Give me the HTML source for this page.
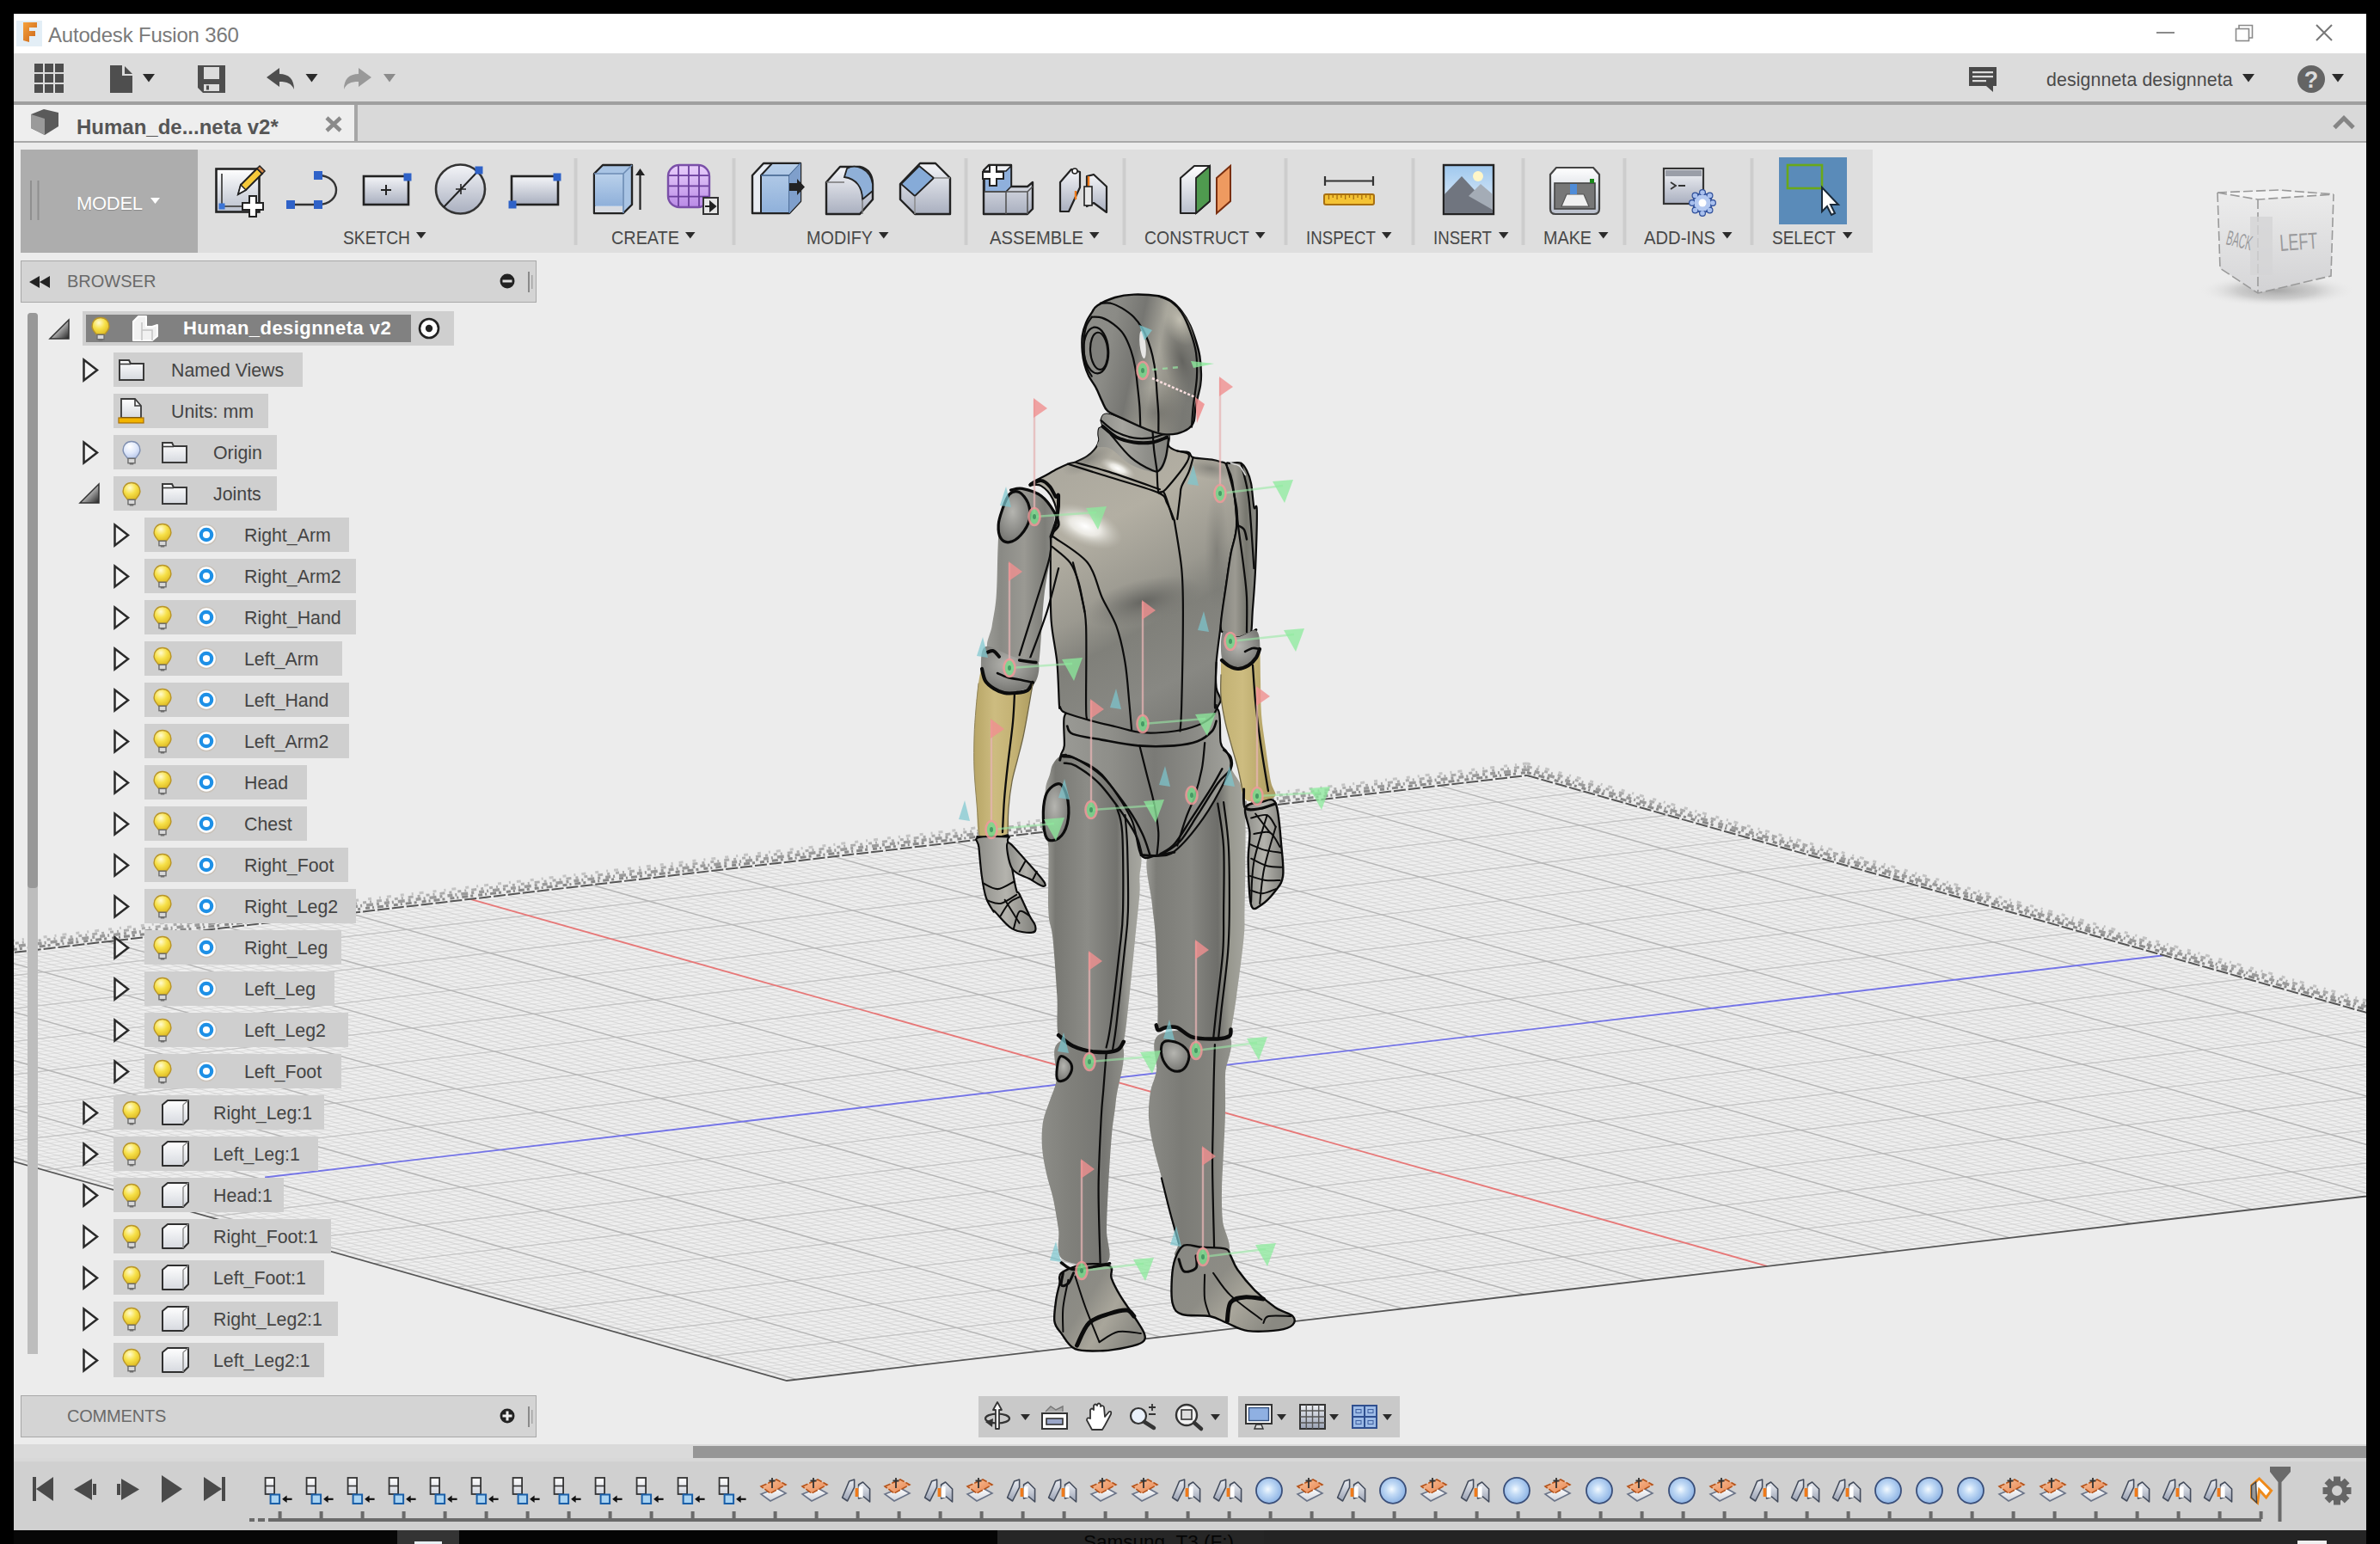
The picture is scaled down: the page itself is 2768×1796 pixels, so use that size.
<!DOCTYPE html>
<html><head><meta charset="utf-8"><title>Autodesk Fusion 360</title>
<style>
html,body{margin:0;padding:0}
body{width:2768px;height:1796px;background:#000;position:relative;overflow:hidden;font-family:"Liberation Sans",sans-serif;}
.a{position:absolute}
.t{position:absolute;white-space:nowrap;line-height:1}
#titlebar{left:16px;top:16px;width:2736px;height:46px;background:#fff}
#qat{left:16px;top:62px;width:2736px;height:56px;background:#dcdcdc}
#sep1{left:16px;top:118px;width:2736px;height:4px;background:#9f9f9f}
#tabrow{left:16px;top:122px;width:2736px;height:42px;background:#d9d9d9}
#tab{left:16px;top:122px;width:396px;height:42px;background:#eeeeee}
#tabsep{left:412px;top:122px;width:4px;height:42px;background:#a6a6a6}
#sep2{left:16px;top:164px;width:2736px;height:2px;background:#a9a9a9}
#canvas{left:16px;top:166px;width:2736px;height:1514px;background:#ececec}
#ribbon{left:24px;top:174px;width:2154px;height:120px;background:#dedede}
#model{left:24px;top:174px;width:206px;height:120px;background:#adadad}
.hdr{background:#d4d4d4;border:1px solid #a8a8a8;box-sizing:border-box}
.row{position:absolute;height:40px;background:#cfcfcf}
.rt{position:absolute;white-space:nowrap;font-size:21.33px;line-height:42px;color:#444;top:0}
.grp{position:absolute;white-space:nowrap;font-size:21.33px;line-height:1;color:#4a4a4a}
</style></head>
<body>
<div class="a" id="titlebar"></div>
<div class="a" id="qat"></div>
<div class="a" id="sep1"></div>
<div class="a" id="tabrow"></div>
<div class="a" id="tab"></div>
<div class="a" id="tabsep"></div>
<div class="a" id="sep2"></div>
<div class="a" id="canvas"></div>
<svg class="a" style="left:16px;top:166px" width="2736" height="1514" viewBox="16 166 2736 1514"><defs><radialGradient id="vcSh"><stop offset="0" stop-color="#a8a8a8"/><stop offset="0.5" stop-color="#c4c4c4" stop-opacity="0.8"/><stop offset="1" stop-color="#ececec" stop-opacity="0"/></radialGradient><linearGradient id="vcL" x1="0" y1="0" x2="0" y2="1"><stop offset="0" stop-color="#ececec"/><stop offset="1" stop-color="#d6d6d8"/></linearGradient><linearGradient id="vcR" x1="0" y1="0" x2="0" y2="1"><stop offset="0" stop-color="#ebebeb"/><stop offset="1" stop-color="#d2d2d4"/></linearGradient></defs><defs><linearGradient id="fHead" x1="0" y1="0" x2="1" y2="0.25"><stop offset="0" stop-color="#8e8e89"/><stop offset="0.3" stop-color="#8b8b86"/><stop offset="0.52" stop-color="#767672"/><stop offset="0.7" stop-color="#a6a49a"/><stop offset="0.85" stop-color="#8f8d84"/><stop offset="1" stop-color="#7a7a75"/></linearGradient><linearGradient id="fTorso" gradientUnits="userSpaceOnUse" x1="1220" y1="520" x2="1400" y2="860"><stop offset="0" stop-color="#a9a69c"/><stop offset="0.28" stop-color="#b3afa3"/><stop offset="0.5" stop-color="#9b9990"/><stop offset="0.62" stop-color="#80807a"/><stop offset="0.8" stop-color="#888883"/><stop offset="1" stop-color="#757571"/></linearGradient><radialGradient id="fHi"><stop offset="0" stop-color="#ffffff"/><stop offset="0.4" stop-color="#f4f3ee" stop-opacity="0.85"/><stop offset="1" stop-color="#c8c6bc" stop-opacity="0"/></radialGradient><radialGradient id="fHi2"><stop offset="0" stop-color="#c2bfb2"/><stop offset="1" stop-color="#aaa89c" stop-opacity="0"/></radialGradient><radialGradient id="fShade"><stop offset="0" stop-color="#60605c" stop-opacity="0.9"/><stop offset="1" stop-color="#70706c" stop-opacity="0"/></radialGradient><linearGradient id="fPel" x1="0" y1="0" x2="1" y2="0"><stop offset="0" stop-color="#9a9a95"/><stop offset="0.3" stop-color="#8e8e89"/><stop offset="0.55" stop-color="#7a7a76"/><stop offset="0.8" stop-color="#8c8c87"/><stop offset="1" stop-color="#a2a29c"/></linearGradient><linearGradient id="fThL" x1="0" y1="0" x2="1" y2="0"><stop offset="0" stop-color="#a4a49e"/><stop offset="0.12" stop-color="#787873"/><stop offset="0.45" stop-color="#8c8c87"/><stop offset="0.75" stop-color="#72726e"/><stop offset="0.86" stop-color="#9a9a94"/><stop offset="1" stop-color="#a8a8a1"/></linearGradient><linearGradient id="fThR" x1="0" y1="0" x2="1" y2="0"><stop offset="0" stop-color="#9a9a95"/><stop offset="0.1" stop-color="#7c7c77"/><stop offset="0.45" stop-color="#878782"/><stop offset="0.72" stop-color="#6e6e6a"/><stop offset="0.84" stop-color="#98988f"/><stop offset="1" stop-color="#a6a69f"/></linearGradient><linearGradient id="fShin" x1="0" y1="0" x2="1" y2="0"><stop offset="0" stop-color="#8a8a85"/><stop offset="0.4" stop-color="#7b7b76"/><stop offset="0.8" stop-color="#85857f"/><stop offset="1" stop-color="#93938d"/></linearGradient><linearGradient id="fShinL" x1="0" y1="0" x2="1" y2="0"><stop offset="0" stop-color="#8c8c87"/><stop offset="0.35" stop-color="#80807b"/><stop offset="0.75" stop-color="#767672"/><stop offset="1" stop-color="#8f8f89"/></linearGradient><linearGradient id="fFoot" x1="0" y1="0" x2="1" y2="0.6"><stop offset="0" stop-color="#878782"/><stop offset="0.45" stop-color="#8d8c85"/><stop offset="0.7" stop-color="#a9a69b"/><stop offset="1" stop-color="#8a8982"/></linearGradient><linearGradient id="fArmL" x1="0" y1="0" x2="1" y2="0"><stop offset="0" stop-color="#9a9a95"/><stop offset="0.2" stop-color="#8a8a85"/><stop offset="0.55" stop-color="#9a9993"/><stop offset="0.85" stop-color="#7d7d78"/><stop offset="1" stop-color="#8d8d88"/></linearGradient><linearGradient id="fArmR" x1="0" y1="0" x2="1" y2="0"><stop offset="0" stop-color="#85857f"/><stop offset="0.4" stop-color="#9c9a92"/><stop offset="0.7" stop-color="#77776f"/><stop offset="1" stop-color="#8c8c86"/></linearGradient><radialGradient id="fBall" cx="0.45" cy="0.4" r="0.7"><stop offset="0" stop-color="#b5b5b0"/><stop offset="0.6" stop-color="#8a8a86"/><stop offset="1" stop-color="#6c6c68"/></radialGradient><linearGradient id="fTanL" x1="0" y1="0" x2="1" y2="0"><stop offset="0" stop-color="#b7a566"/><stop offset="0.35" stop-color="#cdbc80"/><stop offset="0.7" stop-color="#c3b173"/><stop offset="1" stop-color="#ad9c60"/></linearGradient><linearGradient id="fTanR" x1="0" y1="0" x2="1" y2="0"><stop offset="0" stop-color="#c2b173"/><stop offset="0.4" stop-color="#cdbc80"/><stop offset="0.75" stop-color="#b9a86a"/><stop offset="1" stop-color="#a89760"/></linearGradient><linearGradient id="fNeck" x1="0" y1="0" x2="1" y2="0"><stop offset="0" stop-color="#8c8c87"/><stop offset="0.35" stop-color="#a6a59f"/><stop offset="0.7" stop-color="#8e8e89"/><stop offset="1" stop-color="#83837e"/></linearGradient><linearGradient id="fHand" x1="0" y1="0" x2="1" y2="0"><stop offset="0" stop-color="#8c8c87"/><stop offset="0.5" stop-color="#b4b3ad"/><stop offset="1" stop-color="#80807b"/></linearGradient></defs><path d="M-591.0,1179.0L1776.0,902.0L3287.0,1329.0L915.0,1606.0Z" fill="#efefef"/><path d="M-581.4,1181.7L1785.6,904.7M-571.8,1184.4L1795.2,907.4M-562.2,1187.2L1804.8,910.2M-552.7,1189.9L1814.5,912.9M-543.1,1192.6L1824.1,915.6M-533.5,1195.3L1833.7,918.3M-514.3,1200.7L1852.9,923.7M-504.8,1203.4L1862.5,926.4M-495.2,1206.2L1872.1,929.2M-485.6,1208.9L1881.7,931.9M-476.0,1211.6L1891.4,934.6M-466.4,1214.3L1901.0,937.3M-456.9,1217.0L1910.6,940.0M-447.3,1219.7L1920.2,942.7M-437.7,1222.5L1929.8,945.5M-418.5,1227.9L1949.0,950.9M-409.0,1230.6L1958.7,953.6M-399.4,1233.3L1968.3,956.3M-389.8,1236.1L1977.9,959.1M-380.2,1238.8L1987.5,961.8M-370.6,1241.5L1997.1,964.5M-361.0,1244.2L2006.7,967.2M-351.5,1246.9L2016.3,969.9M-341.9,1249.6L2026.0,972.6M-322.7,1255.1L2045.2,978.1M-313.1,1257.8L2054.8,980.8M-303.5,1260.5L2064.4,983.5M-294.0,1263.2L2074.0,986.2M-284.4,1265.9L2083.7,988.9M-274.8,1268.7L2093.3,991.7M-265.2,1271.4L2102.9,994.4M-255.6,1274.1L2112.5,997.1M-246.0,1276.8L2122.1,999.8M-226.9,1282.2L2141.4,1005.2M-217.3,1285.0L2151.0,1008.0M-207.7,1287.7L2160.6,1010.7M-198.1,1290.4L2170.2,1013.4M-188.5,1293.1L2179.8,1016.1M-178.9,1295.8L2189.4,1018.8M-169.3,1298.6L2199.1,1021.6M-159.7,1301.3L2208.7,1024.3M-150.2,1304.0L2218.3,1027.0M-131.0,1309.4L2237.5,1032.4M-121.4,1312.1L2247.2,1035.1M-111.8,1314.9L2256.8,1037.9M-102.2,1317.6L2266.4,1040.6M-92.6,1320.3L2276.0,1043.3M-83.0,1323.0L2285.6,1046.0M-73.5,1325.7L2295.3,1048.7M-63.9,1328.5L2304.9,1051.5M-54.3,1331.2L2314.5,1054.2M-35.1,1336.6L2333.7,1059.6M-25.5,1339.3L2343.4,1062.3M-15.9,1342.1L2353.0,1065.1M-6.3,1344.8L2362.6,1067.8M3.3,1347.5L2372.2,1070.5M12.8,1350.2L2381.9,1073.2M22.4,1352.9L2391.5,1075.9M32.0,1355.6L2401.1,1078.6M41.6,1358.4L2410.7,1081.4M60.8,1363.8L2430.0,1086.8M70.4,1366.5L2439.6,1089.5M80.0,1369.2L2449.2,1092.2M89.6,1372.0L2458.8,1095.0M99.2,1374.7L2468.5,1097.7M108.8,1377.4L2478.1,1100.4M118.4,1380.1L2487.7,1103.1M127.9,1382.8L2497.3,1105.8M137.5,1385.6L2507.0,1108.6M156.7,1391.0L2526.2,1114.0M166.3,1393.7L2535.8,1116.7M175.9,1396.4L2545.5,1119.4M185.5,1399.2L2555.1,1122.2M195.1,1401.9L2564.7,1124.9M204.7,1404.6L2574.3,1127.6M214.3,1407.3L2584.0,1130.3M223.9,1410.0L2593.6,1133.0M233.5,1412.8L2603.2,1135.8M252.7,1418.2L2622.5,1141.2M262.3,1420.9L2632.1,1143.9M271.9,1423.6L2641.7,1146.6M281.5,1426.4L2651.3,1149.4M291.0,1429.1L2661.0,1152.1M300.6,1431.8L2670.6,1154.8M310.2,1434.5L2680.2,1157.5M319.8,1437.3L2689.9,1160.3M329.4,1440.0L2699.5,1163.0M348.6,1445.4L2718.7,1168.4M358.2,1448.1L2728.4,1171.1M367.8,1450.9L2738.0,1173.9M377.4,1453.6L2747.6,1176.6M387.0,1456.3L2757.3,1179.3M396.6,1459.0L2766.9,1182.0M406.2,1461.7L2776.5,1184.7M415.8,1464.5L2786.1,1187.5M425.4,1467.2L2795.8,1190.2M444.6,1472.6L2815.0,1195.6M454.2,1475.3L2824.7,1198.3M463.8,1478.1L2834.3,1201.1M473.4,1480.8L2843.9,1203.8M483.0,1483.5L2853.6,1206.5M492.6,1486.2L2863.2,1209.2M502.2,1489.0L2872.8,1212.0M511.8,1491.7L2882.5,1214.7M521.4,1494.4L2892.1,1217.4M540.6,1499.8L2911.4,1222.8M550.2,1502.6L2921.0,1225.6M559.8,1505.3L2930.6,1228.3M569.4,1508.0L2940.2,1231.0M579.0,1510.7L2949.9,1233.7M588.6,1513.5L2959.5,1236.5M598.2,1516.2L2969.1,1239.2M607.8,1518.9L2978.8,1241.9M617.4,1521.6L2988.4,1244.6M636.6,1527.1L3007.7,1250.1M646.2,1529.8L3017.3,1252.8M655.8,1532.5L3027.0,1255.5M665.4,1535.2L3036.6,1258.2M675.0,1538.0L3046.2,1261.0M684.6,1540.7L3055.9,1263.7M694.2,1543.4L3065.5,1266.4M703.8,1546.1L3075.1,1269.1M713.4,1548.8L3084.8,1271.8M732.6,1554.3L3104.0,1277.3M742.2,1557.0L3113.7,1280.0M751.8,1559.7L3123.3,1282.7M761.5,1562.5L3132.9,1285.5M771.1,1565.2L3142.6,1288.2M780.7,1567.9L3152.2,1290.9M790.3,1570.6L3161.9,1293.6M799.9,1573.4L3171.5,1296.4M809.5,1576.1L3181.1,1299.1M828.7,1581.5L3200.4,1304.5M838.3,1584.3L3210.0,1307.3M847.9,1587.0L3219.7,1310.0M857.5,1589.7L3229.3,1312.7M867.1,1592.4L3239.0,1315.4M876.7,1595.1L3248.6,1318.1M886.3,1597.9L3258.2,1320.9M895.9,1600.6L3267.9,1323.6M905.5,1603.3L3277.5,1326.3" stroke="#dadada" stroke-width="1.1" fill="none" opacity="0.8"/><path d="M-565.1,1176.0L940.9,1603.0M-551.0,1174.3L955.0,1601.3M-537.0,1172.7L969.1,1599.7M-522.9,1171.0L983.2,1598.0M-508.8,1169.4L997.3,1596.4M-494.8,1167.7L1011.5,1594.7M-480.7,1166.1L1025.6,1593.1M-466.6,1164.4L1039.7,1591.4M-452.5,1162.8L1053.8,1589.8M-424.4,1159.5L1082.0,1586.5M-410.3,1157.9L1096.1,1584.9M-396.3,1156.2L1110.2,1583.2M-382.2,1154.6L1124.3,1581.6M-368.1,1152.9L1138.4,1579.9M-354.0,1151.3L1152.5,1578.3M-340.0,1149.6L1166.6,1576.6M-325.9,1148.0L1180.7,1575.0M-311.8,1146.3L1194.8,1573.3M-283.7,1143.0L1223.0,1570.0M-269.6,1141.4L1237.1,1568.4M-255.5,1139.7L1251.2,1566.7M-241.4,1138.1L1265.3,1565.1M-227.4,1136.4L1279.4,1563.4M-213.3,1134.8L1293.5,1561.8M-199.2,1133.2L1307.6,1560.2M-185.1,1131.5L1321.7,1558.5M-171.1,1129.9L1335.8,1556.9M-142.9,1126.6L1364.0,1553.6M-128.8,1124.9L1378.1,1551.9M-114.8,1123.3L1392.2,1550.3M-100.7,1121.6L1406.3,1548.6M-86.6,1120.0L1420.4,1547.0M-72.5,1118.3L1434.5,1545.3M-58.5,1116.7L1448.7,1543.7M-44.4,1115.0L1462.8,1542.0M-30.3,1113.4L1476.9,1540.4M-2.2,1110.1L1505.1,1537.1M11.9,1108.4L1519.2,1535.4M26.0,1106.8L1533.3,1533.8M40.1,1105.1L1547.4,1532.1M54.1,1103.5L1561.5,1530.5M68.2,1101.9L1575.6,1528.9M82.3,1100.2L1589.7,1527.2M96.4,1098.6L1603.8,1525.6M110.5,1096.9L1617.9,1523.9M138.6,1093.6L1646.2,1520.6M152.7,1092.0L1660.3,1519.0M166.8,1090.3L1674.4,1517.3M180.8,1088.7L1688.5,1515.7M194.9,1087.0L1702.6,1514.0M209.0,1085.4L1716.7,1512.4M223.1,1083.7L1730.8,1510.7M237.2,1082.1L1744.9,1509.1M251.2,1080.4L1759.0,1507.4M279.4,1077.1L1787.2,1504.1M293.5,1075.5L1801.4,1502.5M307.6,1073.8L1815.5,1500.8M321.6,1072.2L1829.6,1499.2M335.7,1070.5L1843.7,1497.5M349.8,1068.9L1857.8,1495.9M363.9,1067.3L1871.9,1494.3M378.0,1065.6L1886.0,1492.6M392.1,1064.0L1900.1,1491.0M420.2,1060.7L1928.3,1487.7M434.3,1059.0L1942.5,1486.0M448.4,1057.4L1956.6,1484.4M462.5,1055.7L1970.7,1482.7M476.5,1054.1L1984.8,1481.1M490.6,1052.4L1998.9,1479.4M504.7,1050.8L2013.0,1477.8M518.8,1049.1L2027.1,1476.1M532.9,1047.5L2041.2,1474.5M561.0,1044.2L2069.5,1471.2M575.1,1042.5L2083.6,1469.5M589.2,1040.9L2097.7,1467.9M603.3,1039.2L2111.8,1466.2M617.4,1037.6L2125.9,1464.6M631.5,1035.9L2140.0,1462.9M645.5,1034.3L2154.2,1461.3M659.6,1032.6L2168.3,1459.6M673.7,1031.0L2182.4,1458.0M701.9,1027.7L2210.6,1454.7M716.0,1026.1L2224.7,1453.1M730.0,1024.4L2238.8,1451.4M744.1,1022.8L2253.0,1449.8M758.2,1021.1L2267.1,1448.1M772.3,1019.5L2281.2,1446.5M786.4,1017.8L2295.3,1444.8M800.5,1016.2L2309.4,1443.2M814.6,1014.5L2323.5,1441.5M842.7,1011.2L2351.8,1438.2M856.8,1009.6L2365.9,1436.6M870.9,1007.9L2380.0,1434.9M885.0,1006.3L2394.1,1433.3M899.1,1004.6L2408.2,1431.6M913.2,1003.0L2422.3,1430.0M927.3,1001.3L2436.5,1428.3M941.3,999.7L2450.6,1426.7M955.4,998.0L2464.7,1425.0M983.6,994.7L2492.9,1421.7M997.7,993.1L2507.1,1420.1M1011.8,991.4L2521.2,1418.4M1025.9,989.8L2535.3,1416.8M1040.0,988.1L2549.4,1415.1M1054.1,986.5L2563.5,1413.5M1068.1,984.8L2577.6,1411.8M1082.2,983.2L2591.8,1410.2M1096.3,981.5L2605.9,1408.5M1124.5,978.2L2634.1,1405.2M1138.6,976.6L2648.2,1403.6M1152.7,974.9L2662.4,1401.9M1166.8,973.3L2676.5,1400.3M1180.9,971.6L2690.6,1398.6M1195.0,970.0L2704.7,1397.0M1209.0,968.3L2718.8,1395.3M1223.1,966.7L2733.0,1393.7M1237.2,965.1L2747.1,1392.1M1265.4,961.8L2775.3,1388.8M1279.5,960.1L2789.4,1387.1M1293.6,958.5L2803.6,1385.5M1307.7,956.8L2817.7,1383.8M1321.8,955.2L2831.8,1382.2M1335.9,953.5L2845.9,1380.5M1350.0,951.9L2860.1,1378.9M1364.0,950.2L2874.2,1377.2M1378.1,948.6L2888.3,1375.6M1406.3,945.3L2916.5,1372.3M1420.4,943.6L2930.7,1370.6M1434.5,942.0L2944.8,1369.0M1448.6,940.3L2958.9,1367.3M1462.7,938.7L2973.0,1365.7M1476.8,937.0L2987.2,1364.0M1490.9,935.4L3001.3,1362.4M1505.0,933.7L3015.4,1360.7M1519.1,932.1L3029.5,1359.1M1547.3,928.8L3057.8,1355.8M1561.4,927.1L3071.9,1354.1M1575.5,925.5L3086.0,1352.5M1589.6,923.8L3100.2,1350.8M1603.6,922.2L3114.3,1349.2M1617.7,920.5L3128.4,1347.5M1631.8,918.9L3142.5,1345.9M1645.9,917.2L3156.7,1344.2M1660.0,915.6L3170.8,1342.6M1688.2,912.3L3199.0,1339.3M1702.3,910.6L3213.2,1337.6M1716.4,909.0L3227.3,1336.0M1730.5,907.3L3241.4,1334.3M1744.6,905.7L3255.5,1332.7M1758.7,904.0L3269.7,1331.0" stroke="#d2d2d2" stroke-width="1.1" fill="none" opacity="0.8"/><path d="M-523.9,1198.0L1843.3,921.0M-428.1,1225.2L1939.4,948.2M-332.3,1252.4L2035.6,975.4M-236.4,1279.5L2131.7,1002.5M-140.6,1306.7L2227.9,1029.7M-44.7,1333.9L2324.1,1056.9M51.2,1361.1L2420.3,1084.1M243.1,1415.5L2612.8,1138.5M339.0,1442.7L2709.1,1165.7M435.0,1469.9L2805.4,1192.9M531.0,1497.1L2901.7,1220.1M627.0,1524.3L2998.0,1247.3M723.0,1551.6L3094.4,1274.6M819.1,1578.8L3190.8,1301.8" stroke="#c4c4c4" stroke-width="1.4" fill="none"/><path d="M-579.2,1177.6L926.8,1604.6M-438.5,1161.1L1067.9,1588.1M-297.7,1144.7L1208.9,1571.7M-157.0,1128.2L1349.9,1555.2M-16.2,1111.7L1491.0,1538.7M124.5,1095.3L1632.0,1522.3M265.3,1078.8L1773.1,1505.8M406.1,1062.3L1914.2,1489.3M687.8,1029.3L2196.5,1456.3M828.7,1012.9L2337.6,1439.9M969.5,996.4L2478.8,1423.4M1110.4,979.9L2620.0,1406.9M1251.3,963.4L2761.2,1390.4M1392.2,946.9L2902.4,1373.9M1533.2,930.4L3043.7,1357.4M1674.1,913.9L3184.9,1340.9" stroke="#b6b6b6" stroke-width="1.5" fill="none"/><path d="M547.0,1045.8L2055.4,1472.8" stroke="#e67878" stroke-width="1.9" fill="none"/><path d="M308.1,1369.5L2516.6,1111.3" stroke="#7474e6" stroke-width="1.9" fill="none"/><path d="M-591.0,1175.5L1776.0,898.5" stroke="#5e5e5e" stroke-width="3" stroke-dasharray="5 3 2 4 7 3 3 6" fill="none" opacity="0.7"/><path d="M-591.0,1172.0L1776.0,895.0" stroke="#6e6e6e" stroke-width="3.5" stroke-dasharray="3 6 6 3 2 5 8 4" fill="none" opacity="0.65"/><path d="M-591.0,1168.5L1776.0,891.5" stroke="#808080" stroke-width="3" stroke-dasharray="6 5 3 7 4 4 2 6" fill="none" opacity="0.6"/><path d="M-591.0,1165.0L1776.0,888.0" stroke="#999" stroke-width="3" stroke-dasharray="4 9 2 7 5 11" fill="none" opacity="0.5"/><path d="M-591.0,1179.0L1776.0,902.0" stroke="#555" stroke-width="2" stroke-dasharray="14 3" fill="none"/><path d="M1776.0,898.5L3287.0,1325.5" stroke="#5e5e5e" stroke-width="3" stroke-dasharray="5 3 2 4 7 3 3 6" fill="none" opacity="0.7"/><path d="M1776.0,895.0L3287.0,1322.0" stroke="#6e6e6e" stroke-width="3.5" stroke-dasharray="3 6 6 3 2 5 8 4" fill="none" opacity="0.65"/><path d="M1776.0,891.5L3287.0,1318.5" stroke="#808080" stroke-width="3" stroke-dasharray="6 5 3 7 4 4 2 6" fill="none" opacity="0.6"/><path d="M1776.0,888.0L3287.0,1315.0" stroke="#999" stroke-width="3" stroke-dasharray="4 9 2 7 5 11" fill="none" opacity="0.5"/><path d="M1776.0,902.0L3287.0,1329.0" stroke="#555" stroke-width="2" stroke-dasharray="14 3" fill="none"/><path d="M-591.0,1179.0L915.0,1606.0L3287.0,1329.0" stroke="#555" stroke-width="1.8" fill="none"/><path d="M1349.0,1203.0C1335.3,1210.0 1346.8,1233.8 1345.0,1245.0C1343.2,1256.2 1339.5,1260.8 1338.0,1270.0C1336.5,1279.2 1335.5,1289.7 1336.0,1300.0C1336.5,1310.3 1338.5,1320.3 1341.0,1332.0C1343.5,1343.7 1347.7,1357.0 1351.0,1370.0C1354.3,1383.0 1357.8,1397.5 1361.0,1410.0C1364.2,1422.5 1368.5,1436.3 1370.0,1445.0C1371.5,1453.7 1360.5,1459.8 1370.0,1462.0C1379.5,1464.2 1418.3,1465.0 1427.0,1458.0C1435.7,1451.0 1423.0,1432.2 1422.0,1420.0C1421.0,1407.8 1420.8,1398.3 1421.0,1385.0C1421.2,1371.7 1422.3,1355.0 1423.0,1340.0C1423.7,1325.0 1424.7,1310.0 1425.0,1295.0C1425.3,1280.0 1424.7,1265.3 1425.0,1250.0C1425.3,1234.7 1439.7,1210.8 1427.0,1203.0C1414.3,1195.2 1362.7,1196.0 1349.0,1203.0Z" fill="url(#fShin)" stroke="none"/><path d="M1412.9,1215.2C1412.7,1222.5 1411.9,1244.8 1411.6,1258.9C1411.3,1273.1 1411.2,1283.1 1410.9,1300.0C1410.7,1316.9 1409.9,1335.2 1410.1,1360.3C1410.3,1385.4 1411.8,1435.6 1412.1,1450.7" fill="none" stroke="#0c0c0c" stroke-width="2.2" stroke-linecap="round" /><path d="M1350.9,1370.4C1352.6,1377.1 1357.6,1397.8 1360.9,1410.5C1364.3,1423.2 1369.3,1440.6 1371.0,1446.7" fill="none" stroke="#0c0c0c" stroke-width="2.2" stroke-linecap="round" /><path d="M1366.9,1463.7C1364.6,1470.1 1363.4,1478.0 1362.9,1486.8C1362.4,1495.7 1361.9,1509.9 1363.9,1516.9C1365.9,1524.0 1367.8,1526.7 1375.0,1529.0C1382.2,1531.3 1398.4,1529.3 1407.1,1531.0C1415.8,1532.7 1419.8,1536.2 1427.2,1539.0C1434.6,1541.9 1441.2,1546.7 1451.3,1548.1C1461.3,1549.4 1478.7,1548.2 1487.4,1547.1C1496.1,1545.9 1500.8,1543.7 1503.5,1541.0C1506.2,1538.4 1506.8,1534.4 1503.5,1531.0C1500.1,1527.7 1490.8,1526.0 1483.4,1521.0C1476.1,1515.9 1466.7,1508.2 1459.3,1500.9C1452.0,1493.5 1443.9,1483.5 1439.2,1476.8C1434.6,1470.1 1433.5,1464.7 1431.2,1460.7C1428.9,1456.7 1430.9,1454.4 1425.2,1452.7C1419.5,1451.0 1405.1,1451.4 1397.1,1450.7C1389.0,1450.0 1382.0,1446.5 1377.0,1448.7C1372.0,1450.9 1369.3,1457.4 1366.9,1463.7Z" fill="url(#fFoot)" stroke="#0c0c0c" stroke-width="2.4" stroke-linejoin="round" /><path d="M1427.2,1537.0C1427.9,1533.3 1427.9,1519.6 1431.2,1514.9C1434.6,1510.3 1440.9,1509.6 1447.3,1508.9C1453.6,1508.2 1465.7,1510.6 1469.4,1510.9" fill="none" stroke="#0c0c0c" stroke-width="5" stroke-linecap="round" /><path d="M1401.1,1482.8C1401.1,1487.5 1400.1,1502.9 1401.1,1510.9C1402.1,1519.0 1406.1,1527.7 1407.1,1531.0" fill="none" stroke="#0c0c0c" stroke-width="2" stroke-linecap="round" /><path d="M1411.1,1480.8C1414.5,1485.2 1421.8,1497.9 1431.2,1506.9C1440.6,1515.9 1461.3,1530.3 1467.3,1535.0" fill="none" stroke="#0c0c0c" stroke-width="2" stroke-linecap="round" /><path d="M1469.4,1539.0C1470.4,1537.7 1470.0,1532.3 1475.4,1531.0C1480.7,1529.7 1497.1,1531.0 1501.5,1531.0" fill="none" stroke="#0c0c0c" stroke-width="2" stroke-linecap="round" /><path d="M1371.0,1464.7C1372.0,1467.1 1373.6,1477.1 1377.0,1478.8C1380.3,1480.5 1388.7,1477.8 1391.0,1474.8C1393.4,1471.8 1391.0,1463.1 1391.0,1460.7" fill="none" stroke="#0c0c0c" stroke-width="3" stroke-linecap="round" /><path d="M1232.0,1212.0C1219.7,1219.2 1230.8,1243.7 1229.0,1255.0C1227.2,1266.3 1223.7,1271.7 1221.0,1280.0C1218.3,1288.3 1214.5,1295.8 1213.0,1305.0C1211.5,1314.2 1211.3,1325.0 1212.0,1335.0C1212.7,1345.0 1214.8,1355.0 1217.0,1365.0C1219.2,1375.0 1222.7,1384.2 1225.0,1395.0C1227.3,1405.8 1229.2,1418.3 1231.0,1430.0C1232.8,1441.7 1226.7,1458.5 1236.0,1465.0C1245.3,1471.5 1278.5,1474.8 1287.0,1469.0C1295.5,1463.2 1286.7,1444.8 1287.0,1430.0C1287.3,1415.2 1288.0,1398.3 1289.0,1380.0C1290.0,1361.7 1291.5,1336.8 1293.0,1320.0C1294.5,1303.2 1296.3,1297.0 1298.0,1279.0C1299.7,1261.0 1314.0,1223.2 1303.0,1212.0C1292.0,1200.8 1244.3,1204.8 1232.0,1212.0Z" fill="url(#fShinL)" stroke="none"/><path d="M1286.6,1225.3C1286.1,1232.3 1284.2,1254.9 1283.3,1267.4C1282.3,1279.8 1281.7,1281.2 1280.7,1300.0C1279.8,1318.9 1277.8,1352.3 1277.6,1380.4C1277.4,1408.5 1279.3,1454.0 1279.6,1468.8" fill="none" stroke="#0c0c0c" stroke-width="2.2" stroke-linecap="round" /><path d="M1234.4,1480.8C1229.7,1484.5 1233.4,1487.8 1232.4,1492.9C1231.4,1497.9 1229.4,1503.6 1228.4,1510.9C1227.4,1518.3 1225.4,1530.3 1226.4,1537.0C1227.4,1543.7 1230.4,1545.7 1234.4,1551.1C1238.4,1556.4 1242.4,1565.8 1250.5,1569.2C1258.5,1572.5 1272.6,1571.5 1282.6,1571.2C1292.7,1570.8 1303.0,1568.8 1310.7,1567.1C1318.4,1565.5 1325.4,1563.8 1328.8,1561.1C1332.1,1558.4 1332.5,1556.1 1330.8,1551.1C1329.1,1546.1 1323.4,1538.4 1318.8,1531.0C1314.1,1523.6 1307.0,1514.3 1302.7,1506.9C1298.3,1499.5 1294.7,1492.5 1292.7,1486.8C1290.6,1481.1 1296.0,1475.4 1290.6,1472.8C1285.3,1470.1 1269.9,1469.4 1260.5,1470.8C1251.2,1472.1 1239.1,1477.1 1234.4,1480.8Z" fill="url(#fFoot)" stroke="#0c0c0c" stroke-width="2.4" stroke-linejoin="round" /><path d="M1252.5,1565.1C1254.8,1560.8 1260.2,1545.2 1266.5,1539.0C1272.9,1532.8 1283.3,1530.5 1290.6,1528.0C1298.0,1525.5 1306.0,1523.5 1310.7,1524.0C1315.4,1524.5 1317.4,1529.8 1318.8,1531.0" fill="none" stroke="#0c0c0c" stroke-width="5" stroke-linecap="round" /><path d="M1242.4,1488.8C1241.4,1494.2 1237.4,1510.9 1236.4,1521.0C1235.4,1531.0 1236.4,1544.4 1236.4,1549.1" fill="none" stroke="#0c0c0c" stroke-width="2" stroke-linecap="round" /><path d="M1250.5,1484.8C1252.5,1490.8 1257.8,1508.2 1262.5,1521.0C1267.2,1533.7 1275.9,1554.4 1278.6,1561.1" fill="none" stroke="#0c0c0c" stroke-width="2" stroke-linecap="round" /><path d="M1278.6,1561.1C1282.3,1559.1 1292.7,1550.7 1300.7,1549.1C1308.7,1547.4 1322.4,1550.7 1326.8,1551.1" fill="none" stroke="#0c0c0c" stroke-width="2" stroke-linecap="round" /><path d="M1234.4,1468.8C1237.1,1470.1 1241.1,1476.6 1250.5,1476.8C1259.9,1477.0 1283.9,1470.9 1290.6,1469.8" fill="none" stroke="#0c0c0c" stroke-width="3.5" stroke-linecap="round" /><path d="M1236.4,1480.8C1236.1,1483.1 1233.4,1492.9 1234.4,1494.9C1235.4,1496.9 1240.1,1495.2 1242.4,1492.9C1244.8,1490.5 1247.5,1482.8 1248.5,1480.8" fill="none" stroke="#0c0c0c" stroke-width="3" stroke-linecap="round" /><path d="M1234.4,879.2C1229.9,880.3 1226.6,885.6 1224.3,889.3C1222.1,892.9 1222.4,896.3 1220.9,901.1C1219.5,905.8 1217.0,909.5 1215.9,917.9C1214.8,926.3 1214.5,943.2 1214.2,951.6C1213.9,960.0 1213.4,962.8 1214.2,968.4C1215.1,974.0 1218.4,970.0 1219.3,985.3C1220.1,1000.5 1218.4,1042.5 1219.3,1060.0C1220.1,1077.6 1222.6,1074.2 1224.3,1090.5C1226.0,1106.8 1228.2,1138.8 1229.4,1157.9C1230.5,1177.0 1228.0,1195.1 1231.1,1205.1C1234.1,1215.0 1240.9,1214.5 1247.9,1217.7C1254.9,1220.9 1264.7,1223.6 1273.2,1224.4C1281.6,1225.3 1292.8,1224.8 1298.4,1222.7C1304.0,1220.6 1304.3,1222.6 1306.8,1211.8C1309.4,1201.0 1311.3,1178.1 1313.6,1157.9C1315.8,1137.7 1318.4,1110.2 1320.3,1090.5C1322.3,1070.9 1324.5,1051.9 1325.4,1040.0C1326.2,1028.1 1325.1,1026.5 1325.4,1018.9C1325.6,1011.4 1328.7,1005.8 1327.1,994.5C1325.4,983.3 1322.8,967.2 1315.3,951.6C1307.7,936.0 1292.2,912.6 1281.6,901.1C1270.9,889.5 1259.1,886.2 1251.3,882.5C1243.4,878.9 1238.9,878.0 1234.4,879.2Z" fill="url(#fThL)" stroke="#0c0c0c" stroke-width="0" stroke-linejoin="round" /><path d="M1334.6,997.1C1339.0,987.1 1355.0,997.9 1365.8,990.3C1376.6,982.7 1389.9,966.5 1399.5,951.6C1409.0,936.7 1419.1,914.2 1423.1,901.1C1427.0,887.9 1421.6,875.8 1423.1,872.4C1424.5,869.1 1429.9,877.2 1431.5,880.8C1433.0,884.5 1430.1,888.1 1432.3,894.3C1434.6,900.5 1442.3,908.4 1444.9,917.9C1447.6,927.4 1447.8,937.5 1448.3,951.6C1448.9,965.6 1448.5,984.0 1448.3,1002.1C1448.2,1020.2 1447.8,1045.3 1447.5,1060.0C1447.2,1074.8 1448.2,1074.2 1446.6,1090.5C1445.1,1106.8 1440.7,1139.6 1438.2,1157.9C1435.7,1176.1 1432.9,1192.0 1431.5,1200.0C1430.1,1208.0 1432.3,1204.4 1429.8,1205.9C1427.3,1207.4 1423.3,1209.0 1416.3,1209.3C1409.3,1209.5 1395.5,1209.8 1387.7,1207.6C1379.8,1205.3 1374.5,1197.8 1369.2,1195.8C1363.8,1193.8 1359.3,1195.2 1355.7,1195.8C1352.0,1196.4 1348.8,1199.9 1347.3,1199.2C1345.7,1198.5 1346.6,1198.5 1346.4,1191.6C1346.3,1184.7 1346.8,1174.7 1346.4,1157.9C1346.0,1141.1 1345.0,1108.5 1343.9,1090.5C1342.8,1072.6 1341.2,1065.7 1339.7,1050.1C1338.1,1034.5 1330.3,1007.0 1334.6,997.1Z" fill="url(#fThR)" stroke="#0c0c0c" stroke-width="0" stroke-linejoin="round" /><path d="M1231.1,1204.2C1233.9,1206.3 1240.9,1213.6 1247.9,1216.8C1254.9,1220.1 1264.7,1222.7 1273.2,1223.6C1281.6,1224.4 1292.8,1223.9 1298.4,1221.9C1304.0,1219.9 1305.4,1213.5 1306.8,1211.8" fill="none" stroke="#0c0c0c" stroke-width="4.5" stroke-linecap="round" /><path d="M1344.7,1192.4C1345.2,1193.4 1345.4,1197.8 1347.3,1198.3C1349.1,1198.8 1352.0,1195.8 1355.7,1195.3C1359.3,1194.8 1363.8,1193.4 1369.2,1195.3C1374.5,1197.2 1379.8,1204.5 1387.7,1206.7C1395.5,1208.9 1409.3,1208.7 1416.3,1208.4C1423.3,1208.1 1427.3,1206.9 1429.8,1205.1C1432.3,1203.2 1431.2,1198.7 1431.5,1197.5" fill="none" stroke="#0c0c0c" stroke-width="4.5" stroke-linecap="round" /><path d="M1233.6,1228.6C1236.1,1227.5 1242.4,1232.6 1244.5,1235.4C1246.6,1238.2 1247.1,1242.1 1246.2,1245.5C1245.4,1248.8 1242.1,1253.8 1239.5,1255.6C1236.8,1257.4 1231.9,1258.7 1230.2,1256.4C1228.5,1254.2 1228.8,1246.7 1229.4,1242.1C1229.9,1237.5 1231.1,1229.8 1233.6,1228.6Z" fill="url(#fBall)" stroke="#0c0c0c" stroke-width="3"/><path d="M1354.0,1211.8C1357.4,1209.8 1366.1,1211.2 1370.8,1213.5C1375.6,1215.7 1381.2,1220.8 1382.6,1225.3C1384.0,1229.8 1381.5,1236.9 1379.3,1240.4C1377.0,1243.9 1372.8,1246.3 1369.2,1246.3C1365.5,1246.3 1360.5,1243.9 1357.4,1240.4C1354.3,1236.9 1351.2,1230.0 1350.6,1225.3C1350.1,1220.5 1350.6,1213.8 1354.0,1211.8Z" fill="url(#fBall)" stroke="#0c0c0c" stroke-width="3"/><path d="M1298.4,938.1C1299.5,943.2 1303.9,948.1 1305.2,968.4C1306.4,988.7 1306.6,1036.9 1306.0,1060.0C1305.4,1083.2 1304.2,1085.4 1301.8,1107.4C1299.4,1129.3 1294.2,1173.1 1291.7,1191.6C1289.2,1210.1 1287.5,1214.0 1286.6,1218.5" fill="none" stroke="#0c0c0c" stroke-width="2.2" stroke-linecap="round" /><path d="M1308.5,948.2C1308.9,954.4 1310.5,966.6 1311.1,985.3C1311.6,1003.9 1312.5,1039.7 1311.9,1060.0C1311.3,1080.4 1309.9,1085.4 1307.7,1107.4C1305.4,1129.3 1300.7,1172.8 1298.4,1191.6C1296.2,1210.4 1294.9,1215.4 1294.2,1220.2" fill="none" stroke="#0c0c0c" stroke-width="2.2" stroke-linecap="round" /><path d="M1416.3,934.7C1417.4,943.2 1421.9,964.4 1423.1,985.3C1424.2,1006.1 1423.2,1039.7 1423.1,1060.0C1422.9,1080.4 1423.6,1088.3 1422.2,1107.4C1420.8,1126.5 1416.5,1158.2 1414.6,1174.7C1412.8,1191.3 1411.8,1201.4 1411.3,1206.7" fill="none" stroke="#0c0c0c" stroke-width="2.2" stroke-linecap="round" /><path d="M1423.1,933.1C1424.0,941.8 1427.8,964.1 1428.9,985.3C1430.1,1006.4 1429.9,1039.7 1429.8,1060.0C1429.6,1080.4 1429.6,1088.3 1428.1,1107.4C1426.6,1126.5 1422.4,1158.2 1420.5,1174.7C1418.7,1191.3 1417.7,1201.4 1417.2,1206.7" fill="none" stroke="#0c0c0c" stroke-width="2.2" stroke-linecap="round" /><path d="M1237.8,833.7C1236.1,839.9 1238.4,859.8 1237.8,867.4C1237.2,874.9 1232.2,876.6 1234.4,879.2C1236.7,881.7 1243.4,878.9 1251.3,882.5C1259.1,886.2 1270.9,889.5 1281.6,901.1C1292.2,912.6 1307.7,936.0 1315.3,951.6C1322.8,967.2 1322.3,987.2 1327.1,994.5C1331.8,1001.8 1337.4,996.1 1343.9,995.4C1350.4,994.7 1356.5,997.6 1365.8,990.3C1375.1,983.0 1389.4,965.9 1399.5,951.6C1409.6,937.3 1421.1,915.1 1426.4,904.4C1431.8,893.8 1431.5,892.6 1431.5,887.6C1431.5,882.5 1428.4,878.0 1426.4,874.1C1424.5,870.2 1421.4,872.1 1419.7,864.0C1418.0,855.9 1420.8,830.3 1416.3,825.3C1411.8,820.2 1401.2,830.9 1392.7,833.7C1384.3,836.5 1377.3,840.7 1365.8,842.1C1354.3,843.5 1337.7,842.9 1323.7,842.1C1309.6,841.3 1294.2,839.0 1281.6,837.1C1268.9,835.1 1255.2,830.9 1247.9,830.3C1240.6,829.8 1239.5,827.5 1237.8,833.7Z" fill="url(#fPel)" stroke="#0c0c0c" stroke-width="2.2" stroke-linejoin="round" /><path d="M1233.6,879.2C1236.0,879.4 1239.9,876.9 1247.9,880.8C1255.9,884.8 1270.6,892.4 1281.6,902.7C1292.5,913.1 1305.7,931.9 1313.6,943.2C1321.4,954.4 1324.8,961.7 1328.7,970.1C1332.7,978.5 1335.8,989.8 1337.2,993.7" fill="none" stroke="#0c0c0c" stroke-width="2.4" stroke-linecap="round" /><path d="M1237.8,887.6C1240.0,888.1 1244.5,887.0 1251.3,890.9C1258.0,894.9 1268.9,901.6 1278.2,911.2C1287.5,920.7 1299.5,937.8 1306.8,948.2C1314.1,958.6 1318.5,965.9 1322.0,973.5C1325.5,981.1 1326.9,990.3 1327.9,993.7" fill="none" stroke="#0c0c0c" stroke-width="2.4" stroke-linecap="round" /><path d="M1232.7,884.2C1233.0,883.4 1233.3,880.1 1234.4,879.2C1235.5,878.2 1238.6,878.5 1239.5,878.3" fill="none" stroke="#0c0c0c" stroke-width="3" stroke-linecap="round" /><path d="M1423.1,872.4C1424.5,873.8 1430.1,877.2 1431.5,880.8C1432.9,884.5 1434.0,889.3 1431.5,894.3C1428.9,899.4 1422.8,902.2 1416.3,911.2C1409.9,920.1 1400.0,937.0 1392.7,948.2C1385.4,959.4 1379.0,971.2 1372.5,978.5C1366.1,985.8 1357.1,989.8 1354.0,992.0" fill="none" stroke="#0c0c0c" stroke-width="2.4" stroke-linecap="round" /><path d="M1421.4,894.3C1419.1,898.2 1413.8,908.4 1407.9,917.9C1402.0,927.4 1393.0,940.9 1386.0,951.6C1379.0,962.2 1372.0,974.9 1365.8,981.9C1359.6,988.9 1351.8,991.7 1348.9,993.7" fill="none" stroke="#0c0c0c" stroke-width="2.4" stroke-linecap="round" /><path d="M1325.4,867.4C1326.8,873.0 1331.0,889.8 1333.8,901.1C1336.6,912.3 1340.0,923.5 1342.2,934.7C1344.5,946.0 1346.7,958.6 1347.3,968.4C1347.8,978.2 1345.9,989.5 1345.6,993.7" fill="none" stroke="#0c0c0c" stroke-width="2.2" stroke-linecap="round" /><path d="M1401.2,864.0C1400.6,869.1 1399.8,883.9 1397.8,894.3C1395.8,904.7 1392.5,916.8 1389.4,926.3C1386.3,935.9 1382.6,942.0 1379.3,951.6C1375.9,961.1 1370.8,978.2 1369.2,983.6" fill="none" stroke="#0c0c0c" stroke-width="2.2" stroke-linecap="round" /><path d="M1327.1,994.5C1329.9,994.7 1337.4,995.9 1343.9,995.4C1350.4,994.8 1362.1,991.9 1365.8,991.2" fill="none" stroke="#0c0c0c" stroke-width="3" stroke-linecap="round" /><path d="M1224.3,914.5C1227.4,912.3 1231.5,910.0 1234.4,912.8C1237.4,915.6 1240.9,923.8 1242.0,931.4C1243.1,938.9 1243.0,951.0 1241.2,958.3C1239.3,965.6 1235.0,972.4 1231.1,975.2C1227.1,978.0 1220.5,979.1 1217.6,975.2C1214.6,971.2 1213.6,959.7 1213.4,951.6C1213.1,943.4 1214.1,932.5 1215.9,926.3C1217.7,920.1 1221.2,916.8 1224.3,914.5Z" fill="url(#fBall)" stroke="#0c0c0c" stroke-width="3.2"/><path d="M1241.2,844.6C1242.3,846.2 1241.2,851.2 1247.9,853.9C1254.6,856.6 1268.9,858.4 1281.6,860.6C1294.2,862.9 1309.6,866.2 1323.7,867.4C1337.7,868.5 1354.3,868.2 1365.8,867.4C1377.3,866.5 1385.4,865.1 1392.7,862.3C1400.0,859.5 1405.9,854.5 1409.6,850.5C1413.2,846.6 1413.8,840.7 1414.6,838.7" fill="none" stroke="#0c0c0c" stroke-width="2.6" stroke-linecap="round" /><path d="M1287.5,481.6C1281.7,481.0 1281.6,485.9 1280.7,488.3C1279.9,490.7 1282.8,494.2 1282.4,495.9C1282.0,497.6 1279.1,496.9 1278.2,498.4C1277.4,500.0 1277.4,502.9 1277.4,505.2C1277.4,507.4 1278.6,509.4 1278.2,511.9C1277.8,514.4 1277.1,517.2 1274.8,520.3C1272.6,523.4 1268.7,527.6 1264.7,530.4C1260.8,533.2 1255.1,535.6 1251.3,537.2C1247.5,538.7 1245.6,538.3 1242.0,539.7C1238.4,541.1 1234.0,543.2 1229.4,545.6C1224.7,548.0 1218.7,551.6 1214.2,554.0C1209.7,556.4 1205.1,558.2 1202.4,559.9C1199.8,561.6 1196.8,563.2 1198.2,564.1C1199.6,565.0 1206.5,562.4 1210.8,565.1C1215.2,567.7 1221.2,574.0 1224.3,580.2C1227.4,586.4 1229.6,594.8 1229.4,602.1C1229.1,609.4 1223.9,614.2 1222.6,624.0C1221.4,633.8 1221.8,644.8 1221.8,661.1C1221.8,677.3 1221.4,703.4 1222.6,721.7C1223.9,739.9 1227.8,754.1 1229.4,770.5C1230.9,786.9 1231.3,811.5 1231.9,820.0C1232.5,828.6 1231.8,820.5 1232.7,821.9C1233.7,823.3 1232.5,826.1 1237.8,828.6C1243.1,831.2 1254.6,834.2 1264.7,837.1C1274.8,839.9 1287.8,842.9 1298.4,845.5C1309.1,848.0 1317.5,851.4 1328.7,852.2C1340.0,853.1 1355.1,851.9 1365.8,850.5C1376.5,849.1 1385.4,846.6 1392.7,843.8C1400.0,841.0 1405.6,837.3 1409.6,833.7C1413.5,830.0 1414.6,825.3 1416.3,821.9C1418.0,818.5 1420.0,817.1 1419.7,813.5C1419.4,809.8 1415.5,807.2 1414.6,800.0C1413.8,792.8 1413.8,782.5 1414.6,770.5C1415.5,758.6 1417.7,743.9 1419.7,728.4C1421.6,713.0 1424.5,691.9 1426.4,677.9C1428.4,663.9 1429.5,655.4 1431.5,644.2C1433.4,633.0 1437.9,624.6 1438.2,610.5C1438.5,596.5 1435.1,571.7 1433.2,560.0C1431.2,548.3 1428.7,544.3 1426.4,540.5C1424.2,536.7 1422.5,538.1 1419.7,537.2C1416.9,536.2 1414.9,535.5 1409.6,534.6C1404.2,533.8 1392.2,533.5 1387.7,532.1C1383.2,530.7 1385.7,527.5 1382.6,526.2C1379.5,524.9 1373.1,525.8 1369.2,524.5C1365.2,523.3 1360.7,521.7 1359.1,518.6C1357.4,515.5 1362.1,508.8 1359.1,506.0C1356.0,503.2 1347.8,504.2 1340.5,501.8C1333.2,499.4 1324.1,495.1 1315.3,491.7C1306.4,488.3 1293.2,482.1 1287.5,481.6Z" fill="url(#fTorso)" stroke="#0c0c0c" stroke-width="2.2" stroke-linejoin="round" /><clipPath id="cTorso"><path d="M1287.5,481.6C1281.7,481.0 1281.6,485.9 1280.7,488.3C1279.9,490.7 1282.8,494.2 1282.4,495.9C1282.0,497.6 1279.1,496.9 1278.2,498.4C1277.4,500.0 1277.4,502.9 1277.4,505.2C1277.4,507.4 1278.6,509.4 1278.2,511.9C1277.8,514.4 1277.1,517.2 1274.8,520.3C1272.6,523.4 1268.7,527.6 1264.7,530.4C1260.8,533.2 1255.1,535.6 1251.3,537.2C1247.5,538.7 1245.6,538.3 1242.0,539.7C1238.4,541.1 1234.0,543.2 1229.4,545.6C1224.7,548.0 1218.7,551.6 1214.2,554.0C1209.7,556.4 1205.1,558.2 1202.4,559.9C1199.8,561.6 1196.8,563.2 1198.2,564.1C1199.6,565.0 1206.5,562.4 1210.8,565.1C1215.2,567.7 1221.2,574.0 1224.3,580.2C1227.4,586.4 1229.6,594.8 1229.4,602.1C1229.1,609.4 1223.9,614.2 1222.6,624.0C1221.4,633.8 1221.8,644.8 1221.8,661.1C1221.8,677.3 1221.4,703.4 1222.6,721.7C1223.9,739.9 1227.8,754.1 1229.4,770.5C1230.9,786.9 1231.3,811.5 1231.9,820.0C1232.5,828.6 1231.8,820.5 1232.7,821.9C1233.7,823.3 1232.5,826.1 1237.8,828.6C1243.1,831.2 1254.6,834.2 1264.7,837.1C1274.8,839.9 1287.8,842.9 1298.4,845.5C1309.1,848.0 1317.5,851.4 1328.7,852.2C1340.0,853.1 1355.1,851.9 1365.8,850.5C1376.5,849.1 1385.4,846.6 1392.7,843.8C1400.0,841.0 1405.6,837.3 1409.6,833.7C1413.5,830.0 1414.6,825.3 1416.3,821.9C1418.0,818.5 1420.0,817.1 1419.7,813.5C1419.4,809.8 1415.5,807.2 1414.6,800.0C1413.8,792.8 1413.8,782.5 1414.6,770.5C1415.5,758.6 1417.7,743.9 1419.7,728.4C1421.6,713.0 1424.5,691.9 1426.4,677.9C1428.4,663.9 1429.5,655.4 1431.5,644.2C1433.4,633.0 1437.9,624.6 1438.2,610.5C1438.5,596.5 1435.1,571.7 1433.2,560.0C1431.2,548.3 1428.7,544.3 1426.4,540.5C1424.2,536.7 1422.5,538.1 1419.7,537.2C1416.9,536.2 1414.9,535.5 1409.6,534.6C1404.2,533.8 1392.2,533.5 1387.7,532.1C1383.2,530.7 1385.7,527.5 1382.6,526.2C1379.5,524.9 1373.1,525.8 1369.2,524.5C1365.2,523.3 1360.7,521.7 1359.1,518.6C1357.4,515.5 1362.1,508.8 1359.1,506.0C1356.0,503.2 1347.8,504.2 1340.5,501.8C1333.2,499.4 1324.1,495.1 1315.3,491.7C1306.4,488.3 1293.2,482.1 1287.5,481.6Z"/></clipPath><g clip-path="url(#cTorso)"><ellipse cx="1266" cy="534" rx="34" ry="13" fill="url(#fShade)" opacity="0.55" transform="rotate(-28 1266 534)"/><ellipse cx="1408" cy="545" rx="34" ry="13" fill="url(#fShade)" opacity="0.6" transform="rotate(8 1408 545)"/><ellipse cx="1415" cy="640" rx="14" ry="70" fill="url(#fShade)" opacity="0.45"/></g><ellipse cx="1262" cy="612" rx="46" ry="22" fill="url(#fHi)" transform="rotate(22 1262 612)"/><ellipse cx="1300" cy="545" rx="22" ry="9" fill="url(#fHi)" transform="rotate(25 1300 545)"/><ellipse cx="1330" cy="700" rx="70" ry="26" fill="url(#fShade)" transform="rotate(-14 1330 700)"/><path d="M1287.5,481.6C1281.7,481.0 1281.6,485.9 1280.7,488.3C1279.9,490.7 1282.8,494.2 1282.4,495.9C1282.0,497.6 1279.1,496.9 1278.2,498.4C1277.4,500.0 1277.4,502.9 1277.4,505.2C1277.4,507.4 1278.4,509.5 1278.2,511.9C1278.1,514.3 1274.3,517.8 1276.5,519.5C1278.8,521.2 1285.2,518.5 1291.7,522.0C1298.1,525.5 1307.1,536.0 1315.3,540.5C1323.4,545.0 1334.6,547.8 1340.5,548.9C1346.4,550.1 1347.8,550.1 1350.6,547.3C1353.4,544.5 1356.0,536.9 1357.4,532.1C1358.8,527.3 1358.8,523.0 1359.1,518.6C1359.3,514.3 1362.1,508.8 1359.1,506.0C1356.0,503.2 1347.8,504.2 1340.5,501.8C1333.2,499.4 1324.1,495.1 1315.3,491.7C1306.4,488.3 1293.2,482.1 1287.5,481.6Z" fill="url(#fNeck)" stroke="none"/><path d="M1282.4,495.9C1285.1,498.0 1292.4,505.4 1298.4,508.5C1304.5,511.6 1311.6,513.4 1318.6,514.4C1325.6,515.4 1334.1,515.4 1340.5,514.4C1347.0,513.4 1354.6,509.5 1357.4,508.5" fill="none" stroke="#0c0c0c" stroke-width="4" stroke-linecap="round" /><path d="M1280.7,489.2C1283.4,491.3 1290.4,498.4 1296.7,501.8C1303.1,505.2 1311.6,508.1 1318.6,509.4C1325.6,510.6 1332.7,510.2 1338.8,509.4C1345.0,508.5 1352.9,505.2 1355.7,504.3" fill="none" stroke="#0c0c0c" stroke-width="2.2" stroke-linecap="round" /><path d="M1291.7,505.2C1295.6,509.6 1307.1,525.1 1315.3,532.1C1323.4,539.1 1334.9,544.9 1340.5,547.3C1346.1,549.6 1346.4,548.9 1348.9,546.4C1351.5,543.9 1354.0,538.1 1355.7,532.1C1357.4,526.1 1358.5,513.9 1359.1,510.2" fill="none" stroke="#0c0c0c" stroke-width="2.2" stroke-linecap="round" /><path d="M1340.5,501.8C1340.8,505.4 1341.4,516.1 1342.2,523.7C1343.1,531.3 1345.0,543.3 1345.6,547.3" fill="none" stroke="#0c0c0c" stroke-width="2.2" stroke-linecap="round" /><path d="M1242.0,539.7C1248.6,541.8 1264.3,546.8 1281.6,552.3C1298.8,557.8 1332.9,567.0 1345.6,572.5C1358.2,578.0 1354.0,579.8 1357.4,585.3C1360.7,590.8 1364.4,602.1 1365.8,605.5" fill="none" stroke="#0c0c0c" stroke-width="2.2" stroke-linecap="round" /><path d="M1251.3,538.0C1257.7,539.8 1273.7,543.8 1290.0,548.9C1306.3,554.1 1339.1,565.8 1348.9,569.2" fill="none" stroke="#0c0c0c" stroke-width="2.2" stroke-linecap="round" /><path d="M1369.2,524.5C1371.4,525.2 1381.2,525.8 1382.6,528.7C1384.0,531.7 1382.1,535.5 1377.6,542.2C1373.1,548.9 1360.5,564.1 1355.7,569.2C1350.9,574.2 1350.1,572.0 1348.9,572.5" fill="none" stroke="#0c0c0c" stroke-width="2.2" stroke-linecap="round" /><path d="M1387.7,532.1C1386.8,534.9 1384.9,543.3 1382.6,548.9C1380.4,554.6 1375.9,561.1 1374.2,565.8C1372.5,570.4 1373.4,570.5 1372.5,576.8C1371.7,583.2 1369.7,599.3 1369.2,603.8" fill="none" stroke="#0c0c0c" stroke-width="2.2" stroke-linecap="round" /><path d="M1345.6,547.3C1345.9,551.5 1345.9,568.2 1347.3,572.5C1348.7,576.9 1351.2,568.3 1354.0,573.5C1356.8,578.7 1362.4,598.7 1364.1,603.8" fill="none" stroke="#0c0c0c" stroke-width="2.2" stroke-linecap="round" /><path d="M1365.8,605.5C1367.2,614.7 1372.5,643.4 1374.2,661.1C1375.9,678.7 1375.9,685.1 1375.9,711.6C1375.9,738.1 1374.8,796.9 1374.2,820.0C1373.6,843.2 1372.8,845.4 1372.5,850.5" fill="none" stroke="#0c0c0c" stroke-width="2.2" stroke-linecap="round" /><path d="M1247.9,654.3C1249.6,661.1 1255.5,682.4 1258.0,694.7C1260.5,707.1 1262.2,707.5 1263.1,728.4C1263.9,749.3 1262.9,802.2 1263.1,820.0C1263.2,837.9 1263.8,832.8 1263.9,835.4" fill="none" stroke="#0c0c0c" stroke-width="2.2" stroke-linecap="round" /><path d="M1224.3,624.0C1231.1,629.1 1255.2,642.5 1264.7,654.3C1274.3,666.1 1276.0,682.4 1281.6,694.7C1287.2,707.1 1293.9,715.8 1298.4,728.4C1302.9,741.1 1306.0,755.3 1308.5,770.5C1311.1,785.8 1312.3,807.0 1313.6,820.0C1314.8,833.1 1315.7,844.0 1316.1,848.8" fill="none" stroke="#0c0c0c" stroke-width="2.2" stroke-linecap="round" /><path d="M1223.5,635.8C1227.0,638.9 1239.3,647.3 1244.5,654.3C1249.7,661.3 1251.8,668.4 1254.6,677.9C1257.4,687.4 1260.2,706.0 1261.4,711.6" fill="none" stroke="#0c0c0c" stroke-width="2.2" stroke-linecap="round" /><path d="M1414.6,770.5C1414.4,778.8 1412.9,811.8 1412.9,820.0C1412.9,828.3 1414.4,820.2 1414.6,820.2" fill="none" stroke="#0c0c0c" stroke-width="2.2" stroke-linecap="round" /><path d="M1166.2,593.7C1168.5,586.7 1171.7,576.0 1175.5,571.8C1179.3,567.6 1183.1,567.9 1188.9,568.4C1194.8,569.0 1204.7,570.9 1210.8,575.2C1217.0,579.4 1223.8,586.7 1226.0,593.7C1228.2,600.7 1225.0,608.3 1224.3,617.3C1223.6,626.2 1223.5,634.7 1221.8,647.6C1220.1,660.5 1216.3,675.6 1214.2,694.7C1212.1,713.8 1210.7,749.5 1209.2,762.1C1207.6,774.7 1209.7,769.4 1204.9,770.5C1200.2,771.6 1189.8,771.4 1180.5,768.8C1171.3,766.3 1153.9,762.1 1149.4,755.4C1144.9,748.6 1152.0,738.5 1153.6,728.4C1155.1,718.3 1157.5,708.8 1158.6,694.7C1159.8,680.7 1159.8,657.7 1160.3,644.2C1160.9,630.7 1161.0,622.3 1162.0,613.9C1163.0,605.5 1164.0,600.7 1166.2,593.7Z" fill="url(#fArmL)" stroke="#0c0c0c" stroke-width="0" stroke-linejoin="round" /><path d="M1221.8,624.0C1221.6,627.9 1223.9,634.4 1220.9,647.6C1218.0,660.8 1210.0,684.1 1204.1,703.2C1198.2,722.2 1188.7,752.3 1185.6,762.1" fill="none" stroke="#0c0c0c" stroke-width="2.2" stroke-linecap="round" /><path d="M1231.1,661.1C1228.8,669.5 1223.2,693.9 1217.6,711.6C1212.0,729.3 1200.7,757.9 1197.4,767.2" fill="none" stroke="#0c0c0c" stroke-width="2.2" stroke-linecap="round" /><path d="M1165.4,593.7C1167.5,587.8 1170.4,578.7 1173.8,575.2C1177.2,571.6 1181.9,570.9 1185.6,572.6C1189.2,574.3 1193.7,580.1 1195.7,585.3C1197.6,590.5 1198.8,597.6 1197.4,603.8C1196.0,610.0 1191.2,617.8 1187.3,622.3C1183.3,626.8 1177.7,630.2 1173.8,630.7C1169.9,631.3 1165.8,629.1 1163.7,625.7C1161.6,622.3 1160.9,615.9 1161.2,610.5C1161.4,605.2 1163.3,599.6 1165.4,593.7Z" fill="url(#fBall)" stroke="#0c0c0c" stroke-width="3.2"/><path d="M1175.5,570.1C1177.7,569.8 1183.1,567.3 1188.9,568.4C1194.8,569.5 1204.7,572.4 1210.8,576.8C1217.0,581.3 1222.6,589.8 1226.0,595.4C1229.4,601.0 1231.3,606.6 1231.1,610.5C1230.8,614.5 1225.4,617.5 1224.3,618.9" fill="none" stroke="#0c0c0c" stroke-width="3.2" stroke-linecap="round" /><path d="M1198.2,564.1C1200.3,563.3 1207.1,558.8 1210.8,559.1C1214.6,559.3 1218.1,562.7 1220.9,565.8C1223.8,568.9 1226.0,575.7 1227.7,577.6C1229.4,579.4 1230.8,572.8 1231.1,576.8C1231.3,580.9 1230.8,594.2 1229.4,602.1C1228.0,610.0 1223.8,620.4 1222.6,624.0" fill="none" stroke="#0c0c0c" stroke-width="4" stroke-linecap="round" /><path d="M1146.8,752.0C1153.4,750.2 1170.6,762.0 1180.5,764.6C1190.5,767.3 1203.0,762.8 1206.6,768.0C1210.3,773.2 1208.2,789.6 1202.4,795.8C1196.7,802.0 1181.5,805.2 1172.1,805.1C1162.7,804.9 1151.2,799.9 1146.0,794.9C1140.8,790.0 1140.8,782.7 1140.9,775.6C1141.1,768.4 1140.2,753.8 1146.8,752.0Z" fill="url(#fBall)" stroke="none"/><path d="M1185.6,768.0C1187.5,768.3 1194.1,769.3 1197.4,769.7C1200.6,770.1 1203.7,770.4 1204.9,770.5" fill="none" stroke="#0c0c0c" stroke-width="3.5" stroke-linecap="round" /><path d="M1148.5,758.7C1149.6,758.5 1153.0,756.2 1155.3,757.1C1157.5,757.9 1160.9,762.7 1162.0,763.8" fill="none" stroke="#0c0c0c" stroke-width="4" stroke-linecap="round" /><path d="M1142.0,778.0C1143.3,777.5 1143.7,788.2 1146.0,792.0C1148.3,795.8 1152.3,798.7 1156.0,801.0C1159.7,803.3 1163.7,805.2 1168.0,806.0C1172.3,806.8 1177.5,806.5 1182.0,806.0C1186.5,805.5 1191.8,805.0 1195.0,803.0C1198.2,801.0 1200.8,790.3 1201.0,794.0C1201.2,797.7 1197.8,814.5 1196.0,825.0C1194.2,835.5 1192.2,847.0 1190.0,857.0C1187.8,867.0 1185.2,876.3 1183.0,885.0C1180.8,893.7 1178.7,899.8 1177.0,909.0C1175.3,918.2 1173.8,930.0 1173.0,940.0C1172.2,950.0 1174.8,963.5 1172.0,969.0C1169.2,974.5 1161.5,972.5 1156.0,973.0C1150.5,973.5 1142.3,978.3 1139.0,972.0C1135.7,965.7 1137.0,947.8 1136.0,935.0C1135.0,922.2 1133.5,908.0 1133.0,895.0C1132.5,882.0 1132.7,868.7 1133.0,857.0C1133.3,845.3 1134.2,835.3 1135.0,825.0C1135.8,814.7 1136.8,802.8 1138.0,795.0C1139.2,787.2 1140.7,778.5 1142.0,778.0Z" fill="url(#fTanL)" stroke="#0c0c0c" stroke-width="0" stroke-linejoin="round" /><path d="M1142.0,778.0C1142.7,780.3 1143.7,788.2 1146.0,792.0C1148.3,795.8 1152.3,798.7 1156.0,801.0C1159.7,803.3 1163.7,805.2 1168.0,806.0C1172.3,806.8 1177.5,806.5 1182.0,806.0C1186.5,805.5 1191.8,805.0 1195.0,803.0C1198.2,801.0 1200.0,795.5 1201.0,794.0" fill="none" stroke="#0c0c0c" stroke-width="4.2" stroke-linecap="round" /><path d="M1201.0,794.0C1198.8,793.5 1192.8,792.0 1188.0,791.0C1183.2,790.0 1176.7,789.3 1172.0,788.0C1167.3,786.7 1162.0,783.8 1160.0,783.0" fill="none" stroke="#0c0c0c" stroke-width="2.6" stroke-linecap="round" /><path d="M1180.0,806.0C1179.7,811.7 1179.3,826.0 1178.0,840.0C1176.7,854.0 1173.7,875.0 1172.0,890.0C1170.3,905.0 1169.0,917.0 1168.0,930.0C1167.0,943.0 1166.3,961.7 1166.0,968.0" fill="none" stroke="#0c0c0c" stroke-width="2.3" stroke-linecap="round" /><path d="M1201.0,796.0C1200.2,800.8 1197.8,814.8 1196.0,825.0C1194.2,835.2 1192.2,847.0 1190.0,857.0C1187.8,867.0 1185.2,876.3 1183.0,885.0C1180.8,893.7 1178.7,899.8 1177.0,909.0C1175.3,918.2 1173.8,930.0 1173.0,940.0C1172.2,950.0 1172.2,964.2 1172.0,969.0" fill="none" stroke="#6f6647" stroke-width="1.3" stroke-linecap="round" /><path d="M1138.0,795.0C1137.5,800.0 1135.8,814.7 1135.0,825.0C1134.2,835.3 1133.3,845.3 1133.0,857.0C1132.7,868.7 1132.5,882.0 1133.0,895.0C1133.5,908.0 1135.0,922.2 1136.0,935.0C1137.0,947.8 1138.5,965.8 1139.0,972.0" fill="none" stroke="#8f8358" stroke-width="1.0" stroke-linecap="round" /><path d="M1136.7,973.5C1139.8,973.8 1149.4,975.4 1155.3,975.2C1161.2,974.9 1169.3,972.4 1172.1,971.8" fill="none" stroke="#0c0c0c" stroke-width="3" stroke-linecap="round" /><path d="M1137.6,974.3C1132.1,976.3 1137.7,977.8 1138.4,985.3C1139.1,992.7 1140.4,1009.1 1141.8,1018.9C1143.2,1028.8 1144.6,1037.4 1146.8,1044.2C1149.1,1051.1 1153.6,1057.4 1155.3,1060.0C1156.9,1062.7 1153.3,1056.8 1156.9,1060.2C1160.6,1063.6 1169.9,1076.4 1177.2,1080.4C1184.5,1084.5 1196.2,1085.2 1200.7,1084.6C1205.2,1084.1 1204.7,1080.3 1204.1,1077.1C1203.5,1073.8 1200.5,1071.4 1197.4,1065.3C1194.3,1059.1 1188.1,1044.9 1185.6,1040.0C1183.1,1035.1 1183.6,1040.7 1182.2,1035.8C1180.8,1030.9 1178.8,1020.1 1177.2,1010.5C1175.5,1001.0 1173.1,984.7 1172.1,978.5C1171.1,972.4 1177.0,974.2 1171.3,973.5C1165.5,972.8 1143.1,972.4 1137.6,974.3Z" fill="url(#fHand)" stroke="#0c0c0c" stroke-width="2.2" stroke-linejoin="round" /><path d="M1172.1,980.2C1174.9,978.8 1187.0,994.5 1194.0,1002.1C1201.0,1009.7 1211.1,1020.9 1214.2,1025.7C1217.3,1030.5 1215.3,1031.3 1212.5,1030.7C1209.7,1030.2 1203.3,1025.7 1197.4,1022.3C1191.5,1018.9 1181.4,1017.5 1177.2,1010.5C1172.9,1003.5 1169.3,981.6 1172.1,980.2Z" fill="url(#fHand)" stroke="#0c0c0c" stroke-width="2.2" stroke-linejoin="round" /><path d="M1143.5,1027.4C1146.3,1028.5 1154.4,1034.4 1160.3,1034.1C1166.2,1033.8 1175.8,1027.1 1178.8,1025.7" fill="none" stroke="#0c0c0c" stroke-width="2.2" stroke-linecap="round" /><path d="M1148.5,1047.6C1151.1,1048.1 1158.1,1052.1 1163.7,1050.9C1169.3,1049.8 1179.1,1042.5 1182.2,1040.8" fill="none" stroke="#0c0c0c" stroke-width="2" stroke-linecap="round" /><path d="M1185.6,1013.9C1186.7,1011.9 1191.2,1004.1 1192.3,1002.1" fill="none" stroke="#0c0c0c" stroke-width="2" stroke-linecap="round" /><path d="M1200.7,1024.0C1201.6,1022.3 1204.9,1015.6 1205.8,1013.9" fill="none" stroke="#0c0c0c" stroke-width="2" stroke-linecap="round" /><path d="M1163.7,1065.3C1165.4,1062.7 1170.1,1053.8 1173.8,1050.1C1177.4,1046.5 1183.6,1044.5 1185.6,1043.4" fill="none" stroke="#0c0c0c" stroke-width="2" stroke-linecap="round" /><path d="M1178.8,1080.4C1180.0,1077.1 1182.5,1062.7 1185.6,1060.2C1188.7,1057.7 1195.4,1064.4 1197.4,1065.3" fill="none" stroke="#0c0c0c" stroke-width="2" stroke-linecap="round" /><path d="M1168.7,1046.7C1171.5,1051.2 1182.8,1069.2 1185.6,1073.7" fill="none" stroke="#0c0c0c" stroke-width="2" stroke-linecap="round" /><path d="M1426.4,540.5C1426.1,537.0 1428.7,539.1 1431.5,538.8C1434.3,538.6 1440.2,537.4 1443.3,538.8C1446.4,540.2 1448.0,543.3 1450.0,547.3C1452.0,551.2 1453.6,555.3 1455.1,562.4C1456.5,569.6 1457.3,584.8 1458.4,590.0C1459.5,595.3 1461.5,581.8 1461.8,593.7C1462.1,605.5 1460.9,641.4 1460.1,661.1C1459.3,680.7 1457.6,699.2 1456.7,711.6C1455.9,723.9 1456.2,730.7 1455.1,735.2C1453.9,739.6 1452.5,737.4 1450.0,738.5C1447.5,739.6 1443.8,742.2 1439.9,741.9C1436.0,741.6 1429.8,739.1 1426.4,736.8C1423.1,734.6 1419.7,738.2 1419.7,728.4C1419.7,718.6 1424.5,691.9 1426.4,677.9C1428.4,663.9 1429.5,655.4 1431.5,644.2C1433.4,633.0 1437.9,624.6 1438.2,610.5C1438.5,596.5 1435.1,571.7 1433.2,560.0C1431.2,548.3 1426.7,544.1 1426.4,540.5Z" fill="url(#fArmR)" stroke="#0c0c0c" stroke-width="2.2" stroke-linejoin="round" /><path d="M1426.4,540.5C1427.5,544.7 1431.2,557.5 1433.2,565.8C1435.1,574.0 1437.1,582.6 1438.2,590.0C1439.3,597.5 1438.5,598.7 1439.9,610.5C1441.3,622.4 1444.9,647.0 1446.6,661.1C1448.3,675.1 1449.4,682.4 1450.0,694.7C1450.6,707.1 1450.0,728.4 1450.0,735.2" fill="none" stroke="#0c0c0c" stroke-width="2.2" stroke-linecap="round" /><path d="M1443.3,538.8C1444.4,543.3 1448.3,557.3 1450.0,565.8C1451.7,574.3 1452.0,574.2 1453.4,590.0C1454.8,605.9 1457.6,649.2 1458.4,661.1" fill="none" stroke="#0c0c0c" stroke-width="2.2" stroke-linecap="round" /><path d="M1431.5,538.8C1433.2,539.4 1438.8,540.0 1441.6,542.2C1444.4,544.5 1447.2,550.6 1448.3,552.3" fill="none" stroke="#ddd" stroke-width="1.6" stroke-linecap="round" /><path d="M1438.2,610.5C1439.6,611.4 1444.7,612.8 1446.6,615.6C1448.6,618.4 1449.4,625.4 1450.0,627.4" fill="none" stroke="#0c0c0c" stroke-width="2.5" stroke-linecap="round" /><path d="M1426.4,736.8C1428.7,737.7 1435.1,742.0 1439.9,741.9C1444.7,741.8 1451.5,737.5 1455.1,736.0C1458.6,734.5 1460.0,733.2 1460.9,732.6" fill="none" stroke="#0c0c0c" stroke-width="3" stroke-linecap="round" /><path d="M1422.2,735.2C1425.2,730.4 1433.4,741.3 1439.9,741.1C1446.4,740.8 1456.7,731.1 1460.9,733.5C1465.2,735.9 1465.7,748.8 1465.2,755.4C1464.6,762.0 1461.5,769.1 1457.6,773.1C1453.6,777.0 1447.5,779.5 1441.6,778.9C1435.7,778.4 1425.4,777.0 1422.2,769.7C1419.0,762.4 1419.3,739.9 1422.2,735.2Z" fill="url(#fBall)" stroke="none"/><path d="M1421.0,768.0C1422.7,766.3 1426.8,773.3 1430.0,775.0C1433.2,776.7 1436.3,778.2 1440.0,778.0C1443.7,777.8 1448.5,776.2 1452.0,774.0C1455.5,771.8 1458.8,768.2 1461.0,765.0C1463.2,761.8 1464.2,750.8 1465.0,755.0C1465.8,759.2 1465.7,777.3 1466.0,790.0C1466.3,802.7 1466.0,817.7 1467.0,831.0C1468.0,844.3 1470.2,857.0 1472.0,870.0C1473.8,883.0 1476.2,899.7 1478.0,909.0C1479.8,918.3 1485.2,922.2 1483.0,926.0C1480.8,929.8 1471.0,931.7 1465.0,932.0C1459.0,932.3 1451.2,934.2 1447.0,928.0C1442.8,921.8 1442.3,904.7 1440.0,895.0C1437.7,885.3 1435.5,879.2 1433.0,870.0C1430.5,860.8 1427.2,850.0 1425.0,840.0C1422.8,830.0 1420.8,819.2 1420.0,810.0C1419.2,800.8 1419.8,792.0 1420.0,785.0C1420.2,778.0 1419.3,769.7 1421.0,768.0Z" fill="url(#fTanR)" stroke="#0c0c0c" stroke-width="0" stroke-linejoin="round" /><path d="M1421.0,768.0C1422.5,769.2 1426.8,773.3 1430.0,775.0C1433.2,776.7 1436.3,778.2 1440.0,778.0C1443.7,777.8 1448.5,776.2 1452.0,774.0C1455.5,771.8 1458.8,768.2 1461.0,765.0C1463.2,761.8 1464.3,756.7 1465.0,755.0" fill="none" stroke="#0c0c0c" stroke-width="4.2" stroke-linecap="round" /><path d="M1465.0,755.0C1463.7,754.8 1459.8,753.5 1457.0,754.0C1454.2,754.5 1449.5,757.3 1448.0,758.0" fill="none" stroke="#0c0c0c" stroke-width="2.6" stroke-linecap="round" /><path d="M1457.0,774.0C1457.5,780.8 1458.7,801.2 1460.0,815.0C1461.3,828.8 1463.3,844.5 1465.0,857.0C1466.7,869.5 1468.3,879.5 1470.0,890.0C1471.7,900.5 1474.2,915.0 1475.0,920.0" fill="none" stroke="#0c0c0c" stroke-width="2.3" stroke-linecap="round" /><path d="M1420.0,785.0C1420.0,789.2 1419.2,800.8 1420.0,810.0C1420.8,819.2 1422.8,830.0 1425.0,840.0C1427.2,850.0 1430.5,860.8 1433.0,870.0C1435.5,879.2 1437.7,885.3 1440.0,895.0C1442.3,904.7 1445.8,922.5 1447.0,928.0" fill="none" stroke="#6f6647" stroke-width="1.3" stroke-linecap="round" /><path d="M1448.3,939.8C1446.1,945.7 1452.8,958.0 1453.4,968.4C1453.9,978.8 1451.4,988.1 1451.7,1002.1C1452.0,1016.1 1452.5,1044.2 1455.1,1052.6C1457.6,1061.1 1462.1,1055.4 1466.8,1052.6C1471.6,1049.8 1479.5,1041.4 1483.7,1035.8C1487.9,1030.2 1491.0,1027.4 1492.1,1018.9C1493.2,1010.5 1491.8,999.3 1490.4,985.3C1489.0,971.2 1487.6,943.4 1483.7,934.7C1479.8,926.0 1472.7,932.2 1466.8,933.1C1460.9,933.9 1450.6,933.9 1448.3,939.8Z" fill="url(#fHand)" stroke="#0c0c0c" stroke-width="2.4" stroke-linejoin="round" /><path d="M1455.1,951.6C1458.1,951.0 1468.8,946.5 1473.6,948.2C1478.4,949.9 1482.0,959.4 1483.7,961.7" fill="none" stroke="#0c0c0c" stroke-width="2" stroke-linecap="round" /><path d="M1458.4,970.1C1461.5,969.8 1471.9,965.9 1476.9,968.4C1482.0,970.9 1486.8,982.5 1488.7,985.3" fill="none" stroke="#0c0c0c" stroke-width="2" stroke-linecap="round" /><path d="M1453.4,981.9C1456.2,983.0 1464.0,986.9 1470.2,988.6C1476.4,990.3 1487.1,991.4 1490.4,992.0" fill="none" stroke="#0c0c0c" stroke-width="2" stroke-linecap="round" /><path d="M1455.1,998.7C1458.1,1000.1 1467.4,1005.5 1473.6,1007.2C1479.8,1008.8 1489.0,1008.6 1492.1,1008.8" fill="none" stroke="#0c0c0c" stroke-width="2" stroke-linecap="round" /><path d="M1453.4,1018.9C1456.5,1019.8 1466.0,1023.2 1471.9,1024.0C1477.8,1024.8 1485.9,1024.0 1488.7,1024.0" fill="none" stroke="#0c0c0c" stroke-width="2" stroke-linecap="round" /><path d="M1455.1,1035.8C1457.3,1036.4 1463.8,1039.4 1468.5,1039.2C1473.3,1038.9 1481.2,1034.9 1483.7,1034.1" fill="none" stroke="#0c0c0c" stroke-width="2" stroke-linecap="round" /><path d="M1473.6,948.2C1471.1,957.2 1461.5,985.3 1458.4,1002.1C1455.3,1018.9 1455.6,1041.4 1455.1,1049.3" fill="none" stroke="#0c0c0c" stroke-width="2" stroke-linecap="round" /><path d="M1483.7,961.7C1481.4,969.8 1473.3,995.6 1470.2,1010.5C1467.1,1025.4 1466.0,1044.2 1465.2,1050.9" fill="none" stroke="#0c0c0c" stroke-width="2" stroke-linecap="round" /><path d="M1460.1,946.5C1462.9,950.2 1474.1,964.8 1476.9,968.4" fill="none" stroke="#0c0c0c" stroke-width="2" stroke-linecap="round" /><path d="M1446.6,917.9C1446.9,921.5 1445.2,936.0 1448.3,939.8C1451.4,943.6 1459.3,941.5 1465.2,940.6C1471.1,939.8 1480.6,935.7 1483.7,934.7" fill="none" stroke="#0c0c0c" stroke-width="3" stroke-linecap="round" /><path d="M1276.5,355.3C1281.0,352.3 1289.7,348.1 1296.7,346.0C1303.8,343.9 1310.2,342.9 1318.6,342.6C1327.1,342.4 1340.0,343.1 1347.3,344.3C1354.6,345.6 1357.9,347.3 1362.4,350.2C1366.9,353.2 1370.6,357.2 1374.2,362.0C1377.9,366.8 1381.5,372.9 1384.3,378.8C1387.1,384.7 1389.2,391.5 1391.1,397.4C1392.9,403.3 1394.3,408.0 1395.3,414.2C1396.2,420.4 1396.8,428.8 1396.9,434.4C1397.1,440.0 1396.8,443.1 1396.1,447.9C1395.4,452.7 1393.7,458.6 1392.7,463.1C1391.8,467.5 1390.9,470.4 1390.2,474.8C1389.5,479.3 1389.8,486.1 1388.5,490.0C1387.3,493.9 1385.9,496.0 1382.6,498.4C1379.4,500.8 1373.9,503.2 1369.2,504.3C1364.4,505.4 1358.8,505.6 1354.0,505.2C1349.2,504.7 1345.6,503.5 1340.5,501.8C1335.5,500.1 1329.6,497.6 1323.7,495.1C1317.8,492.5 1311.1,489.4 1305.2,486.6C1299.3,483.8 1292.2,481.6 1288.3,478.2C1284.4,474.8 1283.8,470.9 1281.6,466.4C1279.3,461.9 1277.4,456.0 1274.8,451.3C1272.3,446.5 1268.7,442.3 1266.4,437.8C1264.2,433.3 1262.6,429.1 1261.4,424.3C1260.1,419.5 1259.3,414.8 1258.8,409.2C1258.4,403.5 1258.1,396.2 1258.8,390.6C1259.5,385.0 1261.2,380.0 1263.1,375.5C1264.9,371.0 1267.5,367.1 1269.8,363.7C1272.0,360.3 1272.0,358.2 1276.5,355.3Z" fill="url(#fHead)" stroke="#0c0c0c" stroke-width="2.4" stroke-linejoin="round" /><clipPath id="cHead"><path d="M1276.5,355.3C1281.0,352.3 1289.7,348.1 1296.7,346.0C1303.8,343.9 1310.2,342.9 1318.6,342.6C1327.1,342.4 1340.0,343.1 1347.3,344.3C1354.6,345.6 1357.9,347.3 1362.4,350.2C1366.9,353.2 1370.6,357.2 1374.2,362.0C1377.9,366.8 1381.5,372.9 1384.3,378.8C1387.1,384.7 1389.2,391.5 1391.1,397.4C1392.9,403.3 1394.3,408.0 1395.3,414.2C1396.2,420.4 1396.8,428.8 1396.9,434.4C1397.1,440.0 1396.8,443.1 1396.1,447.9C1395.4,452.7 1393.7,458.6 1392.7,463.1C1391.8,467.5 1390.9,470.4 1390.2,474.8C1389.5,479.3 1389.8,486.1 1388.5,490.0C1387.3,493.9 1385.9,496.0 1382.6,498.4C1379.4,500.8 1373.9,503.2 1369.2,504.3C1364.4,505.4 1358.8,505.6 1354.0,505.2C1349.2,504.7 1345.6,503.5 1340.5,501.8C1335.5,500.1 1329.6,497.6 1323.7,495.1C1317.8,492.5 1311.1,489.4 1305.2,486.6C1299.3,483.8 1292.2,481.6 1288.3,478.2C1284.4,474.8 1283.8,470.9 1281.6,466.4C1279.3,461.9 1277.4,456.0 1274.8,451.3C1272.3,446.5 1268.7,442.3 1266.4,437.8C1264.2,433.3 1262.6,429.1 1261.4,424.3C1260.1,419.5 1259.3,414.8 1258.8,409.2C1258.4,403.5 1258.1,396.2 1258.8,390.6C1259.5,385.0 1261.2,380.0 1263.1,375.5C1264.9,371.0 1267.5,367.1 1269.8,363.7C1272.0,360.3 1272.0,358.2 1276.5,355.3Z"/></clipPath><g clip-path="url(#cHead)"><ellipse cx="1375" cy="420" rx="22" ry="55" fill="url(#fShade)" transform="rotate(-18 1375 420)"/><ellipse cx="1372" cy="372" rx="20" ry="32" fill="url(#fHi2)" transform="rotate(-25 1372 372)"/><ellipse cx="1345" cy="480" rx="40" ry="30" fill="url(#fShade)" opacity="0.6"/><ellipse cx="1329" cy="401" rx="3.5" ry="16" fill="#fff" opacity="0.8" transform="rotate(-6 1329 401)"/></g><path d="M1279.9,352.7C1281.9,352.7 1287.5,351.8 1291.7,352.7C1295.9,353.7 1300.7,356.0 1305.2,358.6C1309.6,361.3 1314.7,364.8 1318.6,368.7C1322.6,372.7 1325.9,377.4 1328.7,382.2C1331.5,387.0 1333.5,392.0 1335.5,397.4C1337.4,402.7 1339.1,408.0 1340.5,414.2C1341.9,420.4 1343.1,427.1 1343.9,434.4C1344.7,441.7 1345.0,450.1 1345.6,458.0C1346.1,465.9 1347.0,474.3 1347.3,481.6C1347.5,488.9 1347.3,498.4 1347.3,501.8" fill="none" stroke="#0c0c0c" stroke-width="2.2" stroke-linecap="round" /><path d="M1269.8,368.7C1271.8,368.9 1277.4,368.2 1281.6,369.6C1285.8,371.0 1290.8,373.9 1295.1,377.2C1299.3,380.4 1303.5,383.9 1306.8,388.9C1310.2,394.0 1313.0,401.0 1315.3,407.5C1317.5,413.9 1319.1,420.9 1320.3,427.7C1321.6,434.4 1322.0,440.3 1322.8,447.9C1323.7,455.5 1324.8,465.3 1325.4,473.2C1325.9,481.0 1326.1,491.4 1326.2,495.1" fill="none" stroke="#0c0c0c" stroke-width="2.2" stroke-linecap="round" /><path d="M1347.3,344.3C1349.8,345.4 1357.9,347.8 1362.4,351.1C1366.9,354.3 1370.6,357.9 1374.2,363.7C1377.9,369.4 1381.5,377.7 1384.3,385.6C1387.1,393.4 1389.8,401.9 1391.1,410.8C1392.3,419.8 1392.5,429.1 1391.9,439.5C1391.3,449.9 1388.7,463.6 1387.7,473.2C1386.7,482.7 1386.3,492.8 1386.0,496.7" fill="none" stroke="#0c0c0c" stroke-width="2.2" stroke-linecap="round" /><ellipse cx="1274.8" cy="407.5" rx="14.3" ry="26.9" fill="none" stroke="#0c0c0c" stroke-width="2.2" transform="rotate(-4 1274.8 407.5)"/><ellipse cx="1278.2" cy="408.3" rx="10.1" ry="21.6" fill="#7f7f7b" stroke="#0c0c0c" stroke-width="2.2" transform="rotate(-4 1278.2 408.3)"/><path d="M1269.8,368.7C1268.7,370.7 1264.6,375.2 1263.1,380.5C1261.5,385.9 1260.5,393.4 1260.5,400.7C1260.5,408.0 1261.5,418.1 1263.1,424.3C1264.6,430.5 1268.7,435.5 1269.8,437.8" fill="none" stroke="#0c0c0c" stroke-width="2.0" stroke-linecap="round" /><path d="M1203,601 L1203,465" stroke="#e6b4b4" stroke-width="2.4" opacity="0.75"/><path d="M1202,463 L1218,475 L1202,486 Z" fill="#f09090" opacity="0.8"/><path d="M1203,601 L1275,596" stroke="#9aeaa6" stroke-width="2.6" opacity="0.6"/><path d="M1263,591 L1287,589 L1277,616 Z" fill="#8ceb9c" opacity="0.75"/><path d="M1170,566 L1176,590 L1163,588 Z" fill="#7cc8d0" opacity="0.7"/><ellipse cx="1203" cy="601" rx="6.5" ry="10" fill="#7ad88c" stroke="#ee9a9a" stroke-width="2.6" opacity="0.85"/><ellipse cx="1203" cy="601" rx="2" ry="3" fill="#3a8a5a" opacity="0.8"/><path d="M1419,574 L1419,440" stroke="#e6b4b4" stroke-width="2.4" opacity="0.75"/><path d="M1418,438 L1434,450 L1418,461 Z" fill="#f09090" opacity="0.8"/><path d="M1419,574 L1492,565" stroke="#9aeaa6" stroke-width="2.6" opacity="0.6"/><path d="M1480,560 L1504,558 L1494,585 Z" fill="#8ceb9c" opacity="0.75"/><path d="M1388,541 L1394,565 L1381,563 Z" fill="#7cc8d0" opacity="0.7"/><ellipse cx="1419" cy="574" rx="6.5" ry="10" fill="#7ad88c" stroke="#ee9a9a" stroke-width="2.6" opacity="0.85"/><ellipse cx="1419" cy="574" rx="2" ry="3" fill="#3a8a5a" opacity="0.8"/><ellipse cx="1329" cy="431" rx="6.5" ry="10" fill="#7ad88c" stroke="#ee9a9a" stroke-width="2.6" opacity="0.85"/><ellipse cx="1329" cy="431" rx="2" ry="3" fill="#3a8a5a" opacity="0.8"/><path d="M1340,430 L1372,427" stroke="#9aeaa6" stroke-width="2.4" stroke-dasharray="6 6" opacity="0.7"/><path d="M1385,420 L1412,423 L1388,428 Z" fill="#8ceb9c" opacity="0.8"/><path d="M1340,440 L1390,462" stroke="#fbe0e0" stroke-width="2.5" stroke-dasharray="3 2"/><path d="M1390,462 L1401,470 L1392,492 Z" fill="#f08c8c" opacity="0.85"/><path d="M1325,378 L1340,384 L1331,396 Z" fill="#7cc8d0" opacity="0.8"/><path d="M1174,777 L1174,655" stroke="#e6b4b4" stroke-width="2.4" opacity="0.75"/><path d="M1173,653 L1189,665 L1173,676 Z" fill="#f09090" opacity="0.8"/><path d="M1174,777 L1247,772" stroke="#9aeaa6" stroke-width="2.6" opacity="0.6"/><path d="M1235,767 L1259,765 L1249,792 Z" fill="#8ceb9c" opacity="0.75"/><path d="M1143,741 L1149,765 L1136,763 Z" fill="#7cc8d0" opacity="0.7"/><ellipse cx="1174" cy="777" rx="6.5" ry="10" fill="#7ad88c" stroke="#ee9a9a" stroke-width="2.6" opacity="0.85"/><ellipse cx="1174" cy="777" rx="2" ry="3" fill="#3a8a5a" opacity="0.8"/><path d="M1431,746 L1505,738" stroke="#9aeaa6" stroke-width="2.6" opacity="0.6"/><path d="M1493,733 L1517,731 L1507,758 Z" fill="#8ceb9c" opacity="0.75"/><path d="M1400,711 L1406,735 L1393,733 Z" fill="#7cc8d0" opacity="0.7"/><ellipse cx="1431" cy="746" rx="6.5" ry="10" fill="#7ad88c" stroke="#ee9a9a" stroke-width="2.6" opacity="0.85"/><ellipse cx="1431" cy="746" rx="2" ry="3" fill="#3a8a5a" opacity="0.8"/><path d="M1329,842 L1329,700" stroke="#e6b4b4" stroke-width="2.4" opacity="0.75"/><path d="M1328,698 L1344,710 L1328,721 Z" fill="#f09090" opacity="0.8"/><path d="M1329,842 L1402,836" stroke="#9aeaa6" stroke-width="2.6" opacity="0.6"/><path d="M1390,831 L1414,829 L1404,856 Z" fill="#8ceb9c" opacity="0.75"/><path d="M1298,801 L1304,825 L1291,823 Z" fill="#7cc8d0" opacity="0.7"/><ellipse cx="1329" cy="842" rx="6.5" ry="10" fill="#7ad88c" stroke="#ee9a9a" stroke-width="2.6" opacity="0.85"/><ellipse cx="1329" cy="842" rx="2" ry="3" fill="#3a8a5a" opacity="0.8"/><path d="M1269,942 L1269,815" stroke="#e6b4b4" stroke-width="2.4" opacity="0.75"/><path d="M1268,813 L1284,825 L1268,836 Z" fill="#f09090" opacity="0.8"/><path d="M1269,942 L1342,937" stroke="#9aeaa6" stroke-width="2.6" opacity="0.6"/><path d="M1330,932 L1354,930 L1344,957 Z" fill="#8ceb9c" opacity="0.75"/><path d="M1238,906 L1244,930 L1231,928 Z" fill="#7cc8d0" opacity="0.7"/><ellipse cx="1269" cy="942" rx="6.5" ry="10" fill="#7ad88c" stroke="#ee9a9a" stroke-width="2.6" opacity="0.85"/><ellipse cx="1269" cy="942" rx="2" ry="3" fill="#3a8a5a" opacity="0.8"/><path d="M1355,891 L1361,915 L1348,913 Z" fill="#7cc8d0" opacity="0.7"/><ellipse cx="1386" cy="925" rx="6.5" ry="10" fill="#7ad88c" stroke="#ee9a9a" stroke-width="2.6" opacity="0.85"/><ellipse cx="1386" cy="925" rx="2" ry="3" fill="#3a8a5a" opacity="0.8"/><path d="M1153,965 L1153,838" stroke="#e6b4b4" stroke-width="2.4" opacity="0.75"/><path d="M1152,836 L1168,848 L1152,859 Z" fill="#f09090" opacity="0.8"/><path d="M1153,965 L1226,958" stroke="#9aeaa6" stroke-width="2.6" opacity="0.6"/><path d="M1214,953 L1238,951 L1228,978 Z" fill="#8ceb9c" opacity="0.75"/><path d="M1122,931 L1128,955 L1115,953 Z" fill="#7cc8d0" opacity="0.7"/><ellipse cx="1153" cy="965" rx="6.5" ry="10" fill="#7ad88c" stroke="#ee9a9a" stroke-width="2.6" opacity="0.85"/><ellipse cx="1153" cy="965" rx="2" ry="3" fill="#3a8a5a" opacity="0.8"/><path d="M1462,926 L1462,800" stroke="#e6b4b4" stroke-width="2.4" opacity="0.75"/><path d="M1461,798 L1477,810 L1461,821 Z" fill="#f09090" opacity="0.8"/><path d="M1462,926 L1535,922" stroke="#9aeaa6" stroke-width="2.6" opacity="0.6"/><path d="M1523,917 L1547,915 L1537,942 Z" fill="#8ceb9c" opacity="0.75"/><path d="M1430,891 L1436,915 L1423,913 Z" fill="#7cc8d0" opacity="0.7"/><ellipse cx="1462" cy="926" rx="6.5" ry="10" fill="#7ad88c" stroke="#ee9a9a" stroke-width="2.6" opacity="0.85"/><ellipse cx="1462" cy="926" rx="2" ry="3" fill="#3a8a5a" opacity="0.8"/><path d="M1267,1235 L1267,1108" stroke="#e6b4b4" stroke-width="2.4" opacity="0.75"/><path d="M1266,1106 L1282,1118 L1266,1129 Z" fill="#f09090" opacity="0.8"/><path d="M1267,1235 L1338,1229" stroke="#9aeaa6" stroke-width="2.6" opacity="0.6"/><path d="M1326,1224 L1350,1222 L1340,1249 Z" fill="#8ceb9c" opacity="0.75"/><path d="M1237,1201 L1243,1225 L1230,1223 Z" fill="#7cc8d0" opacity="0.7"/><ellipse cx="1267" cy="1235" rx="6.5" ry="10" fill="#7ad88c" stroke="#ee9a9a" stroke-width="2.6" opacity="0.85"/><ellipse cx="1267" cy="1235" rx="2" ry="3" fill="#3a8a5a" opacity="0.8"/><path d="M1391,1222 L1391,1095" stroke="#e6b4b4" stroke-width="2.4" opacity="0.75"/><path d="M1390,1093 L1406,1105 L1390,1116 Z" fill="#f09090" opacity="0.8"/><path d="M1391,1222 L1462,1213" stroke="#9aeaa6" stroke-width="2.6" opacity="0.6"/><path d="M1450,1208 L1474,1206 L1464,1233 Z" fill="#8ceb9c" opacity="0.75"/><path d="M1360,1186 L1366,1210 L1353,1208 Z" fill="#7cc8d0" opacity="0.7"/><ellipse cx="1391" cy="1222" rx="6.5" ry="10" fill="#7ad88c" stroke="#ee9a9a" stroke-width="2.6" opacity="0.85"/><ellipse cx="1391" cy="1222" rx="2" ry="3" fill="#3a8a5a" opacity="0.8"/><path d="M1258,1478 L1258,1350" stroke="#e6b4b4" stroke-width="2.4" opacity="0.75"/><path d="M1257,1348 L1273,1360 L1257,1371 Z" fill="#f09090" opacity="0.8"/><path d="M1258,1478 L1330,1470" stroke="#9aeaa6" stroke-width="2.6" opacity="0.6"/><path d="M1318,1465 L1342,1463 L1332,1490 Z" fill="#8ceb9c" opacity="0.75"/><path d="M1228,1444 L1234,1468 L1221,1466 Z" fill="#7cc8d0" opacity="0.7"/><ellipse cx="1258" cy="1478" rx="6.5" ry="10" fill="#7ad88c" stroke="#ee9a9a" stroke-width="2.6" opacity="0.85"/><ellipse cx="1258" cy="1478" rx="2" ry="3" fill="#3a8a5a" opacity="0.8"/><path d="M1399,1462 L1399,1335" stroke="#e6b4b4" stroke-width="2.4" opacity="0.75"/><path d="M1398,1333 L1414,1345 L1398,1356 Z" fill="#f09090" opacity="0.8"/><path d="M1399,1462 L1472,1453" stroke="#9aeaa6" stroke-width="2.6" opacity="0.6"/><path d="M1460,1448 L1484,1446 L1474,1473 Z" fill="#8ceb9c" opacity="0.75"/><path d="M1368,1426 L1374,1450 L1361,1448 Z" fill="#7cc8d0" opacity="0.7"/><ellipse cx="1399" cy="1462" rx="6.5" ry="10" fill="#7ad88c" stroke="#ee9a9a" stroke-width="2.6" opacity="0.85"/><ellipse cx="1399" cy="1462" rx="2" ry="3" fill="#3a8a5a" opacity="0.8"/><ellipse cx="2648" cy="338" rx="92" ry="19" fill="url(#vcSh)"/><path d="M2579,224 L2626,232 L2626,341 L2582,312 Z" fill="url(#vcL)"/><path d="M2626,232 L2714,226 L2711,321 L2626,341 Z" fill="url(#vcR)"/><path d="M2579,224 L2650,222 L2714,226 L2626,232 Z" fill="#f4f4f4"/><path d="M2579,224 L2626,232 L2714,226 M2626,232 L2626,341 M2579,224 L2582,312 L2626,341 L2711,321 L2714,226 M2579,224 L2650,221 L2714,226" fill="none" stroke="#9a9a9a" stroke-width="1.6" stroke-dasharray="11 4"/><rect x="2617" y="252" width="26" height="68" fill="#d4d4d6" opacity="0.8"/><text x="2652" y="292" font-family="Liberation Sans, sans-serif" font-size="27" fill="#9a9a9c" transform="rotate(-4 2652 292) " textLength="44" lengthAdjust="spacingAndGlyphs">LEFT</text><text x="2588" y="284" font-family="Liberation Sans, sans-serif" font-size="24" fill="#9a9a9c" transform="rotate(14 2588 284)" textLength="30" lengthAdjust="spacingAndGlyphs">BACK</text></svg>
<div class="t" id="title" style="left:56px;top:29px;font-size:24px;color:#7a7a7a;letter-spacing:-0.2px">Autodesk Fusion 360</div>
<div class="t" id="user" style="left:2380px;top:83px;font-size:21.33px;color:#4a4a4a;letter-spacing:0.1px">designneta designneta</div>
<div class="t" id="tabtxt" style="left:89px;top:136px;font-size:24px;font-weight:bold;color:#555;transform-origin:0 0;transform:scaleX(1.0)">Human_de...neta v2*</div>
<svg class="a" style="left:0;top:0" width="2768" height="170" viewBox="0 0 2768 170"><defs><linearGradient id="gF" x1="0" y1="0" x2="1" y2="1"><stop offset="0" stop-color="#f6a13a"/><stop offset="1" stop-color="#c9651a"/></linearGradient></defs><rect x="19" y="24" width="30" height="30" fill="#e3eef6"/><path d="M27,26 L43,26 L43,32 L34,32 L34,36 L41,36 L41,42 L34,42 L34,49 L27,47 Z" fill="url(#gF)"/><rect x="2508" y="37" width="21" height="2" fill="#8a8a8a"/><rect x="2600.5" y="33.5" width="15" height="14" fill="none" stroke="#8a8a8a" stroke-width="1.6"/><path d="M2604,33 L2604,29.5 L2619.5,29.5 L2619.5,44 L2616,44" fill="none" stroke="#8a8a8a" stroke-width="1.6"/><path d="M2694,29 L2712,47 M2712,29 L2694,47" stroke="#777" stroke-width="2" fill="none"/><rect x="40" y="74" width="10" height="10" fill="#4e4e4e"/><rect x="40" y="86" width="10" height="10" fill="#4e4e4e"/><rect x="40" y="98" width="10" height="10" fill="#4e4e4e"/><rect x="52" y="74" width="10" height="10" fill="#4e4e4e"/><rect x="52" y="86" width="10" height="10" fill="#4e4e4e"/><rect x="52" y="98" width="10" height="10" fill="#4e4e4e"/><rect x="64" y="74" width="10" height="10" fill="#4e4e4e"/><rect x="64" y="86" width="10" height="10" fill="#4e4e4e"/><rect x="64" y="98" width="10" height="10" fill="#4e4e4e"/><path d="M128,76 L142,76 L142,88 L154,88 L154,108 L128,108 Z" fill="#4e4e4e"/><path d="M145,77 L154,86 L145,86 Z" fill="#4e4e4e"/><path d="M166,86 L180,86 L173.0,95.5 Z" fill="#2b2b2b"/><path d="M230,76 L262,76 L262,108 L236,108 L230,102 Z" fill="#4e4e4e"/><rect x="237" y="78" width="18" height="14" fill="#dcdcdc"/><rect x="237" y="98" width="18" height="8" fill="#dcdcdc"/><rect x="240" y="99.5" width="3" height="5" fill="#4e4e4e"/><path d="M310,90 L325,79 L325,86 C336,86 342,92 342,104 C339,97 334,95 325,95 L325,101 Z" fill="#4e4e4e"/><path d="M355.5,86 L369.5,86 L362.5,95.5 Z" fill="#2b2b2b"/><path d="M432,90 L417,79 L417,86 C406,86 400,92 400,104 C403,97 408,95 417,95 L417,101 Z" fill="#999"/><path d="M446,86 L460,86 L453.0,95.5 Z" fill="#8c8c8c"/><path d="M2290,78 L2322,78 L2322,100 L2318,100 L2318,107 L2310,100 L2290,100 Z" fill="#4a4a4a"/><rect x="2294" y="83" width="24" height="2.2" fill="#dcdcdc"/><rect x="2294" y="88" width="24" height="2.2" fill="#dcdcdc"/><rect x="2294" y="93" width="16" height="2.2" fill="#dcdcdc"/><path d="M2608,86 L2622,86 L2615.0,95.5 Z" fill="#2b2b2b"/><circle cx="2688" cy="92" r="16" fill="#646464"/><text x="2688" y="102" text-anchor="middle" font-family="Liberation Sans, sans-serif" font-weight="bold" font-size="27" fill="#dcdcdc">?</text><path d="M2712,86 L2726,86 L2719.0,95.5 Z" fill="#2b2b2b"/><path d="M36,133 L51,127 L68,131 L68,147 L52,157 L36,149 Z" fill="#5a5a5a"/><path d="M36,133 L52,138 L52,157 L36,149 Z" fill="#9a9a9a"/><path d="M380,137 L396,152 M396,137 L380,152" stroke="#8a8a8a" stroke-width="4.5" fill="none"/><path d="M2715,148.500 L2726,137.500 L2737,148.500" stroke="#858585" stroke-width="5" fill="none" stroke-linejoin="miter"/></svg>
<div class="a" id="ribbon"></div><div class="a" id="model"></div>
<div class="t" id="modeltxt" style="left:89px;top:226px;font-size:22px;color:#fff;text-shadow:0 1px 1px #888;letter-spacing:-0.3px">MODEL</div>
<div class="t grp" style="left:399px;top:266.5px;font-size:21.3px;color:#484848;transform-origin:0 0;transform:scaleX(0.903)">SKETCH</div>
<div class="t grp" style="left:711px;top:266.5px;font-size:21.3px;color:#484848;transform-origin:0 0;transform:scaleX(0.931)">CREATE</div>
<div class="t grp" style="left:938px;top:266.5px;font-size:21.3px;color:#484848;transform-origin:0 0;transform:scaleX(0.930)">MODIFY</div>
<div class="t grp" style="left:1151px;top:266.5px;font-size:21.3px;color:#484848;transform-origin:0 0;transform:scaleX(0.949)">ASSEMBLE</div>
<div class="t grp" style="left:1331px;top:266.5px;font-size:21.3px;color:#484848;transform-origin:0 0;transform:scaleX(0.912)">CONSTRUCT</div>
<div class="t grp" style="left:1519px;top:266.5px;font-size:21.3px;color:#484848;transform-origin:0 0;transform:scaleX(0.877)">INSPECT</div>
<div class="t grp" style="left:1667px;top:266.5px;font-size:21.3px;color:#484848;transform-origin:0 0;transform:scaleX(0.875)">INSERT</div>
<div class="t grp" style="left:1795px;top:266.5px;font-size:21.3px;color:#484848;transform-origin:0 0;transform:scaleX(0.928)">MAKE</div>
<div class="t grp" style="left:1912px;top:266.5px;font-size:21.3px;color:#484848;transform-origin:0 0;transform:scaleX(0.948)">ADD-INS</div>
<div class="t grp" style="left:2061px;top:266.5px;font-size:21.3px;color:#484848;transform-origin:0 0;transform:scaleX(0.893)">SELECT</div>
<svg class="a" style="left:0;top:170px" width="2768" height="130" viewBox="0 170 2768 130"><defs><linearGradient id="rgW" x1="0" y1="0" x2="0" y2="1"><stop offset="0" stop-color="#ffffff"/><stop offset="1" stop-color="#b9bfcc"/></linearGradient><linearGradient id="rgB" x1="0" y1="0" x2="0" y2="1"><stop offset="0" stop-color="#f4f5f8"/><stop offset="1" stop-color="#a9afbf"/></linearGradient><linearGradient id="rgBlue" x1="0" y1="0" x2="0" y2="1"><stop offset="0" stop-color="#b9d0ea"/><stop offset="1" stop-color="#8fb0da"/></linearGradient><linearGradient id="rgP" x1="0" y1="0" x2="0" y2="1"><stop offset="0" stop-color="#e9cffb"/><stop offset="1" stop-color="#b98ae6"/></linearGradient><linearGradient id="rgSky" x1="0" y1="0" x2="0" y2="1"><stop offset="0" stop-color="#9fc8ee"/><stop offset="1" stop-color="#e6f0fa"/></linearGradient></defs><rect x="35" y="210" width="2" height="46" fill="#8f8f8f"/><rect x="43.5" y="210" width="2" height="46" fill="#8f8f8f"/><path d="M175,230 L186,230 L180.5,237 Z" fill="#fff"/><path d="M484,270 L495.5,270 L489.75,277.5 Z" fill="#2b2b2b"/><path d="M797,270 L808.5,270 L802.75,277.5 Z" fill="#2b2b2b"/><path d="M1022,270 L1033.5,270 L1027.75,277.5 Z" fill="#2b2b2b"/><path d="M1267,270 L1278.5,270 L1272.75,277.5 Z" fill="#2b2b2b"/><path d="M1460,270 L1471.5,270 L1465.75,277.5 Z" fill="#2b2b2b"/><path d="M1607,270 L1618.5,270 L1612.75,277.5 Z" fill="#2b2b2b"/><path d="M1743,270 L1754.5,270 L1748.75,277.5 Z" fill="#2b2b2b"/><path d="M1859,270 L1870.5,270 L1864.75,277.5 Z" fill="#2b2b2b"/><path d="M2003,270 L2014.5,270 L2008.75,277.5 Z" fill="#2b2b2b"/><path d="M2143,270 L2154.5,270 L2148.75,277.5 Z" fill="#2b2b2b"/><rect x="667.5" y="184" width="4" height="101" fill="#cdcdcd"/><rect x="851.5" y="184" width="4" height="101" fill="#cdcdcd"/><rect x="1121.5" y="184" width="4" height="101" fill="#cdcdcd"/><rect x="1305.5" y="184" width="4" height="101" fill="#cdcdcd"/><rect x="1493.5" y="184" width="4" height="101" fill="#cdcdcd"/><rect x="1641.5" y="184" width="4" height="101" fill="#cdcdcd"/><rect x="1769.5" y="184" width="4" height="101" fill="#cdcdcd"/><rect x="1887.5" y="184" width="4" height="101" fill="#cdcdcd"/><rect x="2035.5" y="184" width="4" height="101" fill="#cdcdcd"/><rect x="251.5" y="196.500" width="50" height="50" fill="url(#rgW)" stroke="#222" stroke-width="2.6"/><path d="M258,202 L258,240 L296,240" fill="none" stroke="#555" stroke-width="2"/><rect x="254.5" y="236.5" width="7" height="7" fill="#3b74d6"/><path d="M277,226 L280,215 L299,196 L305,202 L286,221 Z" fill="#f5c93a" stroke="#222" stroke-width="2"/><path d="M299,196 L302,193 L308,199 L305,202 Z" fill="#d58a4a" stroke="#222" stroke-width="1.5"/><path d="M277,226 L280,215 L286,221 Z" fill="#fff" stroke="#222" stroke-width="1.5"/><path d="M290,228 L298,228 L298,236 L306,236 L306,244 L298,244 L298,252 L290,252 L290,244 L282,244 L282,236 L290,236 Z" fill="#fff" stroke="#222" stroke-width="2"/><path d="M338,238 L370,238 C398,238 398,204 370,204" fill="none" stroke="#333" stroke-width="2.4"/><rect x="333.0" y="233.0" width="10" height="10" fill="#2f62c8"/><rect x="365.0" y="233.0" width="10" height="10" fill="#2f62c8"/><rect x="365.0" y="199.0" width="10" height="10" fill="#2f62c8"/><rect x="423" y="205" width="52" height="33" fill="url(#rgB)" stroke="#222" stroke-width="2.6"/><rect x="469.5" y="201.5" width="9" height="9" fill="#2f62c8"/><path d="M443,221 L455,221 M449,215 L449,227" stroke="#222" stroke-width="2"/><circle cx="535.5" cy="220" r="28.5" fill="url(#rgB)" stroke="#333" stroke-width="2.6"/><path d="M516,241 L556,199" stroke="#222" stroke-width="2"/><path d="M530,220 L542,220 M536,214 L536,226" stroke="#222" stroke-width="1.6"/><rect x="552.5" y="193.5" width="9" height="9" fill="#2f62c8"/><rect x="595" y="205" width="54" height="33" fill="url(#rgB)" stroke="#222" stroke-width="2.6"/><rect x="643.5" y="201.5" width="9" height="9" fill="#2f62c8"/><rect x="591.5" y="233.5" width="9" height="9" fill="#2f62c8"/><path d="M691,202 L701,192 L735,192 L735,238 L725,248 L691,248 Z" fill="#a9c4e4" stroke="#222" stroke-width="2.4" stroke-linejoin="round"/><path d="M691,202 L725,202 L735,192 M725,202 L725,248" fill="none" stroke="#6d8cb4" stroke-width="1.6"/><rect x="692" y="203" width="32" height="36" fill="url(#rgBlue)"/><path d="M692,240 L724,240 L724,247 L692,247 Z" fill="#d7dbe2"/><path d="M744.5,244 L744.500,202" stroke="#222" stroke-width="2.2"/><path d="M739,204 L744.500,196 L750,204 Z" fill="#222"/><rect x="777" y="192" width="48" height="49" rx="13" fill="url(#rgP)" stroke="#7a4fa8" stroke-width="2.4"/><path d="M789,193 L789,240 M778,204.2 L824,204.2" stroke="#6b3f9c" stroke-width="1.8"/><path d="M801,193 L801,240 M778,216.4 L824,216.4" stroke="#6b3f9c" stroke-width="1.8"/><path d="M813,193 L813,240 M778,228.6 L824,228.6" stroke="#6b3f9c" stroke-width="1.8"/><rect x="818" y="230" width="17" height="19" fill="#e6e6e6" stroke="#333" stroke-width="2"/><path d="M820,240 L828,240 M826,235 L832,240 L826,245 Z" stroke="#222" stroke-width="2" fill="#222"/><path d="M875,204 L888,190 L931,190 L931,234 L918,248 L875,248 Z" fill="#e9edf3" stroke="#222" stroke-width="2.4" stroke-linejoin="round"/><path d="M885,204 L898,190 L931,190 L931,234 L918,248 L885,248 Z" fill="url(#rgBlue)" stroke="#222" stroke-width="2"/><path d="M885,204 L918,204 L931,190 M918,204 L918,248" stroke="#3d5f8a" stroke-width="1.6" fill="none"/><path d="M918,204 L931,190 L931,234 L918,248 Z" fill="#7f9fcb"/><path d="M918,213 L927,213 L927,208 L936,217.500 L927,227 L927,222 L918,222 Z" fill="#222"/><path d="M961,212 L977,194 L1000,194 C1010,196 1015,204 1015,214 L1015,232 L1000,249 L961,249 Z" fill="url(#rgB)" stroke="#222" stroke-width="2.4" stroke-linejoin="round"/><path d="M985,196 C995,190 1012,196 1015,214 L1015,222 L1003,232 C1003,218 996,208 982,206 Z" fill="#8fb0d8" stroke="#222" stroke-width="1.8"/><path d="M961,212 L982,212 M1003,232 L1003,249" stroke="#777" stroke-width="1.4"/><path d="M1047,214 L1070,190 L1088,190 L1105,207 L1105,249 L1064,249 L1047,232 Z" fill="url(#rgB)" stroke="#222" stroke-width="2.4" stroke-linejoin="round"/><path d="M1048,214 L1069,193 L1086,207 L1064,228 Z" fill="#86abd8" stroke="#222" stroke-width="1.8"/><path d="M1064,228 L1064,249 M1086,207 L1105,207" stroke="#888" stroke-width="1.4"/><path d="M1144,198 L1150,192 L1176,192 L1176,217 L1195,217 L1201,212 L1201,243 L1195,249 L1144,249 Z" fill="url(#rgB)" stroke="#222" stroke-width="2.4" stroke-linejoin="round"/><path d="M1145,199 L1170,199 L1176,193 L1176,217 L1170,223 L1145,223 Z" fill="#8fb0dc" stroke="#222" stroke-width="1.6"/><path d="M1145,223 L1195,223 L1201,217 M1170,223 L1170,249 M1195,223 L1195,249" stroke="#555" stroke-width="1.6" fill="none"/><path d="M1151,192 L1159,192 L1159,200 L1167,200 L1167,208 L1159,208 L1159,216 L1151,216 L1151,208 L1143,208 L1143,200 L1151,200 Z" fill="#fff" stroke="#222" stroke-width="2"/><path d="M1233,212 L1246,197 L1256,200 L1256,218 L1243,246 L1233,246 Z" fill="url(#rgB)" stroke="#222" stroke-width="2.2" stroke-linejoin="round"/><path d="M1264,205 L1272,203 L1287,217 L1287,247 L1272,236 L1264,240 Z" fill="url(#rgB)" stroke="#222" stroke-width="2.2" stroke-linejoin="round"/><circle cx="1250" cy="199" r="3" fill="#fff" stroke="#222" stroke-width="1.5"/><path d="M1251,222 L1251,232 M1266,205 L1266,218" stroke="#ef7a1a" stroke-width="2.4"/><rect x="1261" y="217" width="9" height="22" fill="#e8e8e8" stroke="#222" stroke-width="1.6"/><path d="M1373,207 L1389,193 L1407,193 L1407,234 L1391,248 L1373,248 Z" fill="url(#rgW)" stroke="#222" stroke-width="2.2" stroke-linejoin="round"/><path d="M1391,207 L1407,193 L1407,234 L1391,248 Z" fill="#4f9a4f" stroke="#222" stroke-width="1.8"/><path d="M1415,207 L1431,193 L1431,234 L1415,248 Z" fill="#ee9a60" stroke="#7a2f10" stroke-width="2"/><path d="M1541,210.500 L1597,210.500 M1541,205 L1541,216 M1597,205 L1597,216" stroke="#333" stroke-width="2.2" fill="none"/><rect x="1540" y="226" width="58" height="12" rx="2" fill="#f4c335" stroke="#a86f10" stroke-width="2"/><rect x="1544.8" y="227" width="1.3" height="5" fill="#a86f10"/><rect x="1549.6" y="227" width="1.3" height="3" fill="#a86f10"/><rect x="1554.4" y="227" width="1.3" height="5" fill="#a86f10"/><rect x="1559.2" y="227" width="1.3" height="3" fill="#a86f10"/><rect x="1564.0" y="227" width="1.3" height="5" fill="#a86f10"/><rect x="1568.8" y="227" width="1.3" height="3" fill="#a86f10"/><rect x="1573.6" y="227" width="1.3" height="5" fill="#a86f10"/><rect x="1578.4" y="227" width="1.3" height="3" fill="#a86f10"/><rect x="1583.2" y="227" width="1.3" height="5" fill="#a86f10"/><rect x="1588.0" y="227" width="1.3" height="3" fill="#a86f10"/><rect x="1592.8" y="227" width="1.3" height="5" fill="#a86f10"/><rect x="1679" y="192" width="58" height="57" fill="url(#rgSky)" stroke="#222" stroke-width="2.4"/><path d="M1680,248 L1680,226 L1700,205 L1736,244 L1736,248 Z" fill="#70757f"/><path d="M1708,228 L1722,214 L1736,226 L1736,244 Z" fill="#a4acb6"/><circle cx="1719" cy="205" r="6" fill="#fff6c8"/><path d="M1803,203 L1810,195 L1853,195 L1860,203 L1860,243 Q1860,249 1854,249 L1809,249 Q1803,249 1803,243 Z" fill="url(#rgW)" stroke="#444" stroke-width="2.2"/><rect x="1808" y="213" width="47" height="30" fill="#777" stroke="#444" stroke-width="1.6"/><path d="M1816,240 L1822,226 L1842,226 L1848,240 Z" fill="#f0f0f0" stroke="#555" stroke-width="1.2"/><rect x="1826" y="214" width="8" height="12" fill="#4f8cd8"/><rect x="1849" y="208" width="5" height="5" fill="#1a8a1a"/><rect x="1935" y="196" width="46" height="41" fill="url(#rgB)" stroke="#333" stroke-width="2.2"/><rect x="1937" y="198" width="42" height="7" fill="#9a9ea8"/><path d="M1943,212 L1949,216 L1943,220 M1952,216 L1960,216" stroke="#333" stroke-width="1.8" fill="none"/><circle cx="1980" cy="236" r="11" fill="#a9c0ee" stroke="#2f4f9a" stroke-width="2" stroke-dasharray="5 3.6"/><circle cx="1980" cy="236" r="9" fill="#b7caf0"/><circle cx="1980" cy="236" r="4.500" fill="#fff"/><circle cx="1992.0" cy="236.0" r="3.4" fill="#a9c0ee" stroke="#2f4f9a" stroke-width="1.2"/><circle cx="1988.5" cy="244.5" r="3.4" fill="#a9c0ee" stroke="#2f4f9a" stroke-width="1.2"/><circle cx="1980.0" cy="248.0" r="3.4" fill="#a9c0ee" stroke="#2f4f9a" stroke-width="1.2"/><circle cx="1971.5" cy="244.5" r="3.4" fill="#a9c0ee" stroke="#2f4f9a" stroke-width="1.2"/><circle cx="1968.0" cy="236.0" r="3.4" fill="#a9c0ee" stroke="#2f4f9a" stroke-width="1.2"/><circle cx="1971.5" cy="227.5" r="3.4" fill="#a9c0ee" stroke="#2f4f9a" stroke-width="1.2"/><circle cx="1980.0" cy="224.0" r="3.4" fill="#a9c0ee" stroke="#2f4f9a" stroke-width="1.2"/><circle cx="1988.5" cy="227.5" r="3.4" fill="#a9c0ee" stroke="#2f4f9a" stroke-width="1.2"/><circle cx="1980" cy="236" r="9.5" fill="#b3c8f0"/><circle cx="1980" cy="236" r="4.500" fill="#fff"/><rect x="2069" y="183" width="79" height="78" fill="#5a8bb9"/><rect x="2079" y="192" width="40" height="27" fill="none" stroke="#6aa81a" stroke-width="2.6"/><path d="M2119,218 L2119,246 L2125,240 L2130,250 L2134,248 L2129,238 L2138,238 Z" fill="#fff" stroke="#1a2a3a" stroke-width="2"/></svg>
<div class="a hdr" style="left:24px;top:303px;width:600px;height:49px"></div>
<div class="t" style="left:78px;top:317px;font-size:20px;color:#6a6a6a;letter-spacing:0px">BROWSER</div>
<div class="a" style="left:32px;top:364px;width:12px;height:1211px;background:#bdbdbd;border-radius:4px 4px 0 0"></div>
<div class="a" style="left:32px;top:364px;width:12px;height:669px;background:#989898;border-radius:4px"></div>
<div class="row" style="left:96px;top:362px;width:432px"></div>
<div class="a" style="left:100px;top:366px;width:378px;height:32px;background:#818181"></div>
<div class="t" style="left:213px;top:371px;font-size:22px;font-weight:bold;color:#fff;letter-spacing:0.45px" id="roottxt">Human_designneta v2</div>
<div class="row" style="left:132px;top:410px;width:220px"><span class="rt" style="left:67px">Named Views</span></div>
<div class="row" style="left:132px;top:458px;width:180px"><span class="rt" style="left:67px">Units: mm</span></div>
<div class="row" style="left:132px;top:506px;width:190px"><span class="rt" style="left:116px">Origin</span></div>
<div class="row" style="left:132px;top:554px;width:190px"><span class="rt" style="left:116px">Joints</span></div>
<div class="row" style="left:168px;top:602px;width:238px"><span class="rt" style="left:116px">Right_Arm</span></div>
<div class="row" style="left:168px;top:650px;width:246px"><span class="rt" style="left:116px">Right_Arm2</span></div>
<div class="row" style="left:168px;top:698px;width:246px"><span class="rt" style="left:116px">Right_Hand</span></div>
<div class="row" style="left:168px;top:746px;width:230px"><span class="rt" style="left:116px">Left_Arm</span></div>
<div class="row" style="left:168px;top:794px;width:238px"><span class="rt" style="left:116px">Left_Hand</span></div>
<div class="row" style="left:168px;top:842px;width:238px"><span class="rt" style="left:116px">Left_Arm2</span></div>
<div class="row" style="left:168px;top:890px;width:189px"><span class="rt" style="left:116px">Head</span></div>
<div class="row" style="left:168px;top:938px;width:189px"><span class="rt" style="left:116px">Chest</span></div>
<div class="row" style="left:168px;top:986px;width:237px"><span class="rt" style="left:116px">Right_Foot</span></div>
<div class="row" style="left:168px;top:1034px;width:246px"><span class="rt" style="left:116px">Right_Leg2</span></div>
<div class="row" style="left:168px;top:1082px;width:229px"><span class="rt" style="left:116px">Right_Leg</span></div>
<div class="row" style="left:168px;top:1130px;width:221px"><span class="rt" style="left:116px">Left_Leg</span></div>
<div class="row" style="left:168px;top:1178px;width:237px"><span class="rt" style="left:116px">Left_Leg2</span></div>
<div class="row" style="left:168px;top:1226px;width:229px"><span class="rt" style="left:116px">Left_Foot</span></div>
<div class="row" style="left:132px;top:1274px;width:245px"><span class="rt" style="left:116px">Right_Leg:1</span></div>
<div class="row" style="left:132px;top:1322px;width:238px"><span class="rt" style="left:116px">Left_Leg:1</span></div>
<div class="row" style="left:132px;top:1370px;width:198px"><span class="rt" style="left:116px">Head:1</span></div>
<div class="row" style="left:132px;top:1418px;width:253px"><span class="rt" style="left:116px">Right_Foot:1</span></div>
<div class="row" style="left:132px;top:1466px;width:245px"><span class="rt" style="left:116px">Left_Foot:1</span></div>
<div class="row" style="left:132px;top:1514px;width:261px"><span class="rt" style="left:116px">Right_Leg2:1</span></div>
<div class="row" style="left:132px;top:1562px;width:245px"><span class="rt" style="left:116px">Left_Leg2:1</span></div>
<div class="a hdr" style="left:24px;top:1623px;width:600px;height:49px"></div>
<div class="t" style="left:78px;top:1637px;font-size:20px;color:#6a6a6a;letter-spacing:-0.2px">COMMENTS</div>
<svg class="a" style="left:0;top:0" width="700" height="1700" viewBox="0 0 700 1700"><defs><radialGradient id="gBulb" cx="0.4" cy="0.3" r="0.8"><stop offset="0" stop-color="#fffbd0"/><stop offset="0.45" stop-color="#f7e14a"/><stop offset="1" stop-color="#d9b21a"/></radialGradient><radialGradient id="gBulbOff" cx="0.4" cy="0.3" r="0.8"><stop offset="0" stop-color="#ffffff"/><stop offset="0.5" stop-color="#dfe8fb"/><stop offset="1" stop-color="#aebfe6"/></radialGradient><linearGradient id="gFolder" x1="0" y1="0" x2="0" y2="1"><stop offset="0" stop-color="#ffffff"/><stop offset="1" stop-color="#d6d9df"/></linearGradient><linearGradient id="gTri" x1="0" y1="0" x2="1" y2="1"><stop offset="0.3" stop-color="#e8e8e8"/><stop offset="1" stop-color="#222"/></linearGradient></defs><path d="M34,328 L46,321 L46,335 Z M46,328 L58,321 L58,335 Z" fill="#222"/><circle cx="590" cy="327" r="8.5" fill="#222"/><rect x="584.5" y="325.5" width="11" height="3" fill="#ddd"/><rect x="614" y="316" width="2" height="24" fill="#8a8a8a"/><rect x="618" y="320" width="1.5" height="16" fill="#a5a5a5"/><path d="M80,372 L80,394 L58,394 Z" fill="url(#gTri)" stroke="#333" stroke-width="1.5"/><g transform="translate(117,383) scale(0.9)"><path d="M0,-15 C7,-15 11,-10 11,-4 C11,1 7,4 5,7 L-5,7 C-7,4 -11,1 -11,-4 C-11,-10 -7,-15 0,-15 Z" fill="url(#gBulb)" stroke="#b8952a" stroke-width="1.6"/><rect x="-4.5" y="7" width="9" height="6" fill="#d8d8d8" stroke="#6e6e6e" stroke-width="1.6"/><rect x="-2.5" y="13" width="5" height="2" fill="#6e6e6e"/></g><path d="M155,374 L161,368 L170,368 L170,380 L177,380 L183,378 L183,391 L177,396 L155,396 Z" fill="#f1f1f1" stroke="#fff" stroke-width="2" stroke-linejoin="round"/><path d="M165,375 L165,396 M165,384 L177,384 L177,396" stroke="#c4c4c4" stroke-width="1.5" fill="none"/><circle cx="499" cy="382" r="11" fill="#fff" stroke="#222" stroke-width="2.6"/><circle cx="499" cy="382" r="4.2" fill="#222"/><path d="M97.5,418.5 L113,430.5 L97.5,442.5 Z" fill="#f4f4f4" stroke="#2a2a2a" stroke-width="2.5" stroke-linejoin="miter"/><path d="M139,419 L150,419 L152,423 L167,423 L167,442 L139,442 Z" fill="url(#gFolder)" stroke="#3a3a3a" stroke-width="2"/><path d="M139,423.5 L152,423.5" stroke="#3a3a3a" stroke-width="1.6"/><path d="M141,464 L157,464 L164,472 L164,486 L141,486 Z" fill="url(#gFolder)" stroke="#3a3a3a" stroke-width="1.8"/><path d="M157,464 L157,472 L164,472" fill="none" stroke="#3a3a3a" stroke-width="1.6"/><rect x="138" y="486" width="29" height="6" fill="#f2b400" stroke="#a86f00" stroke-width="1.2"/><path d="M97.5,514.5 L113,526.5 L97.5,538.5 Z" fill="#f4f4f4" stroke="#2a2a2a" stroke-width="2.5" stroke-linejoin="miter"/><g transform="translate(153,527) scale(0.9)"><path d="M0,-15 C7,-15 11,-10 11,-4 C11,1 7,4 5,7 L-5,7 C-7,4 -11,1 -11,-4 C-11,-10 -7,-15 0,-15 Z" fill="url(#gBulbOff)" stroke="#7f8fb0" stroke-width="1.6"/><rect x="-4.5" y="7" width="9" height="6" fill="#d8d8d8" stroke="#6e6e6e" stroke-width="1.6"/><rect x="-2.5" y="13" width="5" height="2" fill="#6e6e6e"/></g><path d="M189,515 L200,515 L202,519 L217,519 L217,538 L189,538 Z" fill="url(#gFolder)" stroke="#3a3a3a" stroke-width="2"/><path d="M189,519.5 L202,519.5" stroke="#3a3a3a" stroke-width="1.6"/><path d="M115,563 L115,585 L93,585 Z" fill="url(#gTri)" stroke="#333" stroke-width="1.5"/><g transform="translate(153,575) scale(0.9)"><path d="M0,-15 C7,-15 11,-10 11,-4 C11,1 7,4 5,7 L-5,7 C-7,4 -11,1 -11,-4 C-11,-10 -7,-15 0,-15 Z" fill="url(#gBulb)" stroke="#b8952a" stroke-width="1.6"/><rect x="-4.5" y="7" width="9" height="6" fill="#d8d8d8" stroke="#6e6e6e" stroke-width="1.6"/><rect x="-2.5" y="13" width="5" height="2" fill="#6e6e6e"/></g><path d="M189,563 L200,563 L202,567 L217,567 L217,586 L189,586 Z" fill="url(#gFolder)" stroke="#3a3a3a" stroke-width="2"/><path d="M189,567.5 L202,567.5" stroke="#3a3a3a" stroke-width="1.6"/><path d="M133.5,610.5 L149,622.5 L133.5,634.5 Z" fill="#f4f4f4" stroke="#2a2a2a" stroke-width="2.5" stroke-linejoin="miter"/><g transform="translate(189,623) scale(0.9)"><path d="M0,-15 C7,-15 11,-10 11,-4 C11,1 7,4 5,7 L-5,7 C-7,4 -11,1 -11,-4 C-11,-10 -7,-15 0,-15 Z" fill="url(#gBulb)" stroke="#b8952a" stroke-width="1.6"/><rect x="-4.5" y="7" width="9" height="6" fill="#d8d8d8" stroke="#6e6e6e" stroke-width="1.6"/><rect x="-2.5" y="13" width="5" height="2" fill="#6e6e6e"/></g><circle cx="240" cy="622" r="11.5" fill="#fff" stroke="#c9c1b8" stroke-width="1.5"/><circle cx="240" cy="622" r="6.2" fill="#fff" stroke="#1e90e6" stroke-width="4.2"/><path d="M133.5,658.5 L149,670.5 L133.5,682.5 Z" fill="#f4f4f4" stroke="#2a2a2a" stroke-width="2.5" stroke-linejoin="miter"/><g transform="translate(189,671) scale(0.9)"><path d="M0,-15 C7,-15 11,-10 11,-4 C11,1 7,4 5,7 L-5,7 C-7,4 -11,1 -11,-4 C-11,-10 -7,-15 0,-15 Z" fill="url(#gBulb)" stroke="#b8952a" stroke-width="1.6"/><rect x="-4.5" y="7" width="9" height="6" fill="#d8d8d8" stroke="#6e6e6e" stroke-width="1.6"/><rect x="-2.5" y="13" width="5" height="2" fill="#6e6e6e"/></g><circle cx="240" cy="670" r="11.5" fill="#fff" stroke="#c9c1b8" stroke-width="1.5"/><circle cx="240" cy="670" r="6.2" fill="#fff" stroke="#1e90e6" stroke-width="4.2"/><path d="M133.5,706.5 L149,718.5 L133.5,730.5 Z" fill="#f4f4f4" stroke="#2a2a2a" stroke-width="2.5" stroke-linejoin="miter"/><g transform="translate(189,719) scale(0.9)"><path d="M0,-15 C7,-15 11,-10 11,-4 C11,1 7,4 5,7 L-5,7 C-7,4 -11,1 -11,-4 C-11,-10 -7,-15 0,-15 Z" fill="url(#gBulb)" stroke="#b8952a" stroke-width="1.6"/><rect x="-4.5" y="7" width="9" height="6" fill="#d8d8d8" stroke="#6e6e6e" stroke-width="1.6"/><rect x="-2.5" y="13" width="5" height="2" fill="#6e6e6e"/></g><circle cx="240" cy="718" r="11.5" fill="#fff" stroke="#c9c1b8" stroke-width="1.5"/><circle cx="240" cy="718" r="6.2" fill="#fff" stroke="#1e90e6" stroke-width="4.2"/><path d="M133.5,754.5 L149,766.5 L133.5,778.5 Z" fill="#f4f4f4" stroke="#2a2a2a" stroke-width="2.5" stroke-linejoin="miter"/><g transform="translate(189,767) scale(0.9)"><path d="M0,-15 C7,-15 11,-10 11,-4 C11,1 7,4 5,7 L-5,7 C-7,4 -11,1 -11,-4 C-11,-10 -7,-15 0,-15 Z" fill="url(#gBulb)" stroke="#b8952a" stroke-width="1.6"/><rect x="-4.5" y="7" width="9" height="6" fill="#d8d8d8" stroke="#6e6e6e" stroke-width="1.6"/><rect x="-2.5" y="13" width="5" height="2" fill="#6e6e6e"/></g><circle cx="240" cy="766" r="11.5" fill="#fff" stroke="#c9c1b8" stroke-width="1.5"/><circle cx="240" cy="766" r="6.2" fill="#fff" stroke="#1e90e6" stroke-width="4.2"/><path d="M133.5,802.5 L149,814.5 L133.5,826.5 Z" fill="#f4f4f4" stroke="#2a2a2a" stroke-width="2.5" stroke-linejoin="miter"/><g transform="translate(189,815) scale(0.9)"><path d="M0,-15 C7,-15 11,-10 11,-4 C11,1 7,4 5,7 L-5,7 C-7,4 -11,1 -11,-4 C-11,-10 -7,-15 0,-15 Z" fill="url(#gBulb)" stroke="#b8952a" stroke-width="1.6"/><rect x="-4.5" y="7" width="9" height="6" fill="#d8d8d8" stroke="#6e6e6e" stroke-width="1.6"/><rect x="-2.5" y="13" width="5" height="2" fill="#6e6e6e"/></g><circle cx="240" cy="814" r="11.5" fill="#fff" stroke="#c9c1b8" stroke-width="1.5"/><circle cx="240" cy="814" r="6.2" fill="#fff" stroke="#1e90e6" stroke-width="4.2"/><path d="M133.5,850.5 L149,862.5 L133.5,874.5 Z" fill="#f4f4f4" stroke="#2a2a2a" stroke-width="2.5" stroke-linejoin="miter"/><g transform="translate(189,863) scale(0.9)"><path d="M0,-15 C7,-15 11,-10 11,-4 C11,1 7,4 5,7 L-5,7 C-7,4 -11,1 -11,-4 C-11,-10 -7,-15 0,-15 Z" fill="url(#gBulb)" stroke="#b8952a" stroke-width="1.6"/><rect x="-4.5" y="7" width="9" height="6" fill="#d8d8d8" stroke="#6e6e6e" stroke-width="1.6"/><rect x="-2.5" y="13" width="5" height="2" fill="#6e6e6e"/></g><circle cx="240" cy="862" r="11.5" fill="#fff" stroke="#c9c1b8" stroke-width="1.5"/><circle cx="240" cy="862" r="6.2" fill="#fff" stroke="#1e90e6" stroke-width="4.2"/><path d="M133.5,898.5 L149,910.5 L133.5,922.5 Z" fill="#f4f4f4" stroke="#2a2a2a" stroke-width="2.5" stroke-linejoin="miter"/><g transform="translate(189,911) scale(0.9)"><path d="M0,-15 C7,-15 11,-10 11,-4 C11,1 7,4 5,7 L-5,7 C-7,4 -11,1 -11,-4 C-11,-10 -7,-15 0,-15 Z" fill="url(#gBulb)" stroke="#b8952a" stroke-width="1.6"/><rect x="-4.5" y="7" width="9" height="6" fill="#d8d8d8" stroke="#6e6e6e" stroke-width="1.6"/><rect x="-2.5" y="13" width="5" height="2" fill="#6e6e6e"/></g><circle cx="240" cy="910" r="11.5" fill="#fff" stroke="#c9c1b8" stroke-width="1.5"/><circle cx="240" cy="910" r="6.2" fill="#fff" stroke="#1e90e6" stroke-width="4.2"/><path d="M133.5,946.5 L149,958.5 L133.5,970.5 Z" fill="#f4f4f4" stroke="#2a2a2a" stroke-width="2.5" stroke-linejoin="miter"/><g transform="translate(189,959) scale(0.9)"><path d="M0,-15 C7,-15 11,-10 11,-4 C11,1 7,4 5,7 L-5,7 C-7,4 -11,1 -11,-4 C-11,-10 -7,-15 0,-15 Z" fill="url(#gBulb)" stroke="#b8952a" stroke-width="1.6"/><rect x="-4.5" y="7" width="9" height="6" fill="#d8d8d8" stroke="#6e6e6e" stroke-width="1.6"/><rect x="-2.5" y="13" width="5" height="2" fill="#6e6e6e"/></g><circle cx="240" cy="958" r="11.5" fill="#fff" stroke="#c9c1b8" stroke-width="1.5"/><circle cx="240" cy="958" r="6.2" fill="#fff" stroke="#1e90e6" stroke-width="4.2"/><path d="M133.5,994.5 L149,1006.5 L133.5,1018.5 Z" fill="#f4f4f4" stroke="#2a2a2a" stroke-width="2.5" stroke-linejoin="miter"/><g transform="translate(189,1007) scale(0.9)"><path d="M0,-15 C7,-15 11,-10 11,-4 C11,1 7,4 5,7 L-5,7 C-7,4 -11,1 -11,-4 C-11,-10 -7,-15 0,-15 Z" fill="url(#gBulb)" stroke="#b8952a" stroke-width="1.6"/><rect x="-4.5" y="7" width="9" height="6" fill="#d8d8d8" stroke="#6e6e6e" stroke-width="1.6"/><rect x="-2.5" y="13" width="5" height="2" fill="#6e6e6e"/></g><circle cx="240" cy="1006" r="11.5" fill="#fff" stroke="#c9c1b8" stroke-width="1.5"/><circle cx="240" cy="1006" r="6.2" fill="#fff" stroke="#1e90e6" stroke-width="4.2"/><path d="M133.5,1042.5 L149,1054.5 L133.5,1066.5 Z" fill="#f4f4f4" stroke="#2a2a2a" stroke-width="2.5" stroke-linejoin="miter"/><g transform="translate(189,1055) scale(0.9)"><path d="M0,-15 C7,-15 11,-10 11,-4 C11,1 7,4 5,7 L-5,7 C-7,4 -11,1 -11,-4 C-11,-10 -7,-15 0,-15 Z" fill="url(#gBulb)" stroke="#b8952a" stroke-width="1.6"/><rect x="-4.5" y="7" width="9" height="6" fill="#d8d8d8" stroke="#6e6e6e" stroke-width="1.6"/><rect x="-2.5" y="13" width="5" height="2" fill="#6e6e6e"/></g><circle cx="240" cy="1054" r="11.5" fill="#fff" stroke="#c9c1b8" stroke-width="1.5"/><circle cx="240" cy="1054" r="6.2" fill="#fff" stroke="#1e90e6" stroke-width="4.2"/><path d="M133.5,1090.5 L149,1102.5 L133.5,1114.5 Z" fill="#f4f4f4" stroke="#2a2a2a" stroke-width="2.5" stroke-linejoin="miter"/><g transform="translate(189,1103) scale(0.9)"><path d="M0,-15 C7,-15 11,-10 11,-4 C11,1 7,4 5,7 L-5,7 C-7,4 -11,1 -11,-4 C-11,-10 -7,-15 0,-15 Z" fill="url(#gBulb)" stroke="#b8952a" stroke-width="1.6"/><rect x="-4.5" y="7" width="9" height="6" fill="#d8d8d8" stroke="#6e6e6e" stroke-width="1.6"/><rect x="-2.5" y="13" width="5" height="2" fill="#6e6e6e"/></g><circle cx="240" cy="1102" r="11.5" fill="#fff" stroke="#c9c1b8" stroke-width="1.5"/><circle cx="240" cy="1102" r="6.2" fill="#fff" stroke="#1e90e6" stroke-width="4.2"/><path d="M133.5,1138.5 L149,1150.5 L133.5,1162.5 Z" fill="#f4f4f4" stroke="#2a2a2a" stroke-width="2.5" stroke-linejoin="miter"/><g transform="translate(189,1151) scale(0.9)"><path d="M0,-15 C7,-15 11,-10 11,-4 C11,1 7,4 5,7 L-5,7 C-7,4 -11,1 -11,-4 C-11,-10 -7,-15 0,-15 Z" fill="url(#gBulb)" stroke="#b8952a" stroke-width="1.6"/><rect x="-4.5" y="7" width="9" height="6" fill="#d8d8d8" stroke="#6e6e6e" stroke-width="1.6"/><rect x="-2.5" y="13" width="5" height="2" fill="#6e6e6e"/></g><circle cx="240" cy="1150" r="11.5" fill="#fff" stroke="#c9c1b8" stroke-width="1.5"/><circle cx="240" cy="1150" r="6.2" fill="#fff" stroke="#1e90e6" stroke-width="4.2"/><path d="M133.5,1186.5 L149,1198.5 L133.5,1210.5 Z" fill="#f4f4f4" stroke="#2a2a2a" stroke-width="2.5" stroke-linejoin="miter"/><g transform="translate(189,1199) scale(0.9)"><path d="M0,-15 C7,-15 11,-10 11,-4 C11,1 7,4 5,7 L-5,7 C-7,4 -11,1 -11,-4 C-11,-10 -7,-15 0,-15 Z" fill="url(#gBulb)" stroke="#b8952a" stroke-width="1.6"/><rect x="-4.5" y="7" width="9" height="6" fill="#d8d8d8" stroke="#6e6e6e" stroke-width="1.6"/><rect x="-2.5" y="13" width="5" height="2" fill="#6e6e6e"/></g><circle cx="240" cy="1198" r="11.5" fill="#fff" stroke="#c9c1b8" stroke-width="1.5"/><circle cx="240" cy="1198" r="6.2" fill="#fff" stroke="#1e90e6" stroke-width="4.2"/><path d="M133.5,1234.5 L149,1246.5 L133.5,1258.5 Z" fill="#f4f4f4" stroke="#2a2a2a" stroke-width="2.5" stroke-linejoin="miter"/><g transform="translate(189,1247) scale(0.9)"><path d="M0,-15 C7,-15 11,-10 11,-4 C11,1 7,4 5,7 L-5,7 C-7,4 -11,1 -11,-4 C-11,-10 -7,-15 0,-15 Z" fill="url(#gBulb)" stroke="#b8952a" stroke-width="1.6"/><rect x="-4.5" y="7" width="9" height="6" fill="#d8d8d8" stroke="#6e6e6e" stroke-width="1.6"/><rect x="-2.5" y="13" width="5" height="2" fill="#6e6e6e"/></g><circle cx="240" cy="1246" r="11.5" fill="#fff" stroke="#c9c1b8" stroke-width="1.5"/><circle cx="240" cy="1246" r="6.2" fill="#fff" stroke="#1e90e6" stroke-width="4.2"/><path d="M97.5,1282.5 L113,1294.5 L97.5,1306.5 Z" fill="#f4f4f4" stroke="#2a2a2a" stroke-width="2.5" stroke-linejoin="miter"/><g transform="translate(153,1295) scale(0.9)"><path d="M0,-15 C7,-15 11,-10 11,-4 C11,1 7,4 5,7 L-5,7 C-7,4 -11,1 -11,-4 C-11,-10 -7,-15 0,-15 Z" fill="url(#gBulb)" stroke="#b8952a" stroke-width="1.6"/><rect x="-4.5" y="7" width="9" height="6" fill="#d8d8d8" stroke="#6e6e6e" stroke-width="1.6"/><rect x="-2.5" y="13" width="5" height="2" fill="#6e6e6e"/></g><path d="M189,1285 L195,1280 L219,1280 L219,1302 L213,1308 L189,1308 Z" fill="url(#gFolder)" stroke="#2f2f2f" stroke-width="2" stroke-linejoin="round"/><path d="M213,1285 L213,1308 M213,1285 L219,1280" stroke="#8a8a8a" stroke-width="1.4" fill="none"/><path d="M97.5,1330.5 L113,1342.5 L97.5,1354.5 Z" fill="#f4f4f4" stroke="#2a2a2a" stroke-width="2.5" stroke-linejoin="miter"/><g transform="translate(153,1343) scale(0.9)"><path d="M0,-15 C7,-15 11,-10 11,-4 C11,1 7,4 5,7 L-5,7 C-7,4 -11,1 -11,-4 C-11,-10 -7,-15 0,-15 Z" fill="url(#gBulb)" stroke="#b8952a" stroke-width="1.6"/><rect x="-4.5" y="7" width="9" height="6" fill="#d8d8d8" stroke="#6e6e6e" stroke-width="1.6"/><rect x="-2.5" y="13" width="5" height="2" fill="#6e6e6e"/></g><path d="M189,1333 L195,1328 L219,1328 L219,1350 L213,1356 L189,1356 Z" fill="url(#gFolder)" stroke="#2f2f2f" stroke-width="2" stroke-linejoin="round"/><path d="M213,1333 L213,1356 M213,1333 L219,1328" stroke="#8a8a8a" stroke-width="1.4" fill="none"/><path d="M97.5,1378.5 L113,1390.5 L97.5,1402.5 Z" fill="#f4f4f4" stroke="#2a2a2a" stroke-width="2.5" stroke-linejoin="miter"/><g transform="translate(153,1391) scale(0.9)"><path d="M0,-15 C7,-15 11,-10 11,-4 C11,1 7,4 5,7 L-5,7 C-7,4 -11,1 -11,-4 C-11,-10 -7,-15 0,-15 Z" fill="url(#gBulb)" stroke="#b8952a" stroke-width="1.6"/><rect x="-4.5" y="7" width="9" height="6" fill="#d8d8d8" stroke="#6e6e6e" stroke-width="1.6"/><rect x="-2.5" y="13" width="5" height="2" fill="#6e6e6e"/></g><path d="M189,1381 L195,1376 L219,1376 L219,1398 L213,1404 L189,1404 Z" fill="url(#gFolder)" stroke="#2f2f2f" stroke-width="2" stroke-linejoin="round"/><path d="M213,1381 L213,1404 M213,1381 L219,1376" stroke="#8a8a8a" stroke-width="1.4" fill="none"/><path d="M97.5,1426.5 L113,1438.5 L97.5,1450.5 Z" fill="#f4f4f4" stroke="#2a2a2a" stroke-width="2.5" stroke-linejoin="miter"/><g transform="translate(153,1439) scale(0.9)"><path d="M0,-15 C7,-15 11,-10 11,-4 C11,1 7,4 5,7 L-5,7 C-7,4 -11,1 -11,-4 C-11,-10 -7,-15 0,-15 Z" fill="url(#gBulb)" stroke="#b8952a" stroke-width="1.6"/><rect x="-4.5" y="7" width="9" height="6" fill="#d8d8d8" stroke="#6e6e6e" stroke-width="1.6"/><rect x="-2.5" y="13" width="5" height="2" fill="#6e6e6e"/></g><path d="M189,1429 L195,1424 L219,1424 L219,1446 L213,1452 L189,1452 Z" fill="url(#gFolder)" stroke="#2f2f2f" stroke-width="2" stroke-linejoin="round"/><path d="M213,1429 L213,1452 M213,1429 L219,1424" stroke="#8a8a8a" stroke-width="1.4" fill="none"/><path d="M97.5,1474.5 L113,1486.5 L97.5,1498.5 Z" fill="#f4f4f4" stroke="#2a2a2a" stroke-width="2.5" stroke-linejoin="miter"/><g transform="translate(153,1487) scale(0.9)"><path d="M0,-15 C7,-15 11,-10 11,-4 C11,1 7,4 5,7 L-5,7 C-7,4 -11,1 -11,-4 C-11,-10 -7,-15 0,-15 Z" fill="url(#gBulb)" stroke="#b8952a" stroke-width="1.6"/><rect x="-4.5" y="7" width="9" height="6" fill="#d8d8d8" stroke="#6e6e6e" stroke-width="1.6"/><rect x="-2.5" y="13" width="5" height="2" fill="#6e6e6e"/></g><path d="M189,1477 L195,1472 L219,1472 L219,1494 L213,1500 L189,1500 Z" fill="url(#gFolder)" stroke="#2f2f2f" stroke-width="2" stroke-linejoin="round"/><path d="M213,1477 L213,1500 M213,1477 L219,1472" stroke="#8a8a8a" stroke-width="1.4" fill="none"/><path d="M97.5,1522.5 L113,1534.5 L97.5,1546.5 Z" fill="#f4f4f4" stroke="#2a2a2a" stroke-width="2.5" stroke-linejoin="miter"/><g transform="translate(153,1535) scale(0.9)"><path d="M0,-15 C7,-15 11,-10 11,-4 C11,1 7,4 5,7 L-5,7 C-7,4 -11,1 -11,-4 C-11,-10 -7,-15 0,-15 Z" fill="url(#gBulb)" stroke="#b8952a" stroke-width="1.6"/><rect x="-4.5" y="7" width="9" height="6" fill="#d8d8d8" stroke="#6e6e6e" stroke-width="1.6"/><rect x="-2.5" y="13" width="5" height="2" fill="#6e6e6e"/></g><path d="M189,1525 L195,1520 L219,1520 L219,1542 L213,1548 L189,1548 Z" fill="url(#gFolder)" stroke="#2f2f2f" stroke-width="2" stroke-linejoin="round"/><path d="M213,1525 L213,1548 M213,1525 L219,1520" stroke="#8a8a8a" stroke-width="1.4" fill="none"/><path d="M97.5,1570.5 L113,1582.5 L97.5,1594.5 Z" fill="#f4f4f4" stroke="#2a2a2a" stroke-width="2.5" stroke-linejoin="miter"/><g transform="translate(153,1583) scale(0.9)"><path d="M0,-15 C7,-15 11,-10 11,-4 C11,1 7,4 5,7 L-5,7 C-7,4 -11,1 -11,-4 C-11,-10 -7,-15 0,-15 Z" fill="url(#gBulb)" stroke="#b8952a" stroke-width="1.6"/><rect x="-4.5" y="7" width="9" height="6" fill="#d8d8d8" stroke="#6e6e6e" stroke-width="1.6"/><rect x="-2.5" y="13" width="5" height="2" fill="#6e6e6e"/></g><path d="M189,1573 L195,1568 L219,1568 L219,1590 L213,1596 L189,1596 Z" fill="url(#gFolder)" stroke="#2f2f2f" stroke-width="2" stroke-linejoin="round"/><path d="M213,1573 L213,1596 M213,1573 L219,1568" stroke="#8a8a8a" stroke-width="1.4" fill="none"/><circle cx="590" cy="1647" r="8.5" fill="#222"/><rect x="584.5" y="1645.5" width="11" height="3" fill="#eee"/><rect x="588.5" y="1641.5" width="3" height="11" fill="#eee"/><rect x="614" y="1636" width="2" height="24" fill="#8a8a8a"/><rect x="618" y="1640" width="1.5" height="16" fill="#a5a5a5"/></svg>
<div class="a" style="left:1138px;top:1624px;width:290px;height:48px;background:#c9c9c9"></div>
<div class="a" style="left:1440px;top:1624px;width:188px;height:48px;background:#c9c9c9"></div>
<div class="a" style="left:16px;top:1680px;width:2736px;height:16px;background:#dadada"></div>
<div class="a" style="left:806px;top:1682px;width:1946px;height:14px;background:#969696"></div>
<div class="a" style="left:16px;top:1696px;width:2736px;height:84px;background:#d0d0d0"></div>
<div class="a" style="left:16px;top:1696px;width:2736px;height:4px;background:#d8d8d8"></div>
<div class="a" style="left:16px;top:1780px;width:2736px;height:16px;background:#070707"></div>
<div class="a" style="left:462px;top:1780px;width:72px;height:16px;background:#343434"></div>
<div class="a" style="left:482px;top:1793px;width:32px;height:3px;background:#e8f0f4"></div>
<div class="a" style="left:534px;top:1780px;width:626px;height:16px;background:#050505"></div>
<div class="a" style="left:1160px;top:1780px;width:310px;height:16px;background:#262626;overflow:hidden"><div class="t" style="left:100px;top:3px;font-size:22.5px;color:#050505">Samsung_T3 (F:)</div></div>
<div class="a" style="left:1470px;top:1780px;width:1282px;height:16px;background:#242424"></div>
<div class="a" style="left:2672px;top:1792px;width:34px;height:4px;background:#f0f0f0"></div>
<svg class="a" style="left:0;top:1620px" width="2768" height="176" viewBox="0 1620 2768 176"><defs><linearGradient id="tgW" x1="0" y1="0" x2="0" y2="1"><stop offset="0" stop-color="#ffffff"/><stop offset="1" stop-color="#cfd2da"/></linearGradient><linearGradient id="tgG" x1="0" y1="0" x2="0" y2="1"><stop offset="0" stop-color="#eef0f4"/><stop offset="1" stop-color="#9aa2b4"/></linearGradient><linearGradient id="tgO" x1="0" y1="0" x2="1" y2="1"><stop offset="0" stop-color="#f7c4a0"/><stop offset="1" stop-color="#e8824a"/></linearGradient><radialGradient id="tgS" cx="0.45" cy="0.45" r="0.6"><stop offset="0" stop-color="#f4faff"/><stop offset="0.35" stop-color="#c4dcf6"/><stop offset="1" stop-color="#86aee2"/></radialGradient></defs><rect x="38" y="1718" width="4" height="28" fill="#4a4a4a"/><path d="M62,1718 L62,1746 L42,1732 Z" fill="#4a4a4a"/><path d="M107,1720 L107,1745 L86,1732.500 Z" fill="#4a4a4a"/><rect x="108" y="1726" width="4" height="13" fill="#4a4a4a"/><rect x="136" y="1726" width="4" height="13" fill="#4a4a4a"/><path d="M141,1720 L141,1745 L162,1732.500 Z" fill="#4a4a4a"/><path d="M188,1716 L188,1748 L212,1732 Z" fill="#4a4a4a"/><path d="M237,1718 L237,1746 L258,1732 Z" fill="#4a4a4a"/><rect x="258" y="1718" width="4" height="28" fill="#4a4a4a"/><rect x="290" y="1766" width="6" height="4" fill="#6a6a6a"/><rect x="300" y="1766" width="8" height="4" fill="#6a6a6a"/><rect x="312" y="1766" width="2318" height="4" fill="#6a6a6a"/><rect x="323.6" y="1758" width="4" height="9" fill="#6a6a6a"/><rect x="308.6" y="1719" width="10.500" height="19" fill="url(#tgW)" stroke="#333" stroke-width="1.8"/><path d="M308.6,1728.500 L319.1,1728.500" stroke="#333" stroke-width="1.6"/><rect x="314.6" y="1738.500" width="10.500" height="10.500" fill="#a9d3f2" stroke="#1a5fa8" stroke-width="2"/><path d="M330.6,1743.800 L339.6,1743.800" stroke="#111" stroke-width="2.2"/><path d="M328.1,1743.800 L333.6,1739.500 L333.6,1748 Z" fill="#111"/><rect x="371.6" y="1758" width="4" height="9" fill="#6a6a6a"/><rect x="356.6" y="1719" width="10.500" height="19" fill="url(#tgW)" stroke="#333" stroke-width="1.8"/><path d="M356.6,1728.500 L367.1,1728.500" stroke="#333" stroke-width="1.6"/><rect x="362.6" y="1738.500" width="10.500" height="10.500" fill="#a9d3f2" stroke="#1a5fa8" stroke-width="2"/><path d="M378.6,1743.800 L387.6,1743.800" stroke="#111" stroke-width="2.2"/><path d="M376.1,1743.800 L381.6,1739.500 L381.6,1748 Z" fill="#111"/><rect x="419.6" y="1758" width="4" height="9" fill="#6a6a6a"/><rect x="404.6" y="1719" width="10.500" height="19" fill="url(#tgW)" stroke="#333" stroke-width="1.8"/><path d="M404.6,1728.500 L415.1,1728.500" stroke="#333" stroke-width="1.6"/><rect x="410.6" y="1738.500" width="10.500" height="10.500" fill="#a9d3f2" stroke="#1a5fa8" stroke-width="2"/><path d="M426.6,1743.800 L435.6,1743.800" stroke="#111" stroke-width="2.2"/><path d="M424.1,1743.800 L429.6,1739.500 L429.6,1748 Z" fill="#111"/><rect x="467.6" y="1758" width="4" height="9" fill="#6a6a6a"/><rect x="452.6" y="1719" width="10.500" height="19" fill="url(#tgW)" stroke="#333" stroke-width="1.8"/><path d="M452.6,1728.500 L463.1,1728.500" stroke="#333" stroke-width="1.6"/><rect x="458.6" y="1738.500" width="10.500" height="10.500" fill="#a9d3f2" stroke="#1a5fa8" stroke-width="2"/><path d="M474.6,1743.800 L483.6,1743.800" stroke="#111" stroke-width="2.2"/><path d="M472.1,1743.800 L477.6,1739.500 L477.6,1748 Z" fill="#111"/><rect x="515.6" y="1758" width="4" height="9" fill="#6a6a6a"/><rect x="500.6" y="1719" width="10.500" height="19" fill="url(#tgW)" stroke="#333" stroke-width="1.8"/><path d="M500.6,1728.500 L511.1,1728.500" stroke="#333" stroke-width="1.6"/><rect x="506.6" y="1738.500" width="10.500" height="10.500" fill="#a9d3f2" stroke="#1a5fa8" stroke-width="2"/><path d="M522.6,1743.800 L531.6,1743.800" stroke="#111" stroke-width="2.2"/><path d="M520.1,1743.800 L525.6,1739.500 L525.6,1748 Z" fill="#111"/><rect x="563.6" y="1758" width="4" height="9" fill="#6a6a6a"/><rect x="548.6" y="1719" width="10.500" height="19" fill="url(#tgW)" stroke="#333" stroke-width="1.8"/><path d="M548.6,1728.500 L559.1,1728.500" stroke="#333" stroke-width="1.6"/><rect x="554.6" y="1738.500" width="10.500" height="10.500" fill="#a9d3f2" stroke="#1a5fa8" stroke-width="2"/><path d="M570.6,1743.800 L579.6,1743.800" stroke="#111" stroke-width="2.2"/><path d="M568.1,1743.800 L573.6,1739.500 L573.6,1748 Z" fill="#111"/><rect x="611.6" y="1758" width="4" height="9" fill="#6a6a6a"/><rect x="596.6" y="1719" width="10.500" height="19" fill="url(#tgW)" stroke="#333" stroke-width="1.8"/><path d="M596.6,1728.500 L607.1,1728.500" stroke="#333" stroke-width="1.6"/><rect x="602.6" y="1738.500" width="10.500" height="10.500" fill="#a9d3f2" stroke="#1a5fa8" stroke-width="2"/><path d="M618.6,1743.800 L627.6,1743.800" stroke="#111" stroke-width="2.2"/><path d="M616.1,1743.800 L621.6,1739.500 L621.6,1748 Z" fill="#111"/><rect x="659.6" y="1758" width="4" height="9" fill="#6a6a6a"/><rect x="644.6" y="1719" width="10.500" height="19" fill="url(#tgW)" stroke="#333" stroke-width="1.8"/><path d="M644.6,1728.500 L655.1,1728.500" stroke="#333" stroke-width="1.6"/><rect x="650.6" y="1738.500" width="10.500" height="10.500" fill="#a9d3f2" stroke="#1a5fa8" stroke-width="2"/><path d="M666.6,1743.800 L675.6,1743.800" stroke="#111" stroke-width="2.2"/><path d="M664.1,1743.800 L669.6,1739.500 L669.6,1748 Z" fill="#111"/><rect x="707.6" y="1758" width="4" height="9" fill="#6a6a6a"/><rect x="692.6" y="1719" width="10.500" height="19" fill="url(#tgW)" stroke="#333" stroke-width="1.8"/><path d="M692.6,1728.500 L703.1,1728.500" stroke="#333" stroke-width="1.6"/><rect x="698.6" y="1738.500" width="10.500" height="10.500" fill="#a9d3f2" stroke="#1a5fa8" stroke-width="2"/><path d="M714.6,1743.800 L723.6,1743.800" stroke="#111" stroke-width="2.2"/><path d="M712.1,1743.800 L717.6,1739.500 L717.6,1748 Z" fill="#111"/><rect x="755.6" y="1758" width="4" height="9" fill="#6a6a6a"/><rect x="740.6" y="1719" width="10.500" height="19" fill="url(#tgW)" stroke="#333" stroke-width="1.8"/><path d="M740.6,1728.500 L751.1,1728.500" stroke="#333" stroke-width="1.6"/><rect x="746.6" y="1738.500" width="10.500" height="10.500" fill="#a9d3f2" stroke="#1a5fa8" stroke-width="2"/><path d="M762.6,1743.800 L771.6,1743.800" stroke="#111" stroke-width="2.2"/><path d="M760.1,1743.800 L765.6,1739.500 L765.6,1748 Z" fill="#111"/><rect x="803.6" y="1758" width="4" height="9" fill="#6a6a6a"/><rect x="788.6" y="1719" width="10.500" height="19" fill="url(#tgW)" stroke="#333" stroke-width="1.8"/><path d="M788.6,1728.500 L799.1,1728.500" stroke="#333" stroke-width="1.6"/><rect x="794.6" y="1738.500" width="10.500" height="10.500" fill="#a9d3f2" stroke="#1a5fa8" stroke-width="2"/><path d="M810.6,1743.800 L819.6,1743.800" stroke="#111" stroke-width="2.2"/><path d="M808.1,1743.800 L813.6,1739.500 L813.6,1748 Z" fill="#111"/><rect x="851.6" y="1758" width="4" height="9" fill="#6a6a6a"/><rect x="836.6" y="1719" width="10.500" height="19" fill="url(#tgW)" stroke="#333" stroke-width="1.8"/><path d="M836.6,1728.500 L847.1,1728.500" stroke="#333" stroke-width="1.6"/><rect x="842.6" y="1738.500" width="10.500" height="10.500" fill="#a9d3f2" stroke="#1a5fa8" stroke-width="2"/><path d="M858.6,1743.800 L867.6,1743.800" stroke="#111" stroke-width="2.2"/><path d="M856.1,1743.800 L861.6,1739.500 L861.6,1748 Z" fill="#111"/><rect x="899.6" y="1758" width="4" height="9" fill="#6a6a6a"/><path d="M885.0,1738 L903.0,1731 L914.0,1737 L896.0,1746 Z" fill="url(#tgW)" stroke="#6b7488" stroke-width="1.6"/><path d="M885.0,1729 L903.0,1721 L914.0,1727 L896.0,1737 Z" fill="url(#tgO)" stroke="#b4531a" stroke-width="1.6" stroke-dasharray="7 2"/><path d="M898.0,1731 L898.0,1719 M894.5,1722.500 L901.5,1722.500" stroke="#333" stroke-width="1.8" fill="none"/><rect x="947.6" y="1758" width="4" height="9" fill="#6a6a6a"/><path d="M933.0,1738 L951.0,1731 L962.0,1737 L944.0,1746 Z" fill="url(#tgW)" stroke="#6b7488" stroke-width="1.6"/><path d="M933.0,1729 L951.0,1721 L962.0,1727 L944.0,1737 Z" fill="url(#tgO)" stroke="#b4531a" stroke-width="1.6" stroke-dasharray="7 2"/><path d="M946.0,1731 L946.0,1719 M942.5,1722.500 L949.5,1722.500" stroke="#333" stroke-width="1.8" fill="none"/><rect x="995.6" y="1758" width="4" height="9" fill="#6a6a6a"/><path d="M979.6,1742 L987.6,1723 L993.6,1721 L993.6,1730 L985.6,1746 Z" fill="url(#tgG)" stroke="#444c5c" stroke-width="1.6" stroke-linejoin="round"/><path d="M998.6,1727 L1003.6,1724 L1011.6,1732 L1011.6,1747 L1004.6,1741 L998.6,1743 Z" fill="url(#tgG)" stroke="#444c5c" stroke-width="1.6" stroke-linejoin="round"/><rect x="994.6" y="1731" width="4" height="10" fill="#ef7a1a"/><rect x="998.6" y="1729" width="5" height="13" fill="#fff"/><rect x="1043.6" y="1758" width="4" height="9" fill="#6a6a6a"/><path d="M1029.0,1738 L1047.0,1731 L1058.0,1737 L1040.0,1746 Z" fill="url(#tgW)" stroke="#6b7488" stroke-width="1.6"/><path d="M1029.0,1729 L1047.0,1721 L1058.0,1727 L1040.0,1737 Z" fill="url(#tgO)" stroke="#b4531a" stroke-width="1.6" stroke-dasharray="7 2"/><path d="M1042.0,1731 L1042.0,1719 M1038.5,1722.500 L1045.5,1722.500" stroke="#333" stroke-width="1.8" fill="none"/><rect x="1091.6" y="1758" width="4" height="9" fill="#6a6a6a"/><path d="M1075.6,1742 L1083.6,1723 L1089.6,1721 L1089.6,1730 L1081.6,1746 Z" fill="url(#tgG)" stroke="#444c5c" stroke-width="1.6" stroke-linejoin="round"/><path d="M1094.6,1727 L1099.6,1724 L1107.6,1732 L1107.6,1747 L1100.6,1741 L1094.6,1743 Z" fill="url(#tgG)" stroke="#444c5c" stroke-width="1.6" stroke-linejoin="round"/><rect x="1090.6" y="1731" width="4" height="10" fill="#ef7a1a"/><rect x="1094.6" y="1729" width="5" height="13" fill="#fff"/><rect x="1139.6" y="1758" width="4" height="9" fill="#6a6a6a"/><path d="M1125.0,1738 L1143.0,1731 L1154.0,1737 L1136.0,1746 Z" fill="url(#tgW)" stroke="#6b7488" stroke-width="1.6"/><path d="M1125.0,1729 L1143.0,1721 L1154.0,1727 L1136.0,1737 Z" fill="url(#tgO)" stroke="#b4531a" stroke-width="1.6" stroke-dasharray="7 2"/><path d="M1138.0,1731 L1138.0,1719 M1134.5,1722.500 L1141.5,1722.500" stroke="#333" stroke-width="1.8" fill="none"/><rect x="1187.6" y="1758" width="4" height="9" fill="#6a6a6a"/><path d="M1171.6,1742 L1179.6,1723 L1185.6,1721 L1185.6,1730 L1177.6,1746 Z" fill="url(#tgG)" stroke="#444c5c" stroke-width="1.6" stroke-linejoin="round"/><path d="M1190.6,1727 L1195.6,1724 L1203.6,1732 L1203.6,1747 L1196.6,1741 L1190.6,1743 Z" fill="url(#tgG)" stroke="#444c5c" stroke-width="1.6" stroke-linejoin="round"/><rect x="1186.6" y="1731" width="4" height="10" fill="#ef7a1a"/><rect x="1190.6" y="1729" width="5" height="13" fill="#fff"/><rect x="1235.6" y="1758" width="4" height="9" fill="#6a6a6a"/><path d="M1219.6,1742 L1227.6,1723 L1233.6,1721 L1233.6,1730 L1225.6,1746 Z" fill="url(#tgG)" stroke="#444c5c" stroke-width="1.6" stroke-linejoin="round"/><path d="M1238.6,1727 L1243.6,1724 L1251.6,1732 L1251.6,1747 L1244.6,1741 L1238.6,1743 Z" fill="url(#tgG)" stroke="#444c5c" stroke-width="1.6" stroke-linejoin="round"/><rect x="1234.6" y="1731" width="4" height="10" fill="#ef7a1a"/><rect x="1238.6" y="1729" width="5" height="13" fill="#fff"/><rect x="1283.6" y="1758" width="4" height="9" fill="#6a6a6a"/><path d="M1269.0,1738 L1287.0,1731 L1298.0,1737 L1280.0,1746 Z" fill="url(#tgW)" stroke="#6b7488" stroke-width="1.6"/><path d="M1269.0,1729 L1287.0,1721 L1298.0,1727 L1280.0,1737 Z" fill="url(#tgO)" stroke="#b4531a" stroke-width="1.6" stroke-dasharray="7 2"/><path d="M1282.0,1731 L1282.0,1719 M1278.5,1722.500 L1285.5,1722.500" stroke="#333" stroke-width="1.8" fill="none"/><rect x="1331.6" y="1758" width="4" height="9" fill="#6a6a6a"/><path d="M1317.0,1738 L1335.0,1731 L1346.0,1737 L1328.0,1746 Z" fill="url(#tgW)" stroke="#6b7488" stroke-width="1.6"/><path d="M1317.0,1729 L1335.0,1721 L1346.0,1727 L1328.0,1737 Z" fill="url(#tgO)" stroke="#b4531a" stroke-width="1.6" stroke-dasharray="7 2"/><path d="M1330.0,1731 L1330.0,1719 M1326.5,1722.500 L1333.5,1722.500" stroke="#333" stroke-width="1.8" fill="none"/><rect x="1379.6" y="1758" width="4" height="9" fill="#6a6a6a"/><path d="M1363.6,1742 L1371.6,1723 L1377.6,1721 L1377.6,1730 L1369.6,1746 Z" fill="url(#tgG)" stroke="#444c5c" stroke-width="1.6" stroke-linejoin="round"/><path d="M1382.6,1727 L1387.6,1724 L1395.6,1732 L1395.6,1747 L1388.6,1741 L1382.6,1743 Z" fill="url(#tgG)" stroke="#444c5c" stroke-width="1.6" stroke-linejoin="round"/><rect x="1378.6" y="1731" width="4" height="10" fill="#ef7a1a"/><rect x="1382.6" y="1729" width="5" height="13" fill="#fff"/><rect x="1427.6" y="1758" width="4" height="9" fill="#6a6a6a"/><path d="M1411.6,1742 L1419.6,1723 L1425.6,1721 L1425.6,1730 L1417.6,1746 Z" fill="url(#tgG)" stroke="#444c5c" stroke-width="1.6" stroke-linejoin="round"/><path d="M1430.6,1727 L1435.6,1724 L1443.6,1732 L1443.6,1747 L1436.6,1741 L1430.6,1743 Z" fill="url(#tgG)" stroke="#444c5c" stroke-width="1.6" stroke-linejoin="round"/><rect x="1426.6" y="1731" width="4" height="10" fill="#ef7a1a"/><rect x="1430.6" y="1729" width="5" height="13" fill="#fff"/><rect x="1475.6" y="1758" width="4" height="9" fill="#6a6a6a"/><circle cx="1476.0" cy="1733.800" r="15" fill="url(#tgS)" stroke="#3a4f7a" stroke-width="1.8"/><rect x="1523.6" y="1758" width="4" height="9" fill="#6a6a6a"/><path d="M1509.0,1738 L1527.0,1731 L1538.0,1737 L1520.0,1746 Z" fill="url(#tgW)" stroke="#6b7488" stroke-width="1.6"/><path d="M1509.0,1729 L1527.0,1721 L1538.0,1727 L1520.0,1737 Z" fill="url(#tgO)" stroke="#b4531a" stroke-width="1.6" stroke-dasharray="7 2"/><path d="M1522.0,1731 L1522.0,1719 M1518.5,1722.500 L1525.5,1722.500" stroke="#333" stroke-width="1.8" fill="none"/><rect x="1571.6" y="1758" width="4" height="9" fill="#6a6a6a"/><path d="M1555.6,1742 L1563.6,1723 L1569.6,1721 L1569.6,1730 L1561.6,1746 Z" fill="url(#tgG)" stroke="#444c5c" stroke-width="1.6" stroke-linejoin="round"/><path d="M1574.6,1727 L1579.6,1724 L1587.6,1732 L1587.6,1747 L1580.6,1741 L1574.6,1743 Z" fill="url(#tgG)" stroke="#444c5c" stroke-width="1.6" stroke-linejoin="round"/><rect x="1570.6" y="1731" width="4" height="10" fill="#ef7a1a"/><rect x="1574.6" y="1729" width="5" height="13" fill="#fff"/><rect x="1619.6" y="1758" width="4" height="9" fill="#6a6a6a"/><circle cx="1620.0" cy="1733.800" r="15" fill="url(#tgS)" stroke="#3a4f7a" stroke-width="1.8"/><rect x="1667.6" y="1758" width="4" height="9" fill="#6a6a6a"/><path d="M1653.0,1738 L1671.0,1731 L1682.0,1737 L1664.0,1746 Z" fill="url(#tgW)" stroke="#6b7488" stroke-width="1.6"/><path d="M1653.0,1729 L1671.0,1721 L1682.0,1727 L1664.0,1737 Z" fill="url(#tgO)" stroke="#b4531a" stroke-width="1.6" stroke-dasharray="7 2"/><path d="M1666.0,1731 L1666.0,1719 M1662.5,1722.500 L1669.5,1722.500" stroke="#333" stroke-width="1.8" fill="none"/><rect x="1715.6" y="1758" width="4" height="9" fill="#6a6a6a"/><path d="M1699.6,1742 L1707.6,1723 L1713.6,1721 L1713.6,1730 L1705.6,1746 Z" fill="url(#tgG)" stroke="#444c5c" stroke-width="1.6" stroke-linejoin="round"/><path d="M1718.6,1727 L1723.6,1724 L1731.6,1732 L1731.6,1747 L1724.6,1741 L1718.6,1743 Z" fill="url(#tgG)" stroke="#444c5c" stroke-width="1.6" stroke-linejoin="round"/><rect x="1714.6" y="1731" width="4" height="10" fill="#ef7a1a"/><rect x="1718.6" y="1729" width="5" height="13" fill="#fff"/><rect x="1763.6" y="1758" width="4" height="9" fill="#6a6a6a"/><circle cx="1764.0" cy="1733.800" r="15" fill="url(#tgS)" stroke="#3a4f7a" stroke-width="1.8"/><rect x="1811.6" y="1758" width="4" height="9" fill="#6a6a6a"/><path d="M1797.0,1738 L1815.0,1731 L1826.0,1737 L1808.0,1746 Z" fill="url(#tgW)" stroke="#6b7488" stroke-width="1.6"/><path d="M1797.0,1729 L1815.0,1721 L1826.0,1727 L1808.0,1737 Z" fill="url(#tgO)" stroke="#b4531a" stroke-width="1.6" stroke-dasharray="7 2"/><path d="M1810.0,1731 L1810.0,1719 M1806.5,1722.500 L1813.5,1722.500" stroke="#333" stroke-width="1.8" fill="none"/><rect x="1859.6" y="1758" width="4" height="9" fill="#6a6a6a"/><circle cx="1860.0" cy="1733.800" r="15" fill="url(#tgS)" stroke="#3a4f7a" stroke-width="1.8"/><rect x="1907.6" y="1758" width="4" height="9" fill="#6a6a6a"/><path d="M1893.0,1738 L1911.0,1731 L1922.0,1737 L1904.0,1746 Z" fill="url(#tgW)" stroke="#6b7488" stroke-width="1.6"/><path d="M1893.0,1729 L1911.0,1721 L1922.0,1727 L1904.0,1737 Z" fill="url(#tgO)" stroke="#b4531a" stroke-width="1.6" stroke-dasharray="7 2"/><path d="M1906.0,1731 L1906.0,1719 M1902.5,1722.500 L1909.5,1722.500" stroke="#333" stroke-width="1.8" fill="none"/><rect x="1955.6" y="1758" width="4" height="9" fill="#6a6a6a"/><circle cx="1956.0" cy="1733.800" r="15" fill="url(#tgS)" stroke="#3a4f7a" stroke-width="1.8"/><rect x="2003.6" y="1758" width="4" height="9" fill="#6a6a6a"/><path d="M1989.0,1738 L2007.0,1731 L2018.0,1737 L2000.0,1746 Z" fill="url(#tgW)" stroke="#6b7488" stroke-width="1.6"/><path d="M1989.0,1729 L2007.0,1721 L2018.0,1727 L2000.0,1737 Z" fill="url(#tgO)" stroke="#b4531a" stroke-width="1.6" stroke-dasharray="7 2"/><path d="M2002.0,1731 L2002.0,1719 M1998.5,1722.500 L2005.5,1722.500" stroke="#333" stroke-width="1.8" fill="none"/><rect x="2051.6" y="1758" width="4" height="9" fill="#6a6a6a"/><path d="M2035.6,1742 L2043.6,1723 L2049.6,1721 L2049.6,1730 L2041.6,1746 Z" fill="url(#tgG)" stroke="#444c5c" stroke-width="1.6" stroke-linejoin="round"/><path d="M2054.6,1727 L2059.6,1724 L2067.6,1732 L2067.6,1747 L2060.6,1741 L2054.6,1743 Z" fill="url(#tgG)" stroke="#444c5c" stroke-width="1.6" stroke-linejoin="round"/><rect x="2050.6" y="1731" width="4" height="10" fill="#ef7a1a"/><rect x="2054.6" y="1729" width="5" height="13" fill="#fff"/><rect x="2099.6" y="1758" width="4" height="9" fill="#6a6a6a"/><path d="M2083.6,1742 L2091.6,1723 L2097.6,1721 L2097.6,1730 L2089.6,1746 Z" fill="url(#tgG)" stroke="#444c5c" stroke-width="1.6" stroke-linejoin="round"/><path d="M2102.6,1727 L2107.6,1724 L2115.6,1732 L2115.6,1747 L2108.6,1741 L2102.6,1743 Z" fill="url(#tgG)" stroke="#444c5c" stroke-width="1.6" stroke-linejoin="round"/><rect x="2098.6" y="1731" width="4" height="10" fill="#ef7a1a"/><rect x="2102.6" y="1729" width="5" height="13" fill="#fff"/><rect x="2147.6" y="1758" width="4" height="9" fill="#6a6a6a"/><path d="M2131.6,1742 L2139.6,1723 L2145.6,1721 L2145.6,1730 L2137.6,1746 Z" fill="url(#tgG)" stroke="#444c5c" stroke-width="1.6" stroke-linejoin="round"/><path d="M2150.6,1727 L2155.6,1724 L2163.6,1732 L2163.6,1747 L2156.6,1741 L2150.6,1743 Z" fill="url(#tgG)" stroke="#444c5c" stroke-width="1.6" stroke-linejoin="round"/><rect x="2146.6" y="1731" width="4" height="10" fill="#ef7a1a"/><rect x="2150.6" y="1729" width="5" height="13" fill="#fff"/><rect x="2195.6" y="1758" width="4" height="9" fill="#6a6a6a"/><circle cx="2196.0" cy="1733.800" r="15" fill="url(#tgS)" stroke="#3a4f7a" stroke-width="1.8"/><rect x="2243.6" y="1758" width="4" height="9" fill="#6a6a6a"/><circle cx="2244.0" cy="1733.800" r="15" fill="url(#tgS)" stroke="#3a4f7a" stroke-width="1.8"/><rect x="2291.6" y="1758" width="4" height="9" fill="#6a6a6a"/><circle cx="2292.0" cy="1733.800" r="15" fill="url(#tgS)" stroke="#3a4f7a" stroke-width="1.8"/><rect x="2339.6" y="1758" width="4" height="9" fill="#6a6a6a"/><path d="M2325.0,1738 L2343.0,1731 L2354.0,1737 L2336.0,1746 Z" fill="url(#tgW)" stroke="#6b7488" stroke-width="1.6"/><path d="M2325.0,1729 L2343.0,1721 L2354.0,1727 L2336.0,1737 Z" fill="url(#tgO)" stroke="#b4531a" stroke-width="1.6" stroke-dasharray="7 2"/><path d="M2338.0,1731 L2338.0,1719 M2334.5,1722.500 L2341.5,1722.500" stroke="#333" stroke-width="1.8" fill="none"/><rect x="2387.6" y="1758" width="4" height="9" fill="#6a6a6a"/><path d="M2373.0,1738 L2391.0,1731 L2402.0,1737 L2384.0,1746 Z" fill="url(#tgW)" stroke="#6b7488" stroke-width="1.6"/><path d="M2373.0,1729 L2391.0,1721 L2402.0,1727 L2384.0,1737 Z" fill="url(#tgO)" stroke="#b4531a" stroke-width="1.6" stroke-dasharray="7 2"/><path d="M2386.0,1731 L2386.0,1719 M2382.5,1722.500 L2389.5,1722.500" stroke="#333" stroke-width="1.8" fill="none"/><rect x="2435.6" y="1758" width="4" height="9" fill="#6a6a6a"/><path d="M2421.0,1738 L2439.0,1731 L2450.0,1737 L2432.0,1746 Z" fill="url(#tgW)" stroke="#6b7488" stroke-width="1.6"/><path d="M2421.0,1729 L2439.0,1721 L2450.0,1727 L2432.0,1737 Z" fill="url(#tgO)" stroke="#b4531a" stroke-width="1.6" stroke-dasharray="7 2"/><path d="M2434.0,1731 L2434.0,1719 M2430.5,1722.500 L2437.5,1722.500" stroke="#333" stroke-width="1.8" fill="none"/><rect x="2483.6" y="1758" width="4" height="9" fill="#6a6a6a"/><path d="M2467.6,1742 L2475.6,1723 L2481.6,1721 L2481.6,1730 L2473.6,1746 Z" fill="url(#tgG)" stroke="#444c5c" stroke-width="1.6" stroke-linejoin="round"/><path d="M2486.6,1727 L2491.6,1724 L2499.6,1732 L2499.6,1747 L2492.6,1741 L2486.6,1743 Z" fill="url(#tgG)" stroke="#444c5c" stroke-width="1.6" stroke-linejoin="round"/><rect x="2482.6" y="1731" width="4" height="10" fill="#ef7a1a"/><rect x="2486.6" y="1729" width="5" height="13" fill="#fff"/><rect x="2531.6" y="1758" width="4" height="9" fill="#6a6a6a"/><path d="M2515.6,1742 L2523.6,1723 L2529.6,1721 L2529.6,1730 L2521.6,1746 Z" fill="url(#tgG)" stroke="#444c5c" stroke-width="1.6" stroke-linejoin="round"/><path d="M2534.6,1727 L2539.6,1724 L2547.6,1732 L2547.6,1747 L2540.6,1741 L2534.6,1743 Z" fill="url(#tgG)" stroke="#444c5c" stroke-width="1.6" stroke-linejoin="round"/><rect x="2530.6" y="1731" width="4" height="10" fill="#ef7a1a"/><rect x="2534.6" y="1729" width="5" height="13" fill="#fff"/><rect x="2579.6" y="1758" width="4" height="9" fill="#6a6a6a"/><path d="M2563.6,1742 L2571.6,1723 L2577.6,1721 L2577.6,1730 L2569.6,1746 Z" fill="url(#tgG)" stroke="#444c5c" stroke-width="1.6" stroke-linejoin="round"/><path d="M2582.6,1727 L2587.6,1724 L2595.6,1732 L2595.6,1747 L2588.6,1741 L2582.6,1743 Z" fill="url(#tgG)" stroke="#444c5c" stroke-width="1.6" stroke-linejoin="round"/><rect x="2578.6" y="1731" width="4" height="10" fill="#ef7a1a"/><rect x="2582.6" y="1729" width="5" height="13" fill="#fff"/><rect x="2627.6" y="1758" width="4" height="9" fill="#6a6a6a"/><path d="M2618.6,1742 L2618.6,1728 L2627.6,1720 L2641.6,1734 L2635.6,1742 L2627.6,1733 L2625.6,1748 Z" fill="#fff" stroke="#ef8a1a" stroke-width="3"/><path d="M2618.6,1742 L2618.6,1728 L2623.6,1724 L2624.6,1748 Z" fill="#999" stroke="#444" stroke-width="1.4"/><path d="M2640,1706 L2664,1706 L2664,1712 L2653.500,1724 L2653.500,1770 L2649.500,1770 L2649.500,1724 L2640,1712 Z" fill="#6a6a6a"/><rect x="-4" y="-16.500" width="8" height="8" fill="#666" transform="translate(2718,1734) rotate(0)"/><rect x="-4" y="-16.500" width="8" height="8" fill="#666" transform="translate(2718,1734) rotate(45)"/><rect x="-4" y="-16.500" width="8" height="8" fill="#666" transform="translate(2718,1734) rotate(90)"/><rect x="-4" y="-16.500" width="8" height="8" fill="#666" transform="translate(2718,1734) rotate(135)"/><rect x="-4" y="-16.500" width="8" height="8" fill="#666" transform="translate(2718,1734) rotate(180)"/><rect x="-4" y="-16.500" width="8" height="8" fill="#666" transform="translate(2718,1734) rotate(225)"/><rect x="-4" y="-16.500" width="8" height="8" fill="#666" transform="translate(2718,1734) rotate(270)"/><rect x="-4" y="-16.500" width="8" height="8" fill="#666" transform="translate(2718,1734) rotate(315)"/><circle cx="2718" cy="1734" r="9" fill="none" stroke="#666" stroke-width="6"/><ellipse cx="1160" cy="1650" rx="14" ry="5.500" fill="none" stroke="#333" stroke-width="2.2"/><path d="M1158,1662 L1158,1640 L1155,1640 L1160,1631 L1165,1640 L1162,1640 L1162,1662 Z" fill="#fff" stroke="#333" stroke-width="1.8" stroke-linejoin="round"/><path d="M1146,1654 L1155,1650 L1154,1660 Z" fill="#333"/><path d="M1187,1645 L1198,1645 L1192.5,1652 Z" fill="#2b2b2b"/><rect x="1212" y="1644" width="29" height="18" fill="#fff" stroke="#333" stroke-width="2"/><rect x="1217" y="1650" width="19" height="7" fill="#9aa6c8" stroke="#333" stroke-width="1.6"/><path d="M1216,1642 L1222,1636 L1228,1640 L1236,1636 L1236,1642" fill="#aaa" stroke="#777" stroke-width="1.4"/><path d="M1268,1650 L1268,1640 Q1270,1637 1272,1640 L1272,1635 Q1274,1632 1276,1635 L1276,1634 Q1278,1631 1280,1634 L1280,1636 Q1283,1634 1284,1637 L1285,1648 L1290,1642 Q1293,1641 1292,1645 L1285,1658 L1282,1663 L1270,1663 L1264,1652 Q1264,1648 1268,1650 Z" fill="#fff" stroke="#333" stroke-width="1.8" stroke-linejoin="round"/><circle cx="1324" cy="1647" r="9" fill="#e9f0fa" stroke="#333" stroke-width="2.2"/><path d="M1331,1654 L1342,1661" stroke="#333" stroke-width="4.500" stroke-linecap="round"/><path d="M1336,1637 L1344,1637 M1340,1633 L1340,1641 M1336,1645 L1344,1645" stroke="#333" stroke-width="1.8"/><circle cx="1380" cy="1646" r="12" fill="#f2f2f2" stroke="#333" stroke-width="2.4"/><rect x="1374" y="1640" width="12" height="11" fill="#ddd" stroke="#333" stroke-width="1.6"/><path d="M1389,1655 L1397,1662" stroke="#333" stroke-width="4.500" stroke-linecap="round"/><path d="M1408,1645 L1419,1645 L1413.5,1652 Z" fill="#2b2b2b"/><rect x="1449" y="1634" width="30" height="22" fill="#fff" stroke="#333" stroke-width="2"/><rect x="1452.500" y="1637.500" width="23" height="15" fill="#8fb0e2" stroke="#33507f" stroke-width="1.4"/><path d="M1461,1657 L1467,1657 L1469,1662 L1459,1662 Z" fill="#ddd" stroke="#333" stroke-width="1.4"/><path d="M1485,1645 L1496,1645 L1490.5,1652 Z" fill="#2b2b2b"/><rect x="1512" y="1634" width="29" height="28" fill="url(#tgG)" stroke="#333" stroke-width="2"/><path d="M1519.25,1634 L1519.25,1662 M1512,1641 L1541,1641" stroke="#555" stroke-width="1.4"/><path d="M1526.5,1634 L1526.5,1662 M1512,1648 L1541,1648" stroke="#555" stroke-width="1.4"/><path d="M1533.75,1634 L1533.75,1662 M1512,1655 L1541,1655" stroke="#555" stroke-width="1.4"/><path d="M1546,1645 L1557,1645 L1551.5,1652 Z" fill="#2b2b2b"/><rect x="1573" y="1635" width="28" height="26" fill="#9dbbe6" stroke="#2f4f8f" stroke-width="2"/><path d="M1587,1635 L1587,1661 M1573,1648 L1601,1648" stroke="#2f4f8f" stroke-width="2"/><rect x="1577" y="1639.500" width="6" height="4" fill="none" stroke="#3f5f9f" stroke-width="1"/><rect x="1591" y="1639.500" width="6" height="4" fill="none" stroke="#3f5f9f" stroke-width="1"/><rect x="1577" y="1652.500" width="6" height="4" fill="none" stroke="#3f5f9f" stroke-width="1"/><rect x="1591" y="1652.500" width="6" height="4" fill="none" stroke="#3f5f9f" stroke-width="1"/><path d="M1608,1645 L1619,1645 L1613.5,1652 Z" fill="#2b2b2b"/></svg>
</body></html>
